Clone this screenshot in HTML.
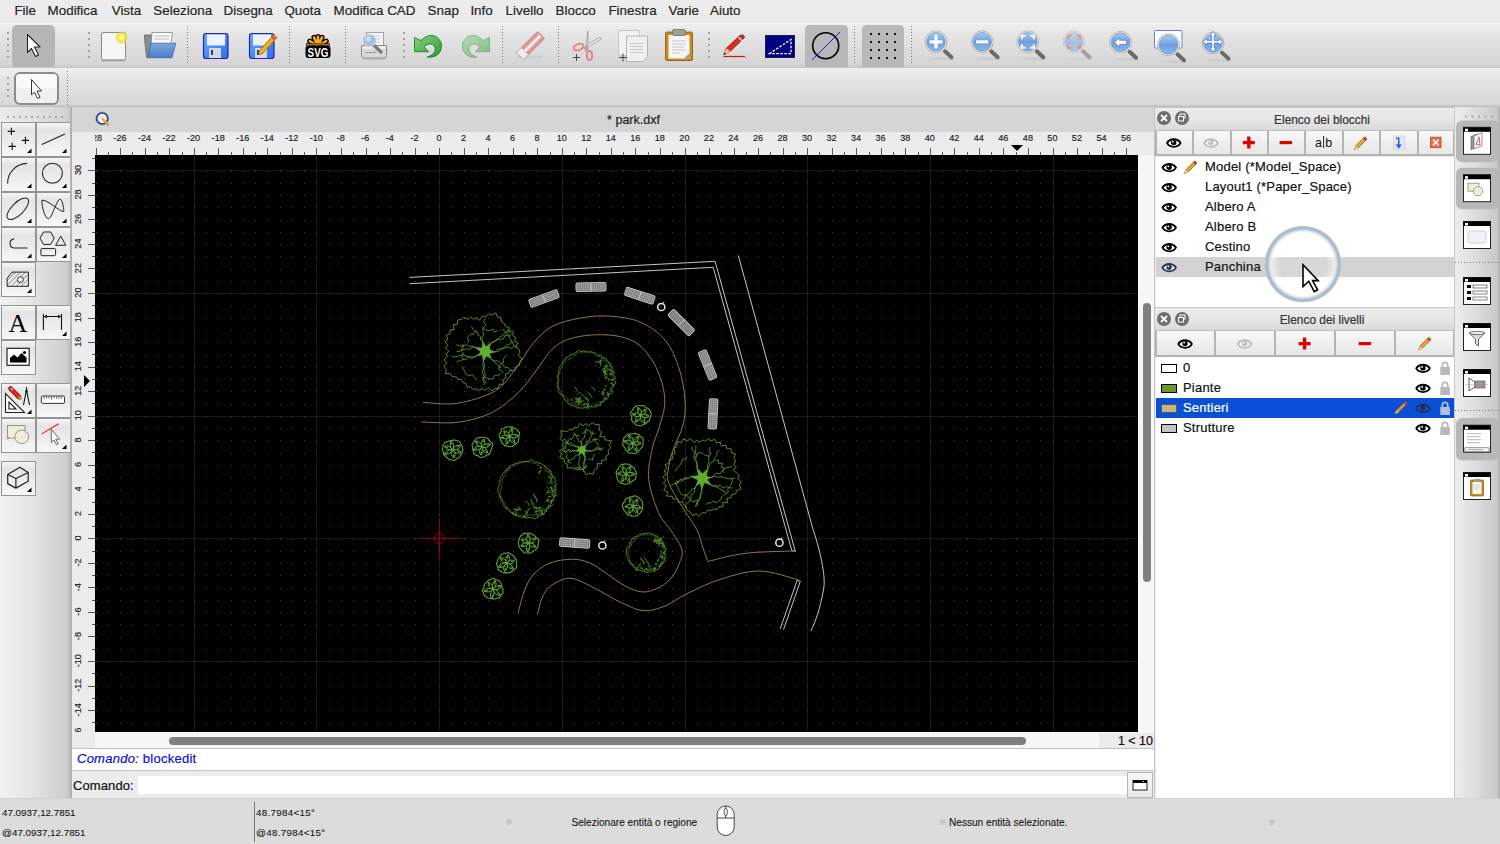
<!DOCTYPE html><html><head><meta charset="utf-8"><style>*{margin:0;padding:0;box-sizing:border-box}
html,body{width:1500px;height:844px;overflow:hidden;background:#ececec;font-family:"Liberation Sans",sans-serif;color:#1e1e1e}
div{-webkit-text-stroke:0.2px currentColor}
.a{position:absolute}
#menubar{left:0;top:0;width:1500px;height:23px;background:#ececec}
.mi{position:absolute;top:4px;font-size:13.4px;color:#262626;white-space:nowrap;line-height:14px}
#tb1{left:0;top:23px;width:1500px;height:45px;background:linear-gradient(#efefef,#e6e6e6 20%,#d6d6d6 90%,#c8c8c8);border-top:1px solid #f6f6f6}
#tb2{left:0;top:68px;width:1500px;height:39px;background:linear-gradient(#f0f0f0,#e4e4e4 30%,#d8d8d8 92%,#c4c4c4)}
#toolbox{left:0;top:107px;width:71px;height:691px;background:linear-gradient(90deg,#f2f2f2,#e6e6e6 40%,#cfcfcf 92%,#bdbdbd)}
#win{left:71px;top:107px;width:1084px;height:691px;background:#ececec;border-left:1px solid #b0b0b0}
#wtitle{left:72px;top:107px;width:1082px;height:25px;background:#d5d5d5}
#rtop{left:72px;top:132px;width:1082px;height:23px;background:#ececec}
#rleft{left:72px;top:155px;width:23px;height:593px;background:#ececec}
#canvas{left:95px;top:155px;width:1043px;height:577px;background:#000}
#vscroll{left:1138px;top:155px;width:16px;height:593px;background:#f7f7f7}
#hscroll{left:95px;top:732px;width:1043px;height:16px;background:#f7f7f7}
#status{left:0;top:798px;width:1500px;height:46px;background:#dcdcdc}
#rpanel{left:1154px;top:107px;width:301px;height:691px;background:#ececec;border-left:1px solid #c8c8c8}
#rtb{left:1455px;top:107px;width:45px;height:691px;background:linear-gradient(90deg,#ededed,#dedede 45%,#c9c9c9 92%,#b8b8b8)}
.btn{position:absolute;border:1px solid #9a9a9a;background:linear-gradient(#fbfbfb,#f0f0f0 50%,#e2e2e2)}
.tri{position:absolute;width:0;height:0;border-left:8px solid transparent;border-bottom:8px solid #000}
</style></head><body><div id="menubar" class="a">
<div class="mi" style="left:14.4px">File</div>
<div class="mi" style="left:47.6px">Modifica</div>
<div class="mi" style="left:111.7px">Vista</div>
<div class="mi" style="left:153.3px">Seleziona</div>
<div class="mi" style="left:223.6px">Disegna</div>
<div class="mi" style="left:284.4px">Quota</div>
<div class="mi" style="left:333.6px">Modifica CAD</div>
<div class="mi" style="left:427.6px">Snap</div>
<div class="mi" style="left:470.4px">Info</div>
<div class="mi" style="left:505.6px">Livello</div>
<div class="mi" style="left:555.6px">Blocco</div>
<div class="mi" style="left:608.4px">Finestra</div>
<div class="mi" style="left:668.6px">Varie</div>
<div class="mi" style="left:710.0px">Aiuto</div>
</div>
<div id="tb1" class="a"></div><div id="tb2" class="a"></div>
<div id="toolbox" class="a"></div>
<div id="win" class="a"></div><div id="wtitle" class="a"></div><div id="rtop" class="a"></div><div id="rleft" class="a"></div>
<div id="canvas" class="a"></div><div id="vscroll" class="a"></div><div id="hscroll" class="a"></div>
<div id="rpanel" class="a"></div><div id="rtb" class="a"></div><div id="status" class="a"></div>
<svg class="a" style="left:0;top:0" width="1500" height="110">
<defs><linearGradient id="gblue" x1="0" y1="0" x2="0" y2="1"><stop offset="0" stop-color="#a9c8f0"/><stop offset="0.5" stop-color="#6d9fe0"/><stop offset="1" stop-color="#8bb6ec"/></linearGradient><radialGradient id="gglow"><stop offset="0" stop-color="#ffffff"/><stop offset="0.35" stop-color="#f4f060"/><stop offset="0.7" stop-color="#e8e020" stop-opacity="0.8"/><stop offset="1" stop-color="#e8e020" stop-opacity="0"/></radialGradient><linearGradient id="gfold" x1="0" y1="0" x2="0" y2="1"><stop offset="0" stop-color="#7aa8e0"/><stop offset="1" stop-color="#4a7cc4"/></linearGradient><linearGradient id="gfl" x1="0" y1="0" x2="1" y2="1"><stop offset="0" stop-color="#6aa8ff"/><stop offset="1" stop-color="#2f6fe8"/></linearGradient><linearGradient id="gundo" x1="0" y1="0" x2="1" y2="1"><stop offset="0" stop-color="#8cd47a"/><stop offset="1" stop-color="#2a9a3a"/></linearGradient></defs>
<rect x="7" y="32" width="2" height="2" fill="#a0a0a0"/><rect x="7" y="38" width="2" height="2" fill="#a0a0a0"/><rect x="7" y="44" width="2" height="2" fill="#a0a0a0"/><rect x="7" y="50" width="2" height="2" fill="#a0a0a0"/><rect x="7" y="56" width="2" height="2" fill="#a0a0a0"/>
<rect x="12" y="25" width="43" height="43" rx="5" fill="#b6b6b6"/>
<path d="M27.5 34.5V52.5L31.5 48.5L35.5 56.5L38.5 55L34.5 47H40Z" fill="#fff" stroke="#222" stroke-width="1.1" stroke-linejoin="round"/>
<rect x="88" y="32" width="2" height="2" fill="#a0a0a0"/><rect x="88" y="38" width="2" height="2" fill="#a0a0a0"/><rect x="88" y="44" width="2" height="2" fill="#a0a0a0"/><rect x="88" y="50" width="2" height="2" fill="#a0a0a0"/><rect x="88" y="56" width="2" height="2" fill="#a0a0a0"/>
<rect x="101.5" y="32.5" width="24" height="27.5" rx="1.5" fill="#f6f6f6" stroke="#8a8a8a" stroke-width="1"/><line x1="102" y1="60.5" x2="125" y2="60.5" stroke="#9a9a9a" stroke-width="1.5"/>
<circle cx="121.6" cy="37.6" r="6.8" fill="url(#gglow)"/>
<path d="M144.5 35H152L151 44L147.5 57.5H146.5L144.5 38Z" fill="#8c8c8c" stroke="#6a6a6a" stroke-width="0.8"/>
<path d="M152 32.5H172.5L170.5 46H151Z" fill="#fafafa" stroke="#8a8a8a" stroke-width="0.8"/><path d="M155 36H169M154.5 39H169" stroke="#b8b8b8" stroke-width="1.2"/>
<path d="M151 43.2H175.8L172 57.7H147.3Z" fill="url(#gfold)" stroke="#3e68a8" stroke-width="0.8"/>
<line x1="187.5" y1="26" x2="187.5" y2="63" stroke="#7a7a7a" stroke-width="1" stroke-dasharray="1 2"/>
<rect x="203.5" y="33.5" width="24.5" height="25" rx="2.5" fill="url(#gfl)" stroke="#2525a8" stroke-width="1.2"/><rect x="207" y="34.5" width="18" height="11" fill="#eef2fb"/><rect x="209" y="48" width="12" height="10" fill="#d4d8e0"/><rect x="211" y="50" width="2" height="5" fill="#1a3ad0"/>
<rect x="249.5" y="33.5" width="24.5" height="25" rx="2.5" fill="url(#gfl)" stroke="#2525a8" stroke-width="1.2"/><rect x="253" y="34.5" width="18" height="11" fill="#eef2fb"/><rect x="255" y="48" width="12" height="10" fill="#d4d8e0"/><rect x="257" y="50" width="2" height="5" fill="#1a3ad0"/>
<path d="M259.5 50.5L274 34.5L277 37.5L262.5 53.5L258.5 54.5Z" fill="#f3b020" stroke="#a85a10" stroke-width="0.9"/><path d="M272 36.5L275 39.5" stroke="#e85030" stroke-width="2.5"/>
<line x1="289.5" y1="26" x2="289.5" y2="63" stroke="#7a7a7a" stroke-width="1" stroke-dasharray="1 2"/>
<path d="M318 46L309.8 41.2M318 46L314.0 37.4M318 46L318.0 36.5M318 46L322.0 37.4M318 46L326.2 41.2" stroke="#000" stroke-width="5.2" stroke-linecap="round"/><path d="M318 46L309.8 41.2M318 46L314.0 37.4M318 46L318.0 36.5M318 46L322.0 37.4M318 46L326.2 41.2" stroke="#f5a623" stroke-width="2.6" stroke-linecap="round"/>
<path d="M306 44.5H330" stroke="#000" stroke-width="2"/><path d="M307 44.8H329" stroke="#f5a623" stroke-width="1"/>
<rect x="305.5" y="45.5" width="25" height="12.5" rx="3" fill="#000"/><text x="318" y="56.6" text-anchor="middle" font-family="Liberation Sans" font-weight="bold" font-size="12" fill="#fff" transform="translate(318 0) scale(0.82 1) translate(-318 0)">SVG</text>
<line x1="345.5" y1="26" x2="345.5" y2="63" stroke="#7a7a7a" stroke-width="1" stroke-dasharray="1 2"/>
<rect x="366.5" y="32.5" width="17" height="15" fill="#f6f6f6" stroke="#9a9a9a" stroke-width="0.9"/><path d="M369 36H381M369 39H381M369 42H380" stroke="#c8c8c8" stroke-width="0.8"/>
<path d="M361.5 45.5H386.5V55.5Q386.5 58 384 58H364Q361.5 58 361.5 55.5Z" fill="#d8d8d8" stroke="#8a8a8a" stroke-width="1"/><path d="M362 46H386V49H362Z" fill="#ececec"/><path d="M365 52.5H376" stroke="#9a9a9a" stroke-width="1"/><ellipse cx="374" cy="59" rx="12" ry="1.3" fill="#b0b0b0" opacity="0.6"/>
<line x1="373" y1="44.5" x2="381" y2="52" stroke="#7a7a7a" stroke-width="3.2" stroke-linecap="round"/><circle cx="369.5" cy="40.5" r="5.8" fill="#9cc0ee" stroke="#c8c8c8" stroke-width="1.6"/><circle cx="368.5" cy="39" r="2.5" fill="#d6e6fa" opacity="0.8"/>
<rect x="403" y="32" width="2" height="2" fill="#a0a0a0"/><rect x="403" y="38" width="2" height="2" fill="#a0a0a0"/><rect x="403" y="44" width="2" height="2" fill="#a0a0a0"/><rect x="403" y="50" width="2" height="2" fill="#a0a0a0"/><rect x="403" y="56" width="2" height="2" fill="#a0a0a0"/>
<path d="M414.5 37.5V51.7H428.5L424 47Q428 42.5 432.5 44.5Q437 47.5 434 53Q431 56 427 57.2Q437 58 440.5 51Q444 42 436 36.5Q428 33 421 40.5Z" fill="url(#gundo)" stroke="#1a8030" stroke-width="0.9"/>
<g opacity="0.5"><path d="M489.5 37.5V51.7H475.5L480 47Q476 42.5 471.5 44.5Q467 47.5 470 53Q473 56 477 57.2Q467 58 463.5 51Q460 42 468 36.5Q476 33 483 40.5Z" fill="url(#gundo)" stroke="#1a8030" stroke-width="0.9"/></g>
<line x1="502.5" y1="26" x2="502.5" y2="63" stroke="#7a7a7a" stroke-width="1" stroke-dasharray="1 2"/>
<g opacity="0.75"><ellipse cx="530" cy="57" rx="13" ry="1.6" fill="#c8c8c8"/><g transform="translate(530.5 45.5) rotate(-45)"><rect x="-15" y="-5" width="30" height="10" rx="1.5" fill="#e08080" stroke="#b06060" stroke-width="0.8"/><rect x="-15" y="-5" width="7" height="10" fill="#f4f4f4" stroke="#a0a0a0" stroke-width="0.8"/><rect x="-8" y="-1.5" width="22" height="3" fill="#f8f0f0"/></g></g>
<line x1="558.5" y1="26" x2="558.5" y2="63" stroke="#7a7a7a" stroke-width="1" stroke-dasharray="1 2"/>
<g opacity="0.85"><path d="M588 31V50L585 52Z" fill="#f0f0f0" stroke="#8a8a8a" stroke-width="0.8"/><path d="M600 37L588 44L586 48L601 39Z" fill="#f0f0f0" stroke="#8a8a8a" stroke-width="0.8"/><ellipse cx="578.5" cy="47" rx="5" ry="3" fill="none" stroke="#e07878" stroke-width="2" transform="rotate(-20 578.5 47)"/><ellipse cx="589.5" cy="55.5" rx="2.6" ry="4.5" fill="none" stroke="#e07878" stroke-width="2"/><path d="M583 47L588 50" stroke="#e07878" stroke-width="2"/></g><path d="M573 57.5H580M576.5 54V61" stroke="#444" stroke-width="1"/>
<rect x="618.5" y="30.5" width="21" height="25" rx="1.5" fill="#f2f2f2" stroke="#c4c4c4" stroke-width="0.9"/><path d="M626 36.5H638M626 41H638" stroke="#d0d0d0"/><path d="M626.5 36H647.5V57L643 61.5H626.5Z" fill="#f0f0f0" stroke="#b0b0b0" stroke-width="0.9"/><path d="M630 43.5H644M630 46.5H643M630 49.5H643M630 52.5H644" stroke="#c4c4c4" stroke-width="0.9"/><path d="M619 57.5H627M623 53.5V61.5" stroke="#444"/>
<rect x="665.5" y="32" width="27" height="28.5" rx="1.5" fill="#c98a1e" stroke="#8e5e10" stroke-width="0.9"/><rect x="668.5" y="35" width="21" height="23.5" fill="#f6f6f6"/><path d="M672 41H686M672 44H686M672 47H684M672 50H686M672 53H680" stroke="#c0c0c0" stroke-width="0.9"/><path d="M684 58.5L689.5 53V58.5Z" fill="#9a9a9a"/><rect x="672.5" y="29.5" width="13" height="6" rx="1.5" fill="#a0a090" stroke="#707060" stroke-width="0.8"/>
<rect x="708" y="32" width="2" height="2" fill="#a0a0a0"/><rect x="708" y="38" width="2" height="2" fill="#a0a0a0"/><rect x="708" y="44" width="2" height="2" fill="#a0a0a0"/><rect x="708" y="50" width="2" height="2" fill="#a0a0a0"/><rect x="708" y="56" width="2" height="2" fill="#a0a0a0"/>
<path d="M723.5 56.5H745" stroke="#e01010" stroke-width="1.2"/><path d="M724 54.5L726 48.5L740 35.5Q742.5 34 744 36L744.5 37.5L730.5 51Z" fill="#e02a1a" stroke="#7a2a10" stroke-width="0.9"/><path d="M724 54.5L726 48.5L730.5 51Z" fill="#f0c890"/><path d="M738.5 37.5L742 40.5" stroke="#e8e8e8" stroke-width="1.6"/><circle cx="724.6" cy="54" r="0.9" fill="#222"/>
<rect x="765.5" y="35.5" width="29" height="22" fill="#000080" stroke="#202040" stroke-width="1"/><path d="M769.5 53.6L791 39.5V53.6Z" fill="none" stroke="#fff" stroke-width="1.3" stroke-dasharray="2.5 1.5"/>
<path d="M805 68V30Q805 25 810 25H843Q848 25 848 30V68Z" fill="#b8b8b8"/>
<circle cx="825.7" cy="45.7" r="13" fill="none" stroke="#000" stroke-width="1.6"/><line x1="812" y1="60" x2="840" y2="32" stroke="#1a1aee" stroke-width="1"/>
<line x1="854.5" y1="26" x2="854.5" y2="63" stroke="#7a7a7a" stroke-width="1" stroke-dasharray="1 2"/>
<path d="M862 68V30Q862 25 867 25H899Q904 25 904 30V68Z" fill="#b8b8b8"/>
<rect x="870" y="33" width="2" height="2" fill="#111"/>
<rect x="870" y="41" width="2" height="2" fill="#111"/>
<rect x="870" y="49" width="2" height="2" fill="#111"/>
<rect x="870" y="57" width="2" height="2" fill="#111"/>
<rect x="878" y="33" width="2" height="2" fill="#111"/>
<rect x="878" y="41" width="2" height="2" fill="#111"/>
<rect x="878" y="49" width="2" height="2" fill="#111"/>
<rect x="878" y="57" width="2" height="2" fill="#111"/>
<rect x="886" y="33" width="2" height="2" fill="#111"/>
<rect x="886" y="41" width="2" height="2" fill="#111"/>
<rect x="886" y="49" width="2" height="2" fill="#111"/>
<rect x="886" y="57" width="2" height="2" fill="#111"/>
<rect x="894" y="33" width="2" height="2" fill="#111"/>
<rect x="894" y="41" width="2" height="2" fill="#111"/>
<rect x="894" y="49" width="2" height="2" fill="#111"/>
<rect x="894" y="57" width="2" height="2" fill="#111"/>
<line x1="911.5" y1="26" x2="911.5" y2="63" stroke="#7a7a7a" stroke-width="1" stroke-dasharray="1 2"/>
<g opacity="1.0"><ellipse cx="942" cy="58.8" rx="12" ry="1.5" fill="#c4c4c4" opacity="0.6"/><line x1="945" y1="51.3" x2="951.5" y2="57.3" stroke="#6a6a6a" stroke-width="4" stroke-linecap="round"/><circle cx="936" cy="41.8" r="11" fill="#e8e8e0" stroke="#b8b8b0" stroke-width="1"/><circle cx="936" cy="41.8" r="9.3" fill="url(#gblue)" stroke="#5a86c8" stroke-width="0.6"/><path d="M929.5 41.8H942.5M936 35.3V48.3" stroke="#fff" stroke-width="3.2"/></g>
<g opacity="1.0"><ellipse cx="988.2" cy="58.8" rx="12" ry="1.5" fill="#c4c4c4" opacity="0.6"/><line x1="991.2" y1="51.3" x2="997.7" y2="57.3" stroke="#6a6a6a" stroke-width="4" stroke-linecap="round"/><circle cx="982.2" cy="41.8" r="11" fill="#e8e8e0" stroke="#b8b8b0" stroke-width="1"/><circle cx="982.2" cy="41.8" r="9.3" fill="url(#gblue)" stroke="#5a86c8" stroke-width="0.6"/><path d="M976.2 41.8H988.2" stroke="#fff" stroke-width="3"/></g>
<g opacity="1.0"><ellipse cx="1033.8" cy="58.8" rx="12" ry="1.5" fill="#c4c4c4" opacity="0.6"/><line x1="1036.8" y1="51.3" x2="1043.3" y2="57.3" stroke="#6a6a6a" stroke-width="4" stroke-linecap="round"/><circle cx="1027.8" cy="41.8" r="11" fill="#e8e8e0" stroke="#b8b8b0" stroke-width="1"/><circle cx="1027.8" cy="41.8" r="9.3" fill="url(#gblue)" stroke="#5a86c8" stroke-width="0.6"/><path d="M1021.8 39.3V35.8H1025.3M1030.3 35.8H1033.8V39.3M1033.8 44.3V47.8H1030.3M1025.3 47.8H1021.8V44.3" stroke="#fff" stroke-width="2" fill="none"/></g>
<g opacity="0.5"><ellipse cx="1080" cy="58.8" rx="12" ry="1.5" fill="#c4c4c4" opacity="0.6"/><line x1="1083" y1="51.3" x2="1089.5" y2="57.3" stroke="#6a6a6a" stroke-width="4" stroke-linecap="round"/><circle cx="1074" cy="41.8" r="11" fill="#e8e8e0" stroke="#b8b8b0" stroke-width="1"/><circle cx="1074" cy="41.8" r="9.3" fill="url(#gblue)" stroke="#5a86c8" stroke-width="0.6"/><path d="M1068 39.3V35.8H1071.5M1076.5 35.8H1080V39.3M1080 44.3V47.8H1076.5M1071.5 47.8H1068V44.3" stroke="#f04040" stroke-width="2" fill="none"/></g>
<g opacity="1.0"><ellipse cx="1126.6" cy="59.3" rx="12" ry="1.5" fill="#c4c4c4" opacity="0.6"/><line x1="1129.6" y1="51.8" x2="1136.1" y2="57.8" stroke="#6a6a6a" stroke-width="4" stroke-linecap="round"/><circle cx="1120.6" cy="42.3" r="11" fill="#e8e8e0" stroke="#b8b8b0" stroke-width="1"/><circle cx="1120.6" cy="42.3" r="9.3" fill="url(#gblue)" stroke="#5a86c8" stroke-width="0.6"/><path d="M1114.6 42.3L1119.6 37.3V40.3H1126.6V44.3H1119.6V47.3Z" fill="#fff" stroke="#3a6ab8" stroke-width="0.6"/></g>
<rect x="1154.5" y="30.5" width="27.5" height="17.5" rx="1" fill="#fff" stroke="#5a86d0" stroke-width="1"/>
<g opacity="1.0"><ellipse cx="1174.5" cy="61.8" rx="12" ry="1.5" fill="#c4c4c4" opacity="0.6"/><line x1="1177.5" y1="54.3" x2="1184.0" y2="60.3" stroke="#6a6a6a" stroke-width="4" stroke-linecap="round"/><circle cx="1168.5" cy="44.8" r="11" fill="#e8e8e0" stroke="#b8b8b0" stroke-width="1"/><circle cx="1168.5" cy="44.8" r="9.3" fill="url(#gblue)" stroke="#5a86c8" stroke-width="0.6"/></g>
<g opacity="1.0"><ellipse cx="1219" cy="60.1" rx="12" ry="1.5" fill="#c4c4c4" opacity="0.6"/><line x1="1222" y1="52.6" x2="1228.5" y2="58.6" stroke="#6a6a6a" stroke-width="4" stroke-linecap="round"/><circle cx="1213" cy="43.1" r="11" fill="#e8e8e0" stroke="#b8b8b0" stroke-width="1"/><circle cx="1213" cy="43.1" r="9.3" fill="url(#gblue)" stroke="#5a86c8" stroke-width="0.6"/><path d="M1213 31.299999999999997L1216 35.8H1214.2V40.599999999999994H1219V38.8L1223.5 41.8L1219 44.8V43.0H1214.2V47.8H1216L1213 52.3L1210 47.8H1211.8V43.0H1207V44.8L1202.5 41.8L1207 38.8V40.599999999999994H1211.8V35.8H1210Z" fill="#fff" stroke="#4a7ac8" stroke-width="0.7"/></g>
<rect x="7" y="77" width="2" height="2" fill="#a0a0a0"/><rect x="7" y="83" width="2" height="2" fill="#a0a0a0"/><rect x="7" y="89" width="2" height="2" fill="#a0a0a0"/><rect x="7" y="95" width="2" height="2" fill="#a0a0a0"/>
<rect x="15" y="73" width="43" height="31" rx="5" fill="#f0f0f0" stroke="#8c8c8c" stroke-width="2"/>
<rect x="16" y="74" width="41" height="14" rx="4" fill="#fafafa"/>
<path d="M31.5 79.5V95L34.5 92L37.5 98.5L40 97.3L37 91H41.5Z" fill="#fff" stroke="#333" stroke-width="1" stroke-linejoin="round"/>
<line x1="67.5" y1="71" x2="67.5" y2="105" stroke="#7a7a7a" stroke-width="1" stroke-dasharray="1 2"/>
</svg>
<div class="a" style="left:0;top:67px;width:1500px;height:1px;background:#c6c6c6"></div>
<div class="a" style="left:0;top:106px;width:1500px;height:1px;background:#bcbcbc"></div>
<svg class="a" style="left:0;top:0" width="72" height="800">
<defs><linearGradient id="bg" x1="0" y1="0" x2="0" y2="1"><stop offset="0" stop-color="#f7f7f7"/><stop offset="0.22" stop-color="#e4e4e4"/><stop offset="0.6" stop-color="#ededed"/><stop offset="1" stop-color="#f7f7f7"/></linearGradient><pattern id="hat" width="3.5" height="3.5" patternUnits="userSpaceOnUse" patternTransform="rotate(45)"><line x1="0" y1="0" x2="0" y2="3.5" stroke="#444" stroke-width="0.9"/></pattern></defs>
<rect x="0" y="107" width="71" height="14" fill="#dcdcdc" opacity="0.35"/>
<rect x="7" y="116" width="2" height="2" fill="#a8a8a8"/>
<rect x="13" y="116" width="2" height="2" fill="#a8a8a8"/>
<rect x="19" y="116" width="2" height="2" fill="#a8a8a8"/>
<rect x="25" y="116" width="2" height="2" fill="#a8a8a8"/>
<rect x="31" y="116" width="2" height="2" fill="#a8a8a8"/>
<rect x="37" y="116" width="2" height="2" fill="#a8a8a8"/>
<rect x="43" y="116" width="2" height="2" fill="#a8a8a8"/>
<rect x="49" y="116" width="2" height="2" fill="#a8a8a8"/>
<rect x="55" y="116" width="2" height="2" fill="#a8a8a8"/>
<rect x="61" y="116" width="2" height="2" fill="#a8a8a8"/>
<rect x="1.5" y="122.5" width="34" height="34" fill="url(#bg)" stroke="#949494" stroke-width="1"/><path d="M27 153H31.5V148.5Z" fill="#000"/>
<rect x="36.5" y="122.5" width="34" height="34" fill="url(#bg)" stroke="#949494" stroke-width="1"/><path d="M62 153H66.5V148.5Z" fill="#000"/>
<rect x="1.5" y="157.5" width="34" height="34" fill="url(#bg)" stroke="#949494" stroke-width="1"/><path d="M27 188H31.5V183.5Z" fill="#000"/>
<rect x="36.5" y="157.5" width="34" height="34" fill="url(#bg)" stroke="#949494" stroke-width="1"/><path d="M62 188H66.5V183.5Z" fill="#000"/>
<rect x="1.5" y="192.5" width="34" height="34" fill="url(#bg)" stroke="#949494" stroke-width="1"/><path d="M27 223H31.5V218.5Z" fill="#000"/>
<rect x="36.5" y="192.5" width="34" height="34" fill="url(#bg)" stroke="#949494" stroke-width="1"/><path d="M62 223H66.5V218.5Z" fill="#000"/>
<rect x="1.5" y="227.5" width="34" height="34" fill="url(#bg)" stroke="#949494" stroke-width="1"/><path d="M27 258H31.5V253.5Z" fill="#000"/>
<rect x="36.5" y="227.5" width="34" height="34" fill="url(#bg)" stroke="#949494" stroke-width="1"/><path d="M62 258H66.5V253.5Z" fill="#000"/>
<rect x="1.5" y="262.5" width="34" height="34" fill="url(#bg)" stroke="#949494" stroke-width="1"/><path d="M27 293H31.5V288.5Z" fill="#000"/>
<rect x="1.5" y="305.5" width="34" height="34" fill="url(#bg)" stroke="#949494" stroke-width="1"/>
<rect x="36.5" y="305.5" width="34" height="34" fill="url(#bg)" stroke="#949494" stroke-width="1"/><path d="M62 336H66.5V331.5Z" fill="#000"/>
<rect x="1.5" y="340.5" width="34" height="34" fill="url(#bg)" stroke="#949494" stroke-width="1"/>
<rect x="1.5" y="383.5" width="34" height="34" fill="url(#bg)" stroke="#949494" stroke-width="1"/><path d="M27 414H31.5V409.5Z" fill="#000"/>
<rect x="36.5" y="383.5" width="34" height="34" fill="url(#bg)" stroke="#949494" stroke-width="1"/>
<rect x="1.5" y="418.5" width="34" height="34" fill="url(#bg)" stroke="#949494" stroke-width="1"/>
<rect x="36.5" y="418.5" width="34" height="34" fill="url(#bg)" stroke="#949494" stroke-width="1"/><path d="M62 449H66.5V444.5Z" fill="#000"/>
<rect x="1.5" y="461.5" width="34" height="34" fill="url(#bg)" stroke="#949494" stroke-width="1"/><path d="M27 492H31.5V487.5Z" fill="#000"/>
<path d="M7.8 131.4H15M11.4 127.8V135M21.8 140.4H29M25.4 136.8V144M8.6 146.4H15.8M12.2 142.8V150" stroke="#111" stroke-width="1.1"/>
<path d="M41.8 144.6L64.9 133.9" stroke="#222" fill="none" stroke-width="1.1"/>
<path d="M7.6 183.4A20 20 0 0 1 27.1 163.4" stroke="#222" fill="none" stroke-width="1.1"/>
<circle cx="52.4" cy="173.2" r="10" stroke="#222" fill="none" stroke-width="1.1"/>
<ellipse cx="17.8" cy="208.8" rx="14" ry="6" transform="rotate(-45 17.8 208.8)" stroke="#222" fill="none" stroke-width="1"/>
<path d="M41.8 200.3C42 208 45 218.6 48.4 218.6C51 218.6 53 211 55.1 207C57 203 59 197.5 60.9 199.5C62.5 201 64.5 211.5 63.6 211.5C60 212 47 199 41.8 200.3Z" stroke="#222" fill="none" stroke-width="1"/>
<path d="M14.2 238.9A4.6 4.6 0 0 0 13.8 248H27.6" stroke="#222" fill="none" stroke-width="1.1"/>
<path d="M43.5 232L50.6 232L54.2 238.2L50.6 244.4L43.5 244.4L40 238.2Z" stroke="#222" fill="none" stroke-width="1"/>
<path d="M55.6 245.3H65.8L60.7 236.1Z" stroke="#222" fill="none" stroke-width="1"/>
<rect x="40.9" y="248.6" width="14.7" height="7.1" rx="1" stroke="#222" fill="none" stroke-width="1"/>
<path d="M7.1 278.3L12 272.1H28.4V286.3H7.1Z" fill="url(#hat)" stroke="#222" stroke-width="1"/><circle cx="20.4" cy="279.7" r="3" fill="#f0f0f0" stroke="#222" stroke-width="0.9"/>
<text x="18" y="332" text-anchor="middle" font-family="Liberation Serif" font-size="26" fill="#000">A</text>
<path d="M43.4 313.9V330M61.5 313.9V330M44 316.5H61" stroke="#111" stroke-width="1.1"/><path d="M44 316.5L47 314.5V318.5ZM61 316.5L58 314.5V318.5Z" fill="#111"/>
<rect x="7" y="348.3" width="22.2" height="17" fill="#fff" stroke="#222" stroke-width="1.2"/><path d="M10 362.5V358L14 354.5L17.5 357.5L21.5 353L26.5 357.5V362.5Z" fill="#000"/><circle cx="24.5" cy="352.5" r="1.6" fill="#000"/>
<path d="M5.5 393.5V412.5H24.5Z" fill="#fff" stroke="#222" stroke-width="1.1"/><path d="M9 402V409H16Z" fill="#fff" stroke="#111" stroke-width="1.1"/>
<path d="M10.5 388.5L19 397" stroke="#7a2010" stroke-width="4.6" stroke-linecap="round"/><path d="M10.5 388.5L19 397" stroke="#e82a20" stroke-width="3" stroke-linecap="round"/><path d="M11 388L13 390" stroke="#f8c0c0" stroke-width="1.2"/><path d="M18.5 396.5L21.5 399.5" stroke="#c89050" stroke-width="2"/>
<path d="M26.5 387V390M26.5 390L23.5 405M26.5 390L29.5 405" stroke="#111" stroke-width="1.1" fill="none"/><circle cx="26.5" cy="391" r="1.2" fill="#111"/>
<rect x="41.3" y="396" width="23.2" height="7.4" rx="1.2" fill="#fff" stroke="#333" stroke-width="1"/><path d="M44 396.5V399M46.5 396.5V398.5M49 396.5V398.5M51.5 396.5V399.5M54 396.5V398.5M56.5 396.5V398.5M59 396.5V399M61.5 396.5V398.5" stroke="#333" stroke-width="0.8"/>
<rect x="7.5" y="425.6" width="17.5" height="12.4" fill="#f2eedc" stroke="#8a8a7a" stroke-width="0.9"/><circle cx="21.7" cy="436.8" r="6.8" fill="#f2eedc" fill-opacity="0.85" stroke="#8a8a7a" stroke-width="0.9"/><circle cx="7.9" cy="438" r="1.3" fill="#f07070"/>
<path d="M41.6 433.9L58.7 423.7" stroke="#f01818" stroke-width="1.1"/><path d="M51.3 429.3V442.5L54 440L56.5 444.8L58.3 443.8L55.8 439.2H59.5Z" fill="#fff" stroke="#555" stroke-width="0.9" stroke-linejoin="round"/>
<path d="M19.9 467.2L28.2 472.5V481.3L15.9 488.1L7.7 483.6V474.5ZM7.7 474.5L15.9 478.5L28.2 472.5M15.9 478.5V488.1" stroke="#222" stroke-width="1.2" fill="none" stroke-linejoin="round"/>
</svg>
<div class="a" style="left:70px;top:107px;width:1px;height:691px;background:#b4b4b4"></div>
<svg class="a" style="left:0;top:0" width="1500" height="844">
<defs><clipPath id="rl"><rect x="72" y="155" width="23" height="577"/></clipPath><clipPath id="rt"><rect x="95" y="132" width="1043" height="23"/></clipPath></defs>
<g clip-path="url(#rt)"><path d="M96.5 148V155M108.5 152V155M120.5 148V155M132.5 152V155M145.5 148V155M157.5 152V155M169.5 148V155M182.5 152V155M194.5 148V155M206.5 152V155M218.5 148V155M231.5 152V155M243.5 148V155M255.5 152V155M267.5 148V155M280.5 152V155M292.5 148V155M304.5 152V155M316.5 148V155M329.5 152V155M341.5 148V155M353.5 152V155M366.5 148V155M378.5 152V155M390.5 148V155M402.5 152V155M415.5 148V155M427.5 152V155M439.5 148V155M451.5 152V155M464.5 148V155M476.5 152V155M488.5 148V155M500.5 152V155M513.5 148V155M525.5 152V155M537.5 148V155M550.5 152V155M562.5 148V155M574.5 152V155M586.5 148V155M599.5 152V155M611.5 148V155M623.5 152V155M635.5 148V155M648.5 152V155M660.5 148V155M672.5 152V155M685.5 148V155M697.5 152V155M709.5 148V155M721.5 152V155M734.5 148V155M746.5 152V155M758.5 148V155M770.5 152V155M783.5 148V155M795.5 152V155M807.5 148V155M819.5 152V155M832.5 148V155M844.5 152V155M856.5 148V155M869.5 152V155M881.5 148V155M893.5 152V155M905.5 148V155M918.5 152V155M930.5 148V155M942.5 152V155M954.5 148V155M967.5 152V155M979.5 148V155M991.5 152V155M1003.5 148V155M1016.5 152V155M1028.5 148V155M1040.5 152V155M1053.5 148V155M1065.5 152V155M1077.5 148V155M1089.5 152V155M1102.5 148V155M1114.5 152V155M1126.5 148V155" stroke="#5a5a5a" stroke-width="1" fill="none"/></g>
<g clip-path="url(#rl)"><path d="M88 735.5H95M92 722.5H95M88 710.5H95M92 698.5H95M88 686.5H95M92 673.5H95M88 661.5H95M92 649.5H95M88 636.5H95M92 624.5H95M88 612.5H95M92 600.5H95M88 587.5H95M92 575.5H95M88 563.5H95M92 551.5H95M88 538.5H95M92 526.5H95M88 514.5H95M92 502.5H95M88 489.5H95M92 477.5H95M88 465.5H95M92 452.5H95M88 440.5H95M92 428.5H95M88 416.5H95M92 403.5H95M88 391.5H95M92 379.5H95M88 367.5H95M92 354.5H95M88 342.5H95M92 330.5H95M88 318.5H95M92 305.5H95M88 293.5H95M92 281.5H95M88 268.5H95M92 256.5H95M88 244.5H95M92 232.5H95M88 219.5H95M92 207.5H95M88 195.5H95M92 183.5H95M88 170.5H95M92 158.5H95" stroke="#5a5a5a" stroke-width="1" fill="none"/></g>
<g clip-path="url(#rt)" font-family="Liberation Sans" font-size="9.1" fill="#1a1a1a" stroke="#1a1a1a" stroke-width="0.15"><text x="95.5" y="141" text-anchor="middle">-28</text><text x="120.0" y="141" text-anchor="middle">-26</text><text x="144.6" y="141" text-anchor="middle">-24</text><text x="169.1" y="141" text-anchor="middle">-22</text><text x="193.6" y="141" text-anchor="middle">-20</text><text x="218.2" y="141" text-anchor="middle">-18</text><text x="242.7" y="141" text-anchor="middle">-16</text><text x="267.2" y="141" text-anchor="middle">-14</text><text x="291.8" y="141" text-anchor="middle">-12</text><text x="316.3" y="141" text-anchor="middle">-10</text><text x="340.9" y="141" text-anchor="middle">-8</text><text x="365.4" y="141" text-anchor="middle">-6</text><text x="389.9" y="141" text-anchor="middle">-4</text><text x="414.5" y="141" text-anchor="middle">-2</text><text x="439.0" y="141" text-anchor="middle">0</text><text x="463.5" y="141" text-anchor="middle">2</text><text x="488.1" y="141" text-anchor="middle">4</text><text x="512.6" y="141" text-anchor="middle">6</text><text x="537.1" y="141" text-anchor="middle">8</text><text x="561.7" y="141" text-anchor="middle">10</text><text x="586.2" y="141" text-anchor="middle">12</text><text x="610.8" y="141" text-anchor="middle">14</text><text x="635.3" y="141" text-anchor="middle">16</text><text x="659.8" y="141" text-anchor="middle">18</text><text x="684.4" y="141" text-anchor="middle">20</text><text x="708.9" y="141" text-anchor="middle">22</text><text x="733.4" y="141" text-anchor="middle">24</text><text x="758.0" y="141" text-anchor="middle">26</text><text x="782.5" y="141" text-anchor="middle">28</text><text x="807.0" y="141" text-anchor="middle">30</text><text x="831.6" y="141" text-anchor="middle">32</text><text x="856.1" y="141" text-anchor="middle">34</text><text x="880.6" y="141" text-anchor="middle">36</text><text x="905.2" y="141" text-anchor="middle">38</text><text x="929.7" y="141" text-anchor="middle">40</text><text x="954.3" y="141" text-anchor="middle">42</text><text x="978.8" y="141" text-anchor="middle">44</text><text x="1003.3" y="141" text-anchor="middle">46</text><text x="1027.9" y="141" text-anchor="middle">48</text><text x="1052.4" y="141" text-anchor="middle">50</text><text x="1076.9" y="141" text-anchor="middle">52</text><text x="1101.5" y="141" text-anchor="middle">54</text><text x="1126.0" y="141" text-anchor="middle">56</text></g>
<g clip-path="url(#rl)" font-family="Liberation Sans" font-size="9.1" fill="#1a1a1a" stroke="#1a1a1a" stroke-width="0.15"><text transform="translate(81 734.3) rotate(-90)" text-anchor="middle">-16</text><text transform="translate(81 709.8) rotate(-90)" text-anchor="middle">-14</text><text transform="translate(81 685.2) rotate(-90)" text-anchor="middle">-12</text><text transform="translate(81 660.7) rotate(-90)" text-anchor="middle">-10</text><text transform="translate(81 636.1) rotate(-90)" text-anchor="middle">-8</text><text transform="translate(81 611.6) rotate(-90)" text-anchor="middle">-6</text><text transform="translate(81 587.1) rotate(-90)" text-anchor="middle">-4</text><text transform="translate(81 562.5) rotate(-90)" text-anchor="middle">-2</text><text transform="translate(81 538.0) rotate(-90)" text-anchor="middle">0</text><text transform="translate(81 513.5) rotate(-90)" text-anchor="middle">2</text><text transform="translate(81 488.9) rotate(-90)" text-anchor="middle">4</text><text transform="translate(81 464.4) rotate(-90)" text-anchor="middle">6</text><text transform="translate(81 439.9) rotate(-90)" text-anchor="middle">8</text><text transform="translate(81 415.3) rotate(-90)" text-anchor="middle">10</text><text transform="translate(81 390.8) rotate(-90)" text-anchor="middle">12</text><text transform="translate(81 366.2) rotate(-90)" text-anchor="middle">14</text><text transform="translate(81 341.7) rotate(-90)" text-anchor="middle">16</text><text transform="translate(81 317.2) rotate(-90)" text-anchor="middle">18</text><text transform="translate(81 292.6) rotate(-90)" text-anchor="middle">20</text><text transform="translate(81 268.1) rotate(-90)" text-anchor="middle">22</text><text transform="translate(81 243.6) rotate(-90)" text-anchor="middle">24</text><text transform="translate(81 219.0) rotate(-90)" text-anchor="middle">26</text><text transform="translate(81 194.5) rotate(-90)" text-anchor="middle">28</text><text transform="translate(81 170.0) rotate(-90)" text-anchor="middle">30</text></g>
<path d="M1011 145H1023L1017 151Z" fill="#000"/>
<path d="M84 375V387L90 381Z" fill="#000"/>
</svg>
<div class="a" style="left:72px;top:132px;width:23px;height:23px;background:#ececec"></div>
<div class="a" style="left:1138px;top:132px;width:16px;height:23px;background:#ececec"></div>
<div class="a" style="left:563.5px;top:113px;width:140px;text-align:center;font-size:12.5px;color:#222">* park.dxf</div>
<div class="a" style="left:169px;top:737px;width:857px;height:8px;border-radius:4px;background:#808080"></div>
<div class="a" style="left:1143px;top:303px;width:8px;height:279px;border-radius:4px;background:#808080"></div>
<div class="a" style="left:1099px;top:733px;width:55px;height:15px;background:#ebebeb"></div>
<div class="a" style="left:1099px;top:734px;width:54px;text-align:right;font-size:12.5px;color:#111;line-height:14px">1 &lt; 10</div>
<div class="a" style="left:72px;top:748px;width:1082px;height:1px;background:#c2c2c2"></div>
<div class="a" style="left:72px;top:749px;width:1082px;height:21px;background:#fff"></div>
<div class="a" style="left:77px;top:751px;font-size:13px;letter-spacing:0.25px;color:#1010d0;white-space:nowrap"><i>Comando:</i> blockedit</div>
<div class="a" style="left:72px;top:770px;width:1082px;height:1px;background:#c6c6c6"></div>
<div class="a" style="left:72px;top:771px;width:1082px;height:27px;background:#ececec"></div>
<div class="a" style="left:73px;top:778px;font-size:13px;letter-spacing:0.1px;color:#111">Comando:</div>
<div class="a" style="left:138px;top:776px;width:989px;height:18px;background:#fff"></div>
<div class="a" style="left:1127px;top:772px;width:26px;height:26px;border:1px solid #b4b4b4;background:linear-gradient(#f8f8f8,#e8e8e8)"></div>
<svg class="a" style="left:1132px;top:779px" width="16" height="12"><rect x="1" y="1.5" width="14" height="9.5" fill="#fff" stroke="#222" stroke-width="1"/><rect x="1" y="1" width="14" height="3" fill="#000"/><rect x="11" y="2" width="1" height="1" fill="#fff"/></svg>
<svg class="a" style="left:94px;top:111px" width="16" height="16" viewBox="0 0 16 16"><circle cx="8.2" cy="7.5" r="5.6" fill="#f4f4f6" stroke="#2c3f8c" stroke-width="1.8"/><circle cx="8.2" cy="7.5" r="6.6" fill="none" stroke="#8a9ac8" stroke-width="0.6"/><path d="M5 5.5L7 7M9 4.5L9.5 6.5M11 7.5L10 8" stroke="#e0a0a0" stroke-width="0.6"/><path d="M7.8 7.2L13.2 12.8" stroke="#f0b020" stroke-width="2.2"/><path d="M13 12.5L14.6 14.2" stroke="#e06060" stroke-width="1.6"/></svg>
<div class="a" style="left:1154px;top:107px;width:1px;height:691px;background:#c4c4c4"></div>
<div class="a" style="left:1155px;top:107px;width:300px;height:24px;background:linear-gradient(#ececec,#e4e4e4 60%,#dadada);border-top:1px solid #c8c8c8;border-bottom:1px solid #c0c0c0"></div><div class="a" style="left:1155px;top:112.5px;width:334px;text-align:center;font-size:11.9px;color:#333;white-space:nowrap">Elenco dei blocchi</div>
<div class="a" style="left:1155px;top:307px;width:300px;height:24px;background:linear-gradient(#ececec,#e4e4e4 60%,#dadada);border-top:1px solid #c8c8c8;border-bottom:1px solid #c0c0c0"></div><div class="a" style="left:1155px;top:312.5px;width:334px;text-align:center;font-size:11.9px;color:#333;white-space:nowrap">Elenco dei livelli</div>
<div class="a" style="left:1155px;top:131px;width:300px;height:25px;background:linear-gradient(#f9f9f9,#eeeeee 55%,#e6e6e6);border-bottom:2px solid #b4b4b4"></div><div class="a" style="left:1155px;top:131px;width:2px;height:25px;background:#b4b4b4"></div><div class="a" style="left:1192px;top:131px;width:2px;height:25px;background:#b4b4b4"></div><div class="a" style="left:1230px;top:131px;width:2px;height:25px;background:#b4b4b4"></div><div class="a" style="left:1267px;top:131px;width:2px;height:25px;background:#b4b4b4"></div><div class="a" style="left:1304px;top:131px;width:2px;height:25px;background:#b4b4b4"></div><div class="a" style="left:1342px;top:131px;width:2px;height:25px;background:#b4b4b4"></div><div class="a" style="left:1379px;top:131px;width:2px;height:25px;background:#b4b4b4"></div><div class="a" style="left:1417px;top:131px;width:2px;height:25px;background:#b4b4b4"></div><div class="a" style="left:1453px;top:131px;width:2px;height:25px;background:#b4b4b4"></div>
<div class="a" style="left:1155px;top:331px;width:300px;height:26px;background:linear-gradient(#f9f9f9,#eeeeee 55%,#e6e6e6);border-bottom:2px solid #b4b4b4"></div><div class="a" style="left:1155px;top:331px;width:2px;height:26px;background:#b4b4b4"></div><div class="a" style="left:1214px;top:331px;width:2px;height:26px;background:#b4b4b4"></div><div class="a" style="left:1274px;top:331px;width:2px;height:26px;background:#b4b4b4"></div><div class="a" style="left:1334px;top:331px;width:2px;height:26px;background:#b4b4b4"></div><div class="a" style="left:1394px;top:331px;width:2px;height:26px;background:#b4b4b4"></div><div class="a" style="left:1453px;top:331px;width:2px;height:26px;background:#b4b4b4"></div>
<div class="a" style="left:1156px;top:157px;width:298px;height:150px;background:#fff"></div>
<div class="a" style="left:1156px;top:357px;width:298px;height:441px;background:#fff"></div>
<div class="a" style="left:1156px;top:257px;width:298px;height:20px;background:#d2d2d2"></div>
<div class="a" style="left:1156px;top:398px;width:298px;height:20px;background:#0a4fd6"></div>
<div class="a" style="left:1454px;top:107px;width:1px;height:691px;background:#c8c8c8"></div>
<div class="a" style="left:1205px;top:159px;font-size:13px;letter-spacing:0.2px;color:#111;white-space:nowrap;line-height:16px">Model (*Model_Space)</div>
<div class="a" style="left:1205px;top:179px;font-size:13px;letter-spacing:0.2px;color:#111;white-space:nowrap;line-height:16px">Layout1 (*Paper_Space)</div>
<div class="a" style="left:1205px;top:199px;font-size:13px;letter-spacing:0.2px;color:#111;white-space:nowrap;line-height:16px">Albero A</div>
<div class="a" style="left:1205px;top:219px;font-size:13px;letter-spacing:0.2px;color:#111;white-space:nowrap;line-height:16px">Albero B</div>
<div class="a" style="left:1205px;top:239px;font-size:13px;letter-spacing:0.2px;color:#111;white-space:nowrap;line-height:16px">Cestino</div>
<div class="a" style="left:1205px;top:259px;font-size:13px;letter-spacing:0.2px;color:#111;white-space:nowrap;line-height:16px">Panchina</div>
<div class="a" style="left:1183px;top:360px;font-size:13px;letter-spacing:0.2px;color:#111;white-space:nowrap;line-height:16px">0</div>
<div class="a" style="left:1161px;top:364px;width:16px;height:9px;background:#fff;border:1px solid #000"></div>
<div class="a" style="left:1183px;top:380px;font-size:13px;letter-spacing:0.2px;color:#111;white-space:nowrap;line-height:16px">Piante</div>
<div class="a" style="left:1161px;top:384px;width:16px;height:9px;background:#6a9a2a;border:1px solid #000"></div>
<div class="a" style="left:1183px;top:400px;font-size:13px;letter-spacing:0.2px;color:#fff;white-space:nowrap;line-height:16px">Sentieri</div>
<div class="a" style="left:1161px;top:404px;width:16px;height:9px;background:#c8b488;border:1px solid #5a5a5a"></div>
<div class="a" style="left:1183px;top:420px;font-size:13px;letter-spacing:0.2px;color:#111;white-space:nowrap;line-height:16px">Strutture</div>
<div class="a" style="left:1161px;top:424px;width:16px;height:9px;background:#c4c4c4;border:1px solid #000"></div>
<svg class="a" style="left:0;top:0" width="1500" height="844">
<defs><g id="eye"><path d="M-0.3 5.8C2.2 -0.4 12.8 -0.4 15.3 5.8C12.8 12 2.2 12 -0.3 5.8Z" fill="currentColor"/><path d="M1.9 6C4.5 2.2 10.5 2.2 13.1 6C10.5 9.6 4.5 9.6 1.9 6Z" fill="#fff"/><circle cx="7.4" cy="5.4" r="2.7" fill="currentColor"/><circle cx="6.6" cy="4.5" r="0.9" fill="#fff"/></g><g id="eyeh"><path d="M-0.3 5.8C2.2 -0.4 12.8 -0.4 15.3 5.8C12.8 12 2.2 12 -0.3 5.8Z" fill="#1e2c6a"/><path d="M1.9 6C4.5 2.2 10.5 2.2 13.1 6C10.5 9.6 4.5 9.6 1.9 6Z" fill="#2f55c8"/><circle cx="7.4" cy="5.4" r="2.7" fill="#1e2c6a"/></g><g id="pen"><path d="M0.5 13.5L1.8 9.8L10.8 0.8L13 3L4 12Z" fill="#e8a830" stroke="#8a5a18" stroke-width="0.8"/><path d="M9.8 1.8L12 4" stroke="#e03030" stroke-width="2.2"/><path d="M0.5 13.5L1.8 9.8L4 12Z" fill="#f0d8a8"/></g><g id="lock"><path d="M2.3 6.5V4A2.7 2.7 0 0 1 7.7 4V6.5" fill="none" stroke="currentColor" stroke-width="1.7"/><rect x="0.3" y="6" width="9.6" height="8" fill="currentColor"/></g></defs>
<use href="#eye" x="1161.7" y="161.8" style="color:#000"/>
<use href="#eye" x="1161.7" y="181.8" style="color:#000"/>
<use href="#eye" x="1161.7" y="201.8" style="color:#000"/>
<use href="#eye" x="1161.7" y="221.8" style="color:#000"/>
<use href="#eye" x="1161.7" y="241.8" style="color:#000"/>
<use href="#eye" x="1161.7" y="261.8" style="color:#2a3a55"/>
<use href="#pen" x="1184" y="160"/>
<use href="#eye" x="1166.3" y="137.2" style="color:#000"/>
<use href="#eye" x="1203.5" y="137.2" style="color:#a8a8a8" opacity="0.7"/>
<path d="M1242.8 142.6H1254.8M1248.8 136.6V148.6" stroke="#e00000" stroke-width="3.4"/>
<path d="M1279.6 142.6H1292" stroke="#e00000" stroke-width="3.2"/>
<text x="1323.6" y="147" text-anchor="middle" font-family="Liberation Sans" font-size="12.5" fill="#111">a b</text><path d="M1323.6 136V148" stroke="#111" stroke-width="0.9"/>
<use href="#pen" x="1354" y="136"/>
<rect x="1393.5" y="136" width="11" height="13" fill="#e4e8f4" stroke="#c0c8dc" stroke-width="0.6"/><path d="M1396 137.5H1399.5V144.5H1402L1398.8 148.5L1395.5 144.5H1398V139H1396Z" fill="#2858f0"/>
<rect x="1430.5" y="137.2" width="10.5" height="10.5" fill="#e87050" stroke="#c04020" stroke-width="0.8"/><path d="M1433 139.7L1438.5 145.2M1438.5 139.7L1433 145.2" stroke="#fff" stroke-width="1.6"/>
<use href="#eye" x="1177.6" y="338.2" style="color:#000"/>
<use href="#eye" x="1237.1" y="338.2" style="color:#a8a8a8" opacity="0.7"/>
<path d="M1298.6 343.6H1310.6M1304.6 337.6V349.6" stroke="#e00000" stroke-width="3.4"/>
<path d="M1358.7 343.6H1371.1" stroke="#e00000" stroke-width="3.2"/>
<use href="#pen" x="1418" y="336.5"/>
<use href="#eye" x="1415.5" y="362.5" style="color:#000"/>
<use href="#lock" x="1440" y="361" style="color:#b8b8b8"/>
<use href="#eye" x="1415.5" y="382.5" style="color:#000"/>
<use href="#lock" x="1440" y="381" style="color:#b8b8b8"/>
<use href="#eyeh" x="1415.5" y="402.5"/>
<use href="#lock" x="1440" y="401" style="color:#b4c0d4"/>
<use href="#eye" x="1415.5" y="422.5" style="color:#000"/>
<use href="#lock" x="1440" y="421" style="color:#b8b8b8"/>
<use href="#pen" x="1394.5" y="400.5" opacity="0.85"/>
<circle cx="1164" cy="118" r="7" fill="#6e6e6e"/><path d="M1161 115L1167 121M1167 115L1161 121" stroke="#fff" stroke-width="1.8"/>
<circle cx="1182" cy="118" r="7" fill="#6e6e6e"/><rect x="1180" y="114" width="5" height="4" fill="none" stroke="#fff" stroke-width="1"/><rect x="1178.5" y="116.5" width="5" height="4.5" fill="#6e6e6e" stroke="#fff" stroke-width="1"/>
<circle cx="1164" cy="319" r="7" fill="#6e6e6e"/><path d="M1161 316L1167 322M1167 316L1161 322" stroke="#fff" stroke-width="1.8"/>
<circle cx="1182" cy="319" r="7" fill="#6e6e6e"/><rect x="1180" y="315" width="5" height="4" fill="none" stroke="#fff" stroke-width="1"/><rect x="1178.5" y="317.5" width="5" height="4.5" fill="#6e6e6e" stroke="#fff" stroke-width="1"/>
<defs><radialGradient id="ring" cx="0.5" cy="0.5" r="0.5"><stop offset="0.6" stop-color="#ffffff" stop-opacity="0.12"/><stop offset="0.8" stop-color="#ffffff" stop-opacity="0.55"/><stop offset="0.86" stop-color="#dfe7ee" stop-opacity="0.85"/><stop offset="0.9" stop-color="#b6c7d6" stop-opacity="1"/><stop offset="0.95" stop-color="#a3b7c9" stop-opacity="1"/><stop offset="0.985" stop-color="#b6c6d4" stop-opacity="0.8"/><stop offset="1" stop-color="#c0ccd8" stop-opacity="0.2"/></radialGradient></defs>
<circle cx="1303" cy="264.2" r="38.6" fill="url(#ring)"/>
<path d="M1303 264.8V286.6L1308.8 281.2L1314.2 291.6L1317.6 289.8L1312.6 280.6H1318.2Z" fill="#fff" stroke="#000" stroke-width="1.6" stroke-linejoin="miter"/>
</svg>
<svg class="a" style="left:1455px;top:107px" width="45" height="691">
<rect x="43" y="0" width="2" height="691" fill="#b0b0b0" opacity="0.6"/>
<rect x="10.0" y="8.5" width="2" height="2" fill="#a8a8a8"/>
<rect x="16.5" y="8.5" width="2" height="2" fill="#a8a8a8"/>
<rect x="23.0" y="8.5" width="2" height="2" fill="#a8a8a8"/>
<rect x="29.5" y="8.5" width="2" height="2" fill="#a8a8a8"/>
<rect x="36.0" y="8.5" width="2" height="2" fill="#a8a8a8"/>
<rect x="1" y="13.4" width="43" height="41.9" rx="6" fill="#b8b8b8"/>
<rect x="1" y="60.8" width="43" height="41.5" rx="6" fill="#b8b8b8"/>
<rect x="1" y="311" width="43" height="42.19999999999999" rx="6" fill="#b8b8b8"/>
<g transform="translate(8 19.8)"><rect x="0.5" y="0.5" width="27" height="27" fill="#fff" stroke="#222" stroke-width="1"/><rect x="0.5" y="0.5" width="27" height="4.5" fill="#000"/><rect x="2" y="2" width="3" height="2.5" fill="#fff"/><path d="M8 10L14 7V20L8 23Z" fill="#999" stroke="#555" stroke-width="0.6"/><path d="M11 9L19 6V19L11 22Z" fill="#fff" stroke="#666" stroke-width="0.7"/><path d="M13 18L16 10L17 18Z" fill="none" stroke="#e03030" stroke-width="0.8"/></g>
<g transform="translate(8 67.2)"><rect x="0.5" y="0.5" width="27" height="27" fill="#fff" stroke="#222" stroke-width="1"/><rect x="0.5" y="0.5" width="27" height="4.5" fill="#000"/><rect x="2" y="2" width="3" height="2.5" fill="#fff"/><rect x="5" y="9" width="11" height="8" fill="#f2eedc" stroke="#8a8a7a" stroke-width="0.8"/><circle cx="15" cy="17" r="4.6" fill="#f2eedc" fill-opacity="0.85" stroke="#8a8a7a" stroke-width="0.8"/></g>
<g transform="translate(8 114)"><rect x="0.5" y="0.5" width="27" height="27" fill="#fff" stroke="#222" stroke-width="1"/><rect x="0.5" y="0.5" width="27" height="4.5" fill="#000"/><rect x="2" y="2" width="3" height="2.5" fill="#fff"/><rect x="5" y="10" width="18" height="12" rx="2.5" fill="#f0f2f8" stroke="#bcc8e0" stroke-width="0.8"/></g>
<line x1="0" y1="155.5" x2="45" y2="155.5" stroke="#7a7a7a" stroke-dasharray="1 2"/>
<g transform="translate(8 170)"><rect x="0.5" y="0.5" width="27" height="27" fill="#fff" stroke="#222" stroke-width="1"/><rect x="0.5" y="0.5" width="27" height="4.5" fill="#000"/><rect x="2" y="2" width="3" height="2.5" fill="#fff"/><rect x="4" y="8" width="4" height="3" fill="#000"/><rect x="4" y="14" width="4" height="3" fill="#000"/><rect x="4" y="20" width="4" height="3" fill="#000"/><rect x="10" y="8" width="14" height="3" fill="#fff" stroke="#333" stroke-width="0.6"/><rect x="10" y="14" width="14" height="3" fill="#fff" stroke="#333" stroke-width="0.6"/><rect x="10" y="20" width="14" height="3" fill="#fff" stroke="#333" stroke-width="0.6"/></g>
<g transform="translate(8 216)"><rect x="0.5" y="0.5" width="27" height="27" fill="#fff" stroke="#222" stroke-width="1"/><rect x="0.5" y="0.5" width="27" height="4.5" fill="#000"/><rect x="2" y="2" width="3" height="2.5" fill="#fff"/><path d="M6 10H22L15.5 16V23L12.5 21V16Z" fill="#ddd" stroke="#444" stroke-width="0.8"/><ellipse cx="14" cy="10" rx="8" ry="1.6" fill="#eee" stroke="#444" stroke-width="0.7"/></g>
<g transform="translate(8 262)"><rect x="0.5" y="0.5" width="27" height="27" fill="#fff" stroke="#222" stroke-width="1"/><rect x="0.5" y="0.5" width="27" height="4.5" fill="#000"/><rect x="2" y="2" width="3" height="2.5" fill="#fff"/><path d="M6 9V22L12 18V13Z" fill="#fff" stroke="#333" stroke-width="0.8"/><rect x="12" y="12" width="10" height="7" fill="#999" stroke="#555" stroke-width="0.6"/><path d="M3 15.5H25" stroke="#e06060" stroke-width="0.6" stroke-dasharray="1.5 1"/></g>
<line x1="0" y1="303.5" x2="45" y2="303.5" stroke="#7a7a7a" stroke-dasharray="1 2"/>
<g transform="translate(8 317.7)"><rect x="0.5" y="0.5" width="27" height="27" fill="#fff" stroke="#222" stroke-width="1"/><rect x="0.5" y="0.5" width="27" height="4.5" fill="#000"/><rect x="2" y="2" width="3" height="2.5" fill="#fff"/><path d="M4 9H18M4 12H17M4 15H18M4 18H17" stroke="#999" stroke-width="0.7"/><path d="M2 23H26V27H2Z" fill="#fff" stroke="#444" stroke-width="0.6"/><path d="M5 25H20" stroke="#777" stroke-width="0.7"/></g>
<g transform="translate(8 365)"><rect x="0.5" y="0.5" width="27" height="27" fill="#fff" stroke="#222" stroke-width="1"/><rect x="0.5" y="0.5" width="27" height="4.5" fill="#000"/><rect x="2" y="2" width="3" height="2.5" fill="#fff"/><rect x="7.5" y="8" width="13" height="16" rx="1" fill="#c98a1e" stroke="#8e5e10" stroke-width="0.7"/><rect x="9.5" y="10" width="9" height="12" fill="#f6f6f6"/><rect x="11" y="6.8" width="6" height="3" fill="#a0a090"/><path d="M11 13H17M11 15H17M11 17H16" stroke="#bbb" stroke-width="0.6"/></g>
</svg>
<div class="a" style="left:0;top:798px;width:1500px;height:1px;background:#cfcfcf"></div>
<div class="a" style="left:2px;top:807px;font-size:9.8px;color:#111;white-space:nowrap;line-height:12px;-webkit-text-stroke:0.08px #111">47.0937,12.7851</div>
<div class="a" style="left:2px;top:827px;font-size:9.8px;color:#111;white-space:nowrap;line-height:12px;-webkit-text-stroke:0.08px #111">@47.0937,12.7851</div>
<div class="a" style="left:253.5px;top:802px;width:1px;height:40px;background:#777"></div>
<div class="a" style="left:256px;top:807px;font-size:9.8px;letter-spacing:0.3px;color:#111;white-space:nowrap;line-height:12px;-webkit-text-stroke:0.08px #111">48.7984&lt;15°</div>
<div class="a" style="left:256px;top:827px;font-size:9.8px;letter-spacing:0.3px;color:#111;white-space:nowrap;line-height:12px;-webkit-text-stroke:0.08px #111">@48.7984&lt;15°</div>
<div class="a" style="left:506px;top:819px;width:6px;height:6px;border-radius:3px;background:#c8c8c8"></div>
<div class="a" style="left:571.5px;top:816.5px;font-size:10.1px;color:#111;white-space:nowrap;line-height:12px;-webkit-text-stroke:0.08px #111">Selezionare entità o regione</div>
<svg class="a" style="left:716px;top:805px" width="20" height="32"><rect x="1.2" y="1" width="17" height="29.5" rx="8.5" fill="#fff" stroke="#333" stroke-width="0.9"/><path d="M1.2 13H18.2M9.7 1V13" stroke="#333" stroke-width="0.9"/><rect x="8.2" y="3.5" width="3" height="7" rx="1.5" fill="#fff" stroke="#333" stroke-width="0.8"/></svg>
<div class="a" style="left:940px;top:818.5px;width:6px;height:6px;border-radius:3px;background:#c8c8c8"></div>
<div class="a" style="left:949px;top:817px;font-size:10.1px;color:#111;white-space:nowrap;line-height:12px;-webkit-text-stroke:0.08px #111">Nessun entità selezionate.</div>
<div class="a" style="left:1269px;top:818.5px;width:6px;height:6px;border-radius:3px;background:#c8c8c8"></div>
<svg class="a" style="left:0;top:0" width="1500" height="844" viewBox="0 0 1500 844">
<defs><clipPath id="cc"><rect x="95" y="155" width="1043" height="577"/></clipPath></defs>
<g clip-path="url(#cc)">
<path d="M194.5 155V732M316.5 155V732M439.5 155V732M562.5 155V732M685.5 155V732M807.5 155V732M930.5 155V732M1053.5 155V732M95 661.5H1138M95 538.5H1138M95 416.5H1138M95 293.5H1138M95 170.5H1138" stroke="#181818" stroke-width="1" fill="none"/>
<path d="M96 723h1v1h-1zM96 710h1v1h-1zM96 698h1v1h-1zM96 686h1v1h-1zM96 674h1v1h-1zM96 661h1v1h-1zM96 649h1v1h-1zM96 637h1v1h-1zM96 624h1v1h-1zM96 612h1v1h-1zM96 600h1v1h-1zM96 588h1v1h-1zM96 575h1v1h-1zM96 563h1v1h-1zM96 551h1v1h-1zM96 539h1v1h-1zM96 526h1v1h-1zM96 514h1v1h-1zM96 502h1v1h-1zM96 490h1v1h-1zM96 477h1v1h-1zM96 465h1v1h-1zM96 453h1v1h-1zM96 440h1v1h-1zM96 428h1v1h-1zM96 416h1v1h-1zM96 404h1v1h-1zM96 391h1v1h-1zM96 379h1v1h-1zM96 367h1v1h-1zM96 355h1v1h-1zM96 342h1v1h-1zM96 330h1v1h-1zM96 318h1v1h-1zM96 306h1v1h-1zM96 293h1v1h-1zM96 281h1v1h-1zM96 269h1v1h-1zM96 256h1v1h-1zM96 244h1v1h-1zM96 232h1v1h-1zM96 220h1v1h-1zM96 207h1v1h-1zM96 195h1v1h-1zM96 183h1v1h-1zM96 171h1v1h-1zM96 158h1v1h-1zM108 723h1v1h-1zM108 710h1v1h-1zM108 698h1v1h-1zM108 686h1v1h-1zM108 674h1v1h-1zM108 661h1v1h-1zM108 649h1v1h-1zM108 637h1v1h-1zM108 624h1v1h-1zM108 612h1v1h-1zM108 600h1v1h-1zM108 588h1v1h-1zM108 575h1v1h-1zM108 563h1v1h-1zM108 551h1v1h-1zM108 539h1v1h-1zM108 526h1v1h-1zM108 514h1v1h-1zM108 502h1v1h-1zM108 490h1v1h-1zM108 477h1v1h-1zM108 465h1v1h-1zM108 453h1v1h-1zM108 440h1v1h-1zM108 428h1v1h-1zM108 416h1v1h-1zM108 404h1v1h-1zM108 391h1v1h-1zM108 379h1v1h-1zM108 367h1v1h-1zM108 355h1v1h-1zM108 342h1v1h-1zM108 330h1v1h-1zM108 318h1v1h-1zM108 306h1v1h-1zM108 293h1v1h-1zM108 281h1v1h-1zM108 269h1v1h-1zM108 256h1v1h-1zM108 244h1v1h-1zM108 232h1v1h-1zM108 220h1v1h-1zM108 207h1v1h-1zM108 195h1v1h-1zM108 183h1v1h-1zM108 171h1v1h-1zM108 158h1v1h-1zM120 723h1v1h-1zM120 710h1v1h-1zM120 698h1v1h-1zM120 686h1v1h-1zM120 674h1v1h-1zM120 661h1v1h-1zM120 649h1v1h-1zM120 637h1v1h-1zM120 624h1v1h-1zM120 612h1v1h-1zM120 600h1v1h-1zM120 588h1v1h-1zM120 575h1v1h-1zM120 563h1v1h-1zM120 551h1v1h-1zM120 539h1v1h-1zM120 526h1v1h-1zM120 514h1v1h-1zM120 502h1v1h-1zM120 490h1v1h-1zM120 477h1v1h-1zM120 465h1v1h-1zM120 453h1v1h-1zM120 440h1v1h-1zM120 428h1v1h-1zM120 416h1v1h-1zM120 404h1v1h-1zM120 391h1v1h-1zM120 379h1v1h-1zM120 367h1v1h-1zM120 355h1v1h-1zM120 342h1v1h-1zM120 330h1v1h-1zM120 318h1v1h-1zM120 306h1v1h-1zM120 293h1v1h-1zM120 281h1v1h-1zM120 269h1v1h-1zM120 256h1v1h-1zM120 244h1v1h-1zM120 232h1v1h-1zM120 220h1v1h-1zM120 207h1v1h-1zM120 195h1v1h-1zM120 183h1v1h-1zM120 171h1v1h-1zM120 158h1v1h-1zM132 723h1v1h-1zM132 710h1v1h-1zM132 698h1v1h-1zM132 686h1v1h-1zM132 674h1v1h-1zM132 661h1v1h-1zM132 649h1v1h-1zM132 637h1v1h-1zM132 624h1v1h-1zM132 612h1v1h-1zM132 600h1v1h-1zM132 588h1v1h-1zM132 575h1v1h-1zM132 563h1v1h-1zM132 551h1v1h-1zM132 539h1v1h-1zM132 526h1v1h-1zM132 514h1v1h-1zM132 502h1v1h-1zM132 490h1v1h-1zM132 477h1v1h-1zM132 465h1v1h-1zM132 453h1v1h-1zM132 440h1v1h-1zM132 428h1v1h-1zM132 416h1v1h-1zM132 404h1v1h-1zM132 391h1v1h-1zM132 379h1v1h-1zM132 367h1v1h-1zM132 355h1v1h-1zM132 342h1v1h-1zM132 330h1v1h-1zM132 318h1v1h-1zM132 306h1v1h-1zM132 293h1v1h-1zM132 281h1v1h-1zM132 269h1v1h-1zM132 256h1v1h-1zM132 244h1v1h-1zM132 232h1v1h-1zM132 220h1v1h-1zM132 207h1v1h-1zM132 195h1v1h-1zM132 183h1v1h-1zM132 171h1v1h-1zM132 158h1v1h-1zM145 723h1v1h-1zM145 710h1v1h-1zM145 698h1v1h-1zM145 686h1v1h-1zM145 674h1v1h-1zM145 661h1v1h-1zM145 649h1v1h-1zM145 637h1v1h-1zM145 624h1v1h-1zM145 612h1v1h-1zM145 600h1v1h-1zM145 588h1v1h-1zM145 575h1v1h-1zM145 563h1v1h-1zM145 551h1v1h-1zM145 539h1v1h-1zM145 526h1v1h-1zM145 514h1v1h-1zM145 502h1v1h-1zM145 490h1v1h-1zM145 477h1v1h-1zM145 465h1v1h-1zM145 453h1v1h-1zM145 440h1v1h-1zM145 428h1v1h-1zM145 416h1v1h-1zM145 404h1v1h-1zM145 391h1v1h-1zM145 379h1v1h-1zM145 367h1v1h-1zM145 355h1v1h-1zM145 342h1v1h-1zM145 330h1v1h-1zM145 318h1v1h-1zM145 306h1v1h-1zM145 293h1v1h-1zM145 281h1v1h-1zM145 269h1v1h-1zM145 256h1v1h-1zM145 244h1v1h-1zM145 232h1v1h-1zM145 220h1v1h-1zM145 207h1v1h-1zM145 195h1v1h-1zM145 183h1v1h-1zM145 171h1v1h-1zM145 158h1v1h-1zM157 723h1v1h-1zM157 710h1v1h-1zM157 698h1v1h-1zM157 686h1v1h-1zM157 674h1v1h-1zM157 661h1v1h-1zM157 649h1v1h-1zM157 637h1v1h-1zM157 624h1v1h-1zM157 612h1v1h-1zM157 600h1v1h-1zM157 588h1v1h-1zM157 575h1v1h-1zM157 563h1v1h-1zM157 551h1v1h-1zM157 539h1v1h-1zM157 526h1v1h-1zM157 514h1v1h-1zM157 502h1v1h-1zM157 490h1v1h-1zM157 477h1v1h-1zM157 465h1v1h-1zM157 453h1v1h-1zM157 440h1v1h-1zM157 428h1v1h-1zM157 416h1v1h-1zM157 404h1v1h-1zM157 391h1v1h-1zM157 379h1v1h-1zM157 367h1v1h-1zM157 355h1v1h-1zM157 342h1v1h-1zM157 330h1v1h-1zM157 318h1v1h-1zM157 306h1v1h-1zM157 293h1v1h-1zM157 281h1v1h-1zM157 269h1v1h-1zM157 256h1v1h-1zM157 244h1v1h-1zM157 232h1v1h-1zM157 220h1v1h-1zM157 207h1v1h-1zM157 195h1v1h-1zM157 183h1v1h-1zM157 171h1v1h-1zM157 158h1v1h-1zM169 723h1v1h-1zM169 710h1v1h-1zM169 698h1v1h-1zM169 686h1v1h-1zM169 674h1v1h-1zM169 661h1v1h-1zM169 649h1v1h-1zM169 637h1v1h-1zM169 624h1v1h-1zM169 612h1v1h-1zM169 600h1v1h-1zM169 588h1v1h-1zM169 575h1v1h-1zM169 563h1v1h-1zM169 551h1v1h-1zM169 539h1v1h-1zM169 526h1v1h-1zM169 514h1v1h-1zM169 502h1v1h-1zM169 490h1v1h-1zM169 477h1v1h-1zM169 465h1v1h-1zM169 453h1v1h-1zM169 440h1v1h-1zM169 428h1v1h-1zM169 416h1v1h-1zM169 404h1v1h-1zM169 391h1v1h-1zM169 379h1v1h-1zM169 367h1v1h-1zM169 355h1v1h-1zM169 342h1v1h-1zM169 330h1v1h-1zM169 318h1v1h-1zM169 306h1v1h-1zM169 293h1v1h-1zM169 281h1v1h-1zM169 269h1v1h-1zM169 256h1v1h-1zM169 244h1v1h-1zM169 232h1v1h-1zM169 220h1v1h-1zM169 207h1v1h-1zM169 195h1v1h-1zM169 183h1v1h-1zM169 171h1v1h-1zM169 158h1v1h-1zM182 723h1v1h-1zM182 710h1v1h-1zM182 698h1v1h-1zM182 686h1v1h-1zM182 674h1v1h-1zM182 661h1v1h-1zM182 649h1v1h-1zM182 637h1v1h-1zM182 624h1v1h-1zM182 612h1v1h-1zM182 600h1v1h-1zM182 588h1v1h-1zM182 575h1v1h-1zM182 563h1v1h-1zM182 551h1v1h-1zM182 539h1v1h-1zM182 526h1v1h-1zM182 514h1v1h-1zM182 502h1v1h-1zM182 490h1v1h-1zM182 477h1v1h-1zM182 465h1v1h-1zM182 453h1v1h-1zM182 440h1v1h-1zM182 428h1v1h-1zM182 416h1v1h-1zM182 404h1v1h-1zM182 391h1v1h-1zM182 379h1v1h-1zM182 367h1v1h-1zM182 355h1v1h-1zM182 342h1v1h-1zM182 330h1v1h-1zM182 318h1v1h-1zM182 306h1v1h-1zM182 293h1v1h-1zM182 281h1v1h-1zM182 269h1v1h-1zM182 256h1v1h-1zM182 244h1v1h-1zM182 232h1v1h-1zM182 220h1v1h-1zM182 207h1v1h-1zM182 195h1v1h-1zM182 183h1v1h-1zM182 171h1v1h-1zM182 158h1v1h-1zM194 723h1v1h-1zM194 710h1v1h-1zM194 698h1v1h-1zM194 686h1v1h-1zM194 674h1v1h-1zM194 661h1v1h-1zM194 649h1v1h-1zM194 637h1v1h-1zM194 624h1v1h-1zM194 612h1v1h-1zM194 600h1v1h-1zM194 588h1v1h-1zM194 575h1v1h-1zM194 563h1v1h-1zM194 551h1v1h-1zM194 539h1v1h-1zM194 526h1v1h-1zM194 514h1v1h-1zM194 502h1v1h-1zM194 490h1v1h-1zM194 477h1v1h-1zM194 465h1v1h-1zM194 453h1v1h-1zM194 440h1v1h-1zM194 428h1v1h-1zM194 416h1v1h-1zM194 404h1v1h-1zM194 391h1v1h-1zM194 379h1v1h-1zM194 367h1v1h-1zM194 355h1v1h-1zM194 342h1v1h-1zM194 330h1v1h-1zM194 318h1v1h-1zM194 306h1v1h-1zM194 293h1v1h-1zM194 281h1v1h-1zM194 269h1v1h-1zM194 256h1v1h-1zM194 244h1v1h-1zM194 232h1v1h-1zM194 220h1v1h-1zM194 207h1v1h-1zM194 195h1v1h-1zM194 183h1v1h-1zM194 171h1v1h-1zM194 158h1v1h-1zM206 723h1v1h-1zM206 710h1v1h-1zM206 698h1v1h-1zM206 686h1v1h-1zM206 674h1v1h-1zM206 661h1v1h-1zM206 649h1v1h-1zM206 637h1v1h-1zM206 624h1v1h-1zM206 612h1v1h-1zM206 600h1v1h-1zM206 588h1v1h-1zM206 575h1v1h-1zM206 563h1v1h-1zM206 551h1v1h-1zM206 539h1v1h-1zM206 526h1v1h-1zM206 514h1v1h-1zM206 502h1v1h-1zM206 490h1v1h-1zM206 477h1v1h-1zM206 465h1v1h-1zM206 453h1v1h-1zM206 440h1v1h-1zM206 428h1v1h-1zM206 416h1v1h-1zM206 404h1v1h-1zM206 391h1v1h-1zM206 379h1v1h-1zM206 367h1v1h-1zM206 355h1v1h-1zM206 342h1v1h-1zM206 330h1v1h-1zM206 318h1v1h-1zM206 306h1v1h-1zM206 293h1v1h-1zM206 281h1v1h-1zM206 269h1v1h-1zM206 256h1v1h-1zM206 244h1v1h-1zM206 232h1v1h-1zM206 220h1v1h-1zM206 207h1v1h-1zM206 195h1v1h-1zM206 183h1v1h-1zM206 171h1v1h-1zM206 158h1v1h-1zM218 723h1v1h-1zM218 710h1v1h-1zM218 698h1v1h-1zM218 686h1v1h-1zM218 674h1v1h-1zM218 661h1v1h-1zM218 649h1v1h-1zM218 637h1v1h-1zM218 624h1v1h-1zM218 612h1v1h-1zM218 600h1v1h-1zM218 588h1v1h-1zM218 575h1v1h-1zM218 563h1v1h-1zM218 551h1v1h-1zM218 539h1v1h-1zM218 526h1v1h-1zM218 514h1v1h-1zM218 502h1v1h-1zM218 490h1v1h-1zM218 477h1v1h-1zM218 465h1v1h-1zM218 453h1v1h-1zM218 440h1v1h-1zM218 428h1v1h-1zM218 416h1v1h-1zM218 404h1v1h-1zM218 391h1v1h-1zM218 379h1v1h-1zM218 367h1v1h-1zM218 355h1v1h-1zM218 342h1v1h-1zM218 330h1v1h-1zM218 318h1v1h-1zM218 306h1v1h-1zM218 293h1v1h-1zM218 281h1v1h-1zM218 269h1v1h-1zM218 256h1v1h-1zM218 244h1v1h-1zM218 232h1v1h-1zM218 220h1v1h-1zM218 207h1v1h-1zM218 195h1v1h-1zM218 183h1v1h-1zM218 171h1v1h-1zM218 158h1v1h-1zM231 723h1v1h-1zM231 710h1v1h-1zM231 698h1v1h-1zM231 686h1v1h-1zM231 674h1v1h-1zM231 661h1v1h-1zM231 649h1v1h-1zM231 637h1v1h-1zM231 624h1v1h-1zM231 612h1v1h-1zM231 600h1v1h-1zM231 588h1v1h-1zM231 575h1v1h-1zM231 563h1v1h-1zM231 551h1v1h-1zM231 539h1v1h-1zM231 526h1v1h-1zM231 514h1v1h-1zM231 502h1v1h-1zM231 490h1v1h-1zM231 477h1v1h-1zM231 465h1v1h-1zM231 453h1v1h-1zM231 440h1v1h-1zM231 428h1v1h-1zM231 416h1v1h-1zM231 404h1v1h-1zM231 391h1v1h-1zM231 379h1v1h-1zM231 367h1v1h-1zM231 355h1v1h-1zM231 342h1v1h-1zM231 330h1v1h-1zM231 318h1v1h-1zM231 306h1v1h-1zM231 293h1v1h-1zM231 281h1v1h-1zM231 269h1v1h-1zM231 256h1v1h-1zM231 244h1v1h-1zM231 232h1v1h-1zM231 220h1v1h-1zM231 207h1v1h-1zM231 195h1v1h-1zM231 183h1v1h-1zM231 171h1v1h-1zM231 158h1v1h-1zM243 723h1v1h-1zM243 710h1v1h-1zM243 698h1v1h-1zM243 686h1v1h-1zM243 674h1v1h-1zM243 661h1v1h-1zM243 649h1v1h-1zM243 637h1v1h-1zM243 624h1v1h-1zM243 612h1v1h-1zM243 600h1v1h-1zM243 588h1v1h-1zM243 575h1v1h-1zM243 563h1v1h-1zM243 551h1v1h-1zM243 539h1v1h-1zM243 526h1v1h-1zM243 514h1v1h-1zM243 502h1v1h-1zM243 490h1v1h-1zM243 477h1v1h-1zM243 465h1v1h-1zM243 453h1v1h-1zM243 440h1v1h-1zM243 428h1v1h-1zM243 416h1v1h-1zM243 404h1v1h-1zM243 391h1v1h-1zM243 379h1v1h-1zM243 367h1v1h-1zM243 355h1v1h-1zM243 342h1v1h-1zM243 330h1v1h-1zM243 318h1v1h-1zM243 306h1v1h-1zM243 293h1v1h-1zM243 281h1v1h-1zM243 269h1v1h-1zM243 256h1v1h-1zM243 244h1v1h-1zM243 232h1v1h-1zM243 220h1v1h-1zM243 207h1v1h-1zM243 195h1v1h-1zM243 183h1v1h-1zM243 171h1v1h-1zM243 158h1v1h-1zM255 723h1v1h-1zM255 710h1v1h-1zM255 698h1v1h-1zM255 686h1v1h-1zM255 674h1v1h-1zM255 661h1v1h-1zM255 649h1v1h-1zM255 637h1v1h-1zM255 624h1v1h-1zM255 612h1v1h-1zM255 600h1v1h-1zM255 588h1v1h-1zM255 575h1v1h-1zM255 563h1v1h-1zM255 551h1v1h-1zM255 539h1v1h-1zM255 526h1v1h-1zM255 514h1v1h-1zM255 502h1v1h-1zM255 490h1v1h-1zM255 477h1v1h-1zM255 465h1v1h-1zM255 453h1v1h-1zM255 440h1v1h-1zM255 428h1v1h-1zM255 416h1v1h-1zM255 404h1v1h-1zM255 391h1v1h-1zM255 379h1v1h-1zM255 367h1v1h-1zM255 355h1v1h-1zM255 342h1v1h-1zM255 330h1v1h-1zM255 318h1v1h-1zM255 306h1v1h-1zM255 293h1v1h-1zM255 281h1v1h-1zM255 269h1v1h-1zM255 256h1v1h-1zM255 244h1v1h-1zM255 232h1v1h-1zM255 220h1v1h-1zM255 207h1v1h-1zM255 195h1v1h-1zM255 183h1v1h-1zM255 171h1v1h-1zM255 158h1v1h-1zM267 723h1v1h-1zM267 710h1v1h-1zM267 698h1v1h-1zM267 686h1v1h-1zM267 674h1v1h-1zM267 661h1v1h-1zM267 649h1v1h-1zM267 637h1v1h-1zM267 624h1v1h-1zM267 612h1v1h-1zM267 600h1v1h-1zM267 588h1v1h-1zM267 575h1v1h-1zM267 563h1v1h-1zM267 551h1v1h-1zM267 539h1v1h-1zM267 526h1v1h-1zM267 514h1v1h-1zM267 502h1v1h-1zM267 490h1v1h-1zM267 477h1v1h-1zM267 465h1v1h-1zM267 453h1v1h-1zM267 440h1v1h-1zM267 428h1v1h-1zM267 416h1v1h-1zM267 404h1v1h-1zM267 391h1v1h-1zM267 379h1v1h-1zM267 367h1v1h-1zM267 355h1v1h-1zM267 342h1v1h-1zM267 330h1v1h-1zM267 318h1v1h-1zM267 306h1v1h-1zM267 293h1v1h-1zM267 281h1v1h-1zM267 269h1v1h-1zM267 256h1v1h-1zM267 244h1v1h-1zM267 232h1v1h-1zM267 220h1v1h-1zM267 207h1v1h-1zM267 195h1v1h-1zM267 183h1v1h-1zM267 171h1v1h-1zM267 158h1v1h-1zM280 723h1v1h-1zM280 710h1v1h-1zM280 698h1v1h-1zM280 686h1v1h-1zM280 674h1v1h-1zM280 661h1v1h-1zM280 649h1v1h-1zM280 637h1v1h-1zM280 624h1v1h-1zM280 612h1v1h-1zM280 600h1v1h-1zM280 588h1v1h-1zM280 575h1v1h-1zM280 563h1v1h-1zM280 551h1v1h-1zM280 539h1v1h-1zM280 526h1v1h-1zM280 514h1v1h-1zM280 502h1v1h-1zM280 490h1v1h-1zM280 477h1v1h-1zM280 465h1v1h-1zM280 453h1v1h-1zM280 440h1v1h-1zM280 428h1v1h-1zM280 416h1v1h-1zM280 404h1v1h-1zM280 391h1v1h-1zM280 379h1v1h-1zM280 367h1v1h-1zM280 355h1v1h-1zM280 342h1v1h-1zM280 330h1v1h-1zM280 318h1v1h-1zM280 306h1v1h-1zM280 293h1v1h-1zM280 281h1v1h-1zM280 269h1v1h-1zM280 256h1v1h-1zM280 244h1v1h-1zM280 232h1v1h-1zM280 220h1v1h-1zM280 207h1v1h-1zM280 195h1v1h-1zM280 183h1v1h-1zM280 171h1v1h-1zM280 158h1v1h-1zM292 723h1v1h-1zM292 710h1v1h-1zM292 698h1v1h-1zM292 686h1v1h-1zM292 674h1v1h-1zM292 661h1v1h-1zM292 649h1v1h-1zM292 637h1v1h-1zM292 624h1v1h-1zM292 612h1v1h-1zM292 600h1v1h-1zM292 588h1v1h-1zM292 575h1v1h-1zM292 563h1v1h-1zM292 551h1v1h-1zM292 539h1v1h-1zM292 526h1v1h-1zM292 514h1v1h-1zM292 502h1v1h-1zM292 490h1v1h-1zM292 477h1v1h-1zM292 465h1v1h-1zM292 453h1v1h-1zM292 440h1v1h-1zM292 428h1v1h-1zM292 416h1v1h-1zM292 404h1v1h-1zM292 391h1v1h-1zM292 379h1v1h-1zM292 367h1v1h-1zM292 355h1v1h-1zM292 342h1v1h-1zM292 330h1v1h-1zM292 318h1v1h-1zM292 306h1v1h-1zM292 293h1v1h-1zM292 281h1v1h-1zM292 269h1v1h-1zM292 256h1v1h-1zM292 244h1v1h-1zM292 232h1v1h-1zM292 220h1v1h-1zM292 207h1v1h-1zM292 195h1v1h-1zM292 183h1v1h-1zM292 171h1v1h-1zM292 158h1v1h-1zM304 723h1v1h-1zM304 710h1v1h-1zM304 698h1v1h-1zM304 686h1v1h-1zM304 674h1v1h-1zM304 661h1v1h-1zM304 649h1v1h-1zM304 637h1v1h-1zM304 624h1v1h-1zM304 612h1v1h-1zM304 600h1v1h-1zM304 588h1v1h-1zM304 575h1v1h-1zM304 563h1v1h-1zM304 551h1v1h-1zM304 539h1v1h-1zM304 526h1v1h-1zM304 514h1v1h-1zM304 502h1v1h-1zM304 490h1v1h-1zM304 477h1v1h-1zM304 465h1v1h-1zM304 453h1v1h-1zM304 440h1v1h-1zM304 428h1v1h-1zM304 416h1v1h-1zM304 404h1v1h-1zM304 391h1v1h-1zM304 379h1v1h-1zM304 367h1v1h-1zM304 355h1v1h-1zM304 342h1v1h-1zM304 330h1v1h-1zM304 318h1v1h-1zM304 306h1v1h-1zM304 293h1v1h-1zM304 281h1v1h-1zM304 269h1v1h-1zM304 256h1v1h-1zM304 244h1v1h-1zM304 232h1v1h-1zM304 220h1v1h-1zM304 207h1v1h-1zM304 195h1v1h-1zM304 183h1v1h-1zM304 171h1v1h-1zM304 158h1v1h-1zM316 723h1v1h-1zM316 710h1v1h-1zM316 698h1v1h-1zM316 686h1v1h-1zM316 674h1v1h-1zM316 661h1v1h-1zM316 649h1v1h-1zM316 637h1v1h-1zM316 624h1v1h-1zM316 612h1v1h-1zM316 600h1v1h-1zM316 588h1v1h-1zM316 575h1v1h-1zM316 563h1v1h-1zM316 551h1v1h-1zM316 539h1v1h-1zM316 526h1v1h-1zM316 514h1v1h-1zM316 502h1v1h-1zM316 490h1v1h-1zM316 477h1v1h-1zM316 465h1v1h-1zM316 453h1v1h-1zM316 440h1v1h-1zM316 428h1v1h-1zM316 416h1v1h-1zM316 404h1v1h-1zM316 391h1v1h-1zM316 379h1v1h-1zM316 367h1v1h-1zM316 355h1v1h-1zM316 342h1v1h-1zM316 330h1v1h-1zM316 318h1v1h-1zM316 306h1v1h-1zM316 293h1v1h-1zM316 281h1v1h-1zM316 269h1v1h-1zM316 256h1v1h-1zM316 244h1v1h-1zM316 232h1v1h-1zM316 220h1v1h-1zM316 207h1v1h-1zM316 195h1v1h-1zM316 183h1v1h-1zM316 171h1v1h-1zM316 158h1v1h-1zM329 723h1v1h-1zM329 710h1v1h-1zM329 698h1v1h-1zM329 686h1v1h-1zM329 674h1v1h-1zM329 661h1v1h-1zM329 649h1v1h-1zM329 637h1v1h-1zM329 624h1v1h-1zM329 612h1v1h-1zM329 600h1v1h-1zM329 588h1v1h-1zM329 575h1v1h-1zM329 563h1v1h-1zM329 551h1v1h-1zM329 539h1v1h-1zM329 526h1v1h-1zM329 514h1v1h-1zM329 502h1v1h-1zM329 490h1v1h-1zM329 477h1v1h-1zM329 465h1v1h-1zM329 453h1v1h-1zM329 440h1v1h-1zM329 428h1v1h-1zM329 416h1v1h-1zM329 404h1v1h-1zM329 391h1v1h-1zM329 379h1v1h-1zM329 367h1v1h-1zM329 355h1v1h-1zM329 342h1v1h-1zM329 330h1v1h-1zM329 318h1v1h-1zM329 306h1v1h-1zM329 293h1v1h-1zM329 281h1v1h-1zM329 269h1v1h-1zM329 256h1v1h-1zM329 244h1v1h-1zM329 232h1v1h-1zM329 220h1v1h-1zM329 207h1v1h-1zM329 195h1v1h-1zM329 183h1v1h-1zM329 171h1v1h-1zM329 158h1v1h-1zM341 723h1v1h-1zM341 710h1v1h-1zM341 698h1v1h-1zM341 686h1v1h-1zM341 674h1v1h-1zM341 661h1v1h-1zM341 649h1v1h-1zM341 637h1v1h-1zM341 624h1v1h-1zM341 612h1v1h-1zM341 600h1v1h-1zM341 588h1v1h-1zM341 575h1v1h-1zM341 563h1v1h-1zM341 551h1v1h-1zM341 539h1v1h-1zM341 526h1v1h-1zM341 514h1v1h-1zM341 502h1v1h-1zM341 490h1v1h-1zM341 477h1v1h-1zM341 465h1v1h-1zM341 453h1v1h-1zM341 440h1v1h-1zM341 428h1v1h-1zM341 416h1v1h-1zM341 404h1v1h-1zM341 391h1v1h-1zM341 379h1v1h-1zM341 367h1v1h-1zM341 355h1v1h-1zM341 342h1v1h-1zM341 330h1v1h-1zM341 318h1v1h-1zM341 306h1v1h-1zM341 293h1v1h-1zM341 281h1v1h-1zM341 269h1v1h-1zM341 256h1v1h-1zM341 244h1v1h-1zM341 232h1v1h-1zM341 220h1v1h-1zM341 207h1v1h-1zM341 195h1v1h-1zM341 183h1v1h-1zM341 171h1v1h-1zM341 158h1v1h-1zM353 723h1v1h-1zM353 710h1v1h-1zM353 698h1v1h-1zM353 686h1v1h-1zM353 674h1v1h-1zM353 661h1v1h-1zM353 649h1v1h-1zM353 637h1v1h-1zM353 624h1v1h-1zM353 612h1v1h-1zM353 600h1v1h-1zM353 588h1v1h-1zM353 575h1v1h-1zM353 563h1v1h-1zM353 551h1v1h-1zM353 539h1v1h-1zM353 526h1v1h-1zM353 514h1v1h-1zM353 502h1v1h-1zM353 490h1v1h-1zM353 477h1v1h-1zM353 465h1v1h-1zM353 453h1v1h-1zM353 440h1v1h-1zM353 428h1v1h-1zM353 416h1v1h-1zM353 404h1v1h-1zM353 391h1v1h-1zM353 379h1v1h-1zM353 367h1v1h-1zM353 355h1v1h-1zM353 342h1v1h-1zM353 330h1v1h-1zM353 318h1v1h-1zM353 306h1v1h-1zM353 293h1v1h-1zM353 281h1v1h-1zM353 269h1v1h-1zM353 256h1v1h-1zM353 244h1v1h-1zM353 232h1v1h-1zM353 220h1v1h-1zM353 207h1v1h-1zM353 195h1v1h-1zM353 183h1v1h-1zM353 171h1v1h-1zM353 158h1v1h-1zM366 723h1v1h-1zM366 710h1v1h-1zM366 698h1v1h-1zM366 686h1v1h-1zM366 674h1v1h-1zM366 661h1v1h-1zM366 649h1v1h-1zM366 637h1v1h-1zM366 624h1v1h-1zM366 612h1v1h-1zM366 600h1v1h-1zM366 588h1v1h-1zM366 575h1v1h-1zM366 563h1v1h-1zM366 551h1v1h-1zM366 539h1v1h-1zM366 526h1v1h-1zM366 514h1v1h-1zM366 502h1v1h-1zM366 490h1v1h-1zM366 477h1v1h-1zM366 465h1v1h-1zM366 453h1v1h-1zM366 440h1v1h-1zM366 428h1v1h-1zM366 416h1v1h-1zM366 404h1v1h-1zM366 391h1v1h-1zM366 379h1v1h-1zM366 367h1v1h-1zM366 355h1v1h-1zM366 342h1v1h-1zM366 330h1v1h-1zM366 318h1v1h-1zM366 306h1v1h-1zM366 293h1v1h-1zM366 281h1v1h-1zM366 269h1v1h-1zM366 256h1v1h-1zM366 244h1v1h-1zM366 232h1v1h-1zM366 220h1v1h-1zM366 207h1v1h-1zM366 195h1v1h-1zM366 183h1v1h-1zM366 171h1v1h-1zM366 158h1v1h-1zM378 723h1v1h-1zM378 710h1v1h-1zM378 698h1v1h-1zM378 686h1v1h-1zM378 674h1v1h-1zM378 661h1v1h-1zM378 649h1v1h-1zM378 637h1v1h-1zM378 624h1v1h-1zM378 612h1v1h-1zM378 600h1v1h-1zM378 588h1v1h-1zM378 575h1v1h-1zM378 563h1v1h-1zM378 551h1v1h-1zM378 539h1v1h-1zM378 526h1v1h-1zM378 514h1v1h-1zM378 502h1v1h-1zM378 490h1v1h-1zM378 477h1v1h-1zM378 465h1v1h-1zM378 453h1v1h-1zM378 440h1v1h-1zM378 428h1v1h-1zM378 416h1v1h-1zM378 404h1v1h-1zM378 391h1v1h-1zM378 379h1v1h-1zM378 367h1v1h-1zM378 355h1v1h-1zM378 342h1v1h-1zM378 330h1v1h-1zM378 318h1v1h-1zM378 306h1v1h-1zM378 293h1v1h-1zM378 281h1v1h-1zM378 269h1v1h-1zM378 256h1v1h-1zM378 244h1v1h-1zM378 232h1v1h-1zM378 220h1v1h-1zM378 207h1v1h-1zM378 195h1v1h-1zM378 183h1v1h-1zM378 171h1v1h-1zM378 158h1v1h-1zM390 723h1v1h-1zM390 710h1v1h-1zM390 698h1v1h-1zM390 686h1v1h-1zM390 674h1v1h-1zM390 661h1v1h-1zM390 649h1v1h-1zM390 637h1v1h-1zM390 624h1v1h-1zM390 612h1v1h-1zM390 600h1v1h-1zM390 588h1v1h-1zM390 575h1v1h-1zM390 563h1v1h-1zM390 551h1v1h-1zM390 539h1v1h-1zM390 526h1v1h-1zM390 514h1v1h-1zM390 502h1v1h-1zM390 490h1v1h-1zM390 477h1v1h-1zM390 465h1v1h-1zM390 453h1v1h-1zM390 440h1v1h-1zM390 428h1v1h-1zM390 416h1v1h-1zM390 404h1v1h-1zM390 391h1v1h-1zM390 379h1v1h-1zM390 367h1v1h-1zM390 355h1v1h-1zM390 342h1v1h-1zM390 330h1v1h-1zM390 318h1v1h-1zM390 306h1v1h-1zM390 293h1v1h-1zM390 281h1v1h-1zM390 269h1v1h-1zM390 256h1v1h-1zM390 244h1v1h-1zM390 232h1v1h-1zM390 220h1v1h-1zM390 207h1v1h-1zM390 195h1v1h-1zM390 183h1v1h-1zM390 171h1v1h-1zM390 158h1v1h-1zM402 723h1v1h-1zM402 710h1v1h-1zM402 698h1v1h-1zM402 686h1v1h-1zM402 674h1v1h-1zM402 661h1v1h-1zM402 649h1v1h-1zM402 637h1v1h-1zM402 624h1v1h-1zM402 612h1v1h-1zM402 600h1v1h-1zM402 588h1v1h-1zM402 575h1v1h-1zM402 563h1v1h-1zM402 551h1v1h-1zM402 539h1v1h-1zM402 526h1v1h-1zM402 514h1v1h-1zM402 502h1v1h-1zM402 490h1v1h-1zM402 477h1v1h-1zM402 465h1v1h-1zM402 453h1v1h-1zM402 440h1v1h-1zM402 428h1v1h-1zM402 416h1v1h-1zM402 404h1v1h-1zM402 391h1v1h-1zM402 379h1v1h-1zM402 367h1v1h-1zM402 355h1v1h-1zM402 342h1v1h-1zM402 330h1v1h-1zM402 318h1v1h-1zM402 306h1v1h-1zM402 293h1v1h-1zM402 281h1v1h-1zM402 269h1v1h-1zM402 256h1v1h-1zM402 244h1v1h-1zM402 232h1v1h-1zM402 220h1v1h-1zM402 207h1v1h-1zM402 195h1v1h-1zM402 183h1v1h-1zM402 171h1v1h-1zM402 158h1v1h-1zM415 723h1v1h-1zM415 710h1v1h-1zM415 698h1v1h-1zM415 686h1v1h-1zM415 674h1v1h-1zM415 661h1v1h-1zM415 649h1v1h-1zM415 637h1v1h-1zM415 624h1v1h-1zM415 612h1v1h-1zM415 600h1v1h-1zM415 588h1v1h-1zM415 575h1v1h-1zM415 563h1v1h-1zM415 551h1v1h-1zM415 539h1v1h-1zM415 526h1v1h-1zM415 514h1v1h-1zM415 502h1v1h-1zM415 490h1v1h-1zM415 477h1v1h-1zM415 465h1v1h-1zM415 453h1v1h-1zM415 440h1v1h-1zM415 428h1v1h-1zM415 416h1v1h-1zM415 404h1v1h-1zM415 391h1v1h-1zM415 379h1v1h-1zM415 367h1v1h-1zM415 355h1v1h-1zM415 342h1v1h-1zM415 330h1v1h-1zM415 318h1v1h-1zM415 306h1v1h-1zM415 293h1v1h-1zM415 281h1v1h-1zM415 269h1v1h-1zM415 256h1v1h-1zM415 244h1v1h-1zM415 232h1v1h-1zM415 220h1v1h-1zM415 207h1v1h-1zM415 195h1v1h-1zM415 183h1v1h-1zM415 171h1v1h-1zM415 158h1v1h-1zM427 723h1v1h-1zM427 710h1v1h-1zM427 698h1v1h-1zM427 686h1v1h-1zM427 674h1v1h-1zM427 661h1v1h-1zM427 649h1v1h-1zM427 637h1v1h-1zM427 624h1v1h-1zM427 612h1v1h-1zM427 600h1v1h-1zM427 588h1v1h-1zM427 575h1v1h-1zM427 563h1v1h-1zM427 551h1v1h-1zM427 539h1v1h-1zM427 526h1v1h-1zM427 514h1v1h-1zM427 502h1v1h-1zM427 490h1v1h-1zM427 477h1v1h-1zM427 465h1v1h-1zM427 453h1v1h-1zM427 440h1v1h-1zM427 428h1v1h-1zM427 416h1v1h-1zM427 404h1v1h-1zM427 391h1v1h-1zM427 379h1v1h-1zM427 367h1v1h-1zM427 355h1v1h-1zM427 342h1v1h-1zM427 330h1v1h-1zM427 318h1v1h-1zM427 306h1v1h-1zM427 293h1v1h-1zM427 281h1v1h-1zM427 269h1v1h-1zM427 256h1v1h-1zM427 244h1v1h-1zM427 232h1v1h-1zM427 220h1v1h-1zM427 207h1v1h-1zM427 195h1v1h-1zM427 183h1v1h-1zM427 171h1v1h-1zM427 158h1v1h-1zM439 723h1v1h-1zM439 710h1v1h-1zM439 698h1v1h-1zM439 686h1v1h-1zM439 674h1v1h-1zM439 661h1v1h-1zM439 649h1v1h-1zM439 637h1v1h-1zM439 624h1v1h-1zM439 612h1v1h-1zM439 600h1v1h-1zM439 588h1v1h-1zM439 575h1v1h-1zM439 563h1v1h-1zM439 551h1v1h-1zM439 539h1v1h-1zM439 526h1v1h-1zM439 514h1v1h-1zM439 502h1v1h-1zM439 490h1v1h-1zM439 477h1v1h-1zM439 465h1v1h-1zM439 453h1v1h-1zM439 440h1v1h-1zM439 428h1v1h-1zM439 416h1v1h-1zM439 404h1v1h-1zM439 391h1v1h-1zM439 379h1v1h-1zM439 367h1v1h-1zM439 355h1v1h-1zM439 342h1v1h-1zM439 330h1v1h-1zM439 318h1v1h-1zM439 306h1v1h-1zM439 293h1v1h-1zM439 281h1v1h-1zM439 269h1v1h-1zM439 256h1v1h-1zM439 244h1v1h-1zM439 232h1v1h-1zM439 220h1v1h-1zM439 207h1v1h-1zM439 195h1v1h-1zM439 183h1v1h-1zM439 171h1v1h-1zM439 158h1v1h-1zM451 723h1v1h-1zM451 710h1v1h-1zM451 698h1v1h-1zM451 686h1v1h-1zM451 674h1v1h-1zM451 661h1v1h-1zM451 649h1v1h-1zM451 637h1v1h-1zM451 624h1v1h-1zM451 612h1v1h-1zM451 600h1v1h-1zM451 588h1v1h-1zM451 575h1v1h-1zM451 563h1v1h-1zM451 551h1v1h-1zM451 539h1v1h-1zM451 526h1v1h-1zM451 514h1v1h-1zM451 502h1v1h-1zM451 490h1v1h-1zM451 477h1v1h-1zM451 465h1v1h-1zM451 453h1v1h-1zM451 440h1v1h-1zM451 428h1v1h-1zM451 416h1v1h-1zM451 404h1v1h-1zM451 391h1v1h-1zM451 379h1v1h-1zM451 367h1v1h-1zM451 355h1v1h-1zM451 342h1v1h-1zM451 330h1v1h-1zM451 318h1v1h-1zM451 306h1v1h-1zM451 293h1v1h-1zM451 281h1v1h-1zM451 269h1v1h-1zM451 256h1v1h-1zM451 244h1v1h-1zM451 232h1v1h-1zM451 220h1v1h-1zM451 207h1v1h-1zM451 195h1v1h-1zM451 183h1v1h-1zM451 171h1v1h-1zM451 158h1v1h-1zM464 723h1v1h-1zM464 710h1v1h-1zM464 698h1v1h-1zM464 686h1v1h-1zM464 674h1v1h-1zM464 661h1v1h-1zM464 649h1v1h-1zM464 637h1v1h-1zM464 624h1v1h-1zM464 612h1v1h-1zM464 600h1v1h-1zM464 588h1v1h-1zM464 575h1v1h-1zM464 563h1v1h-1zM464 551h1v1h-1zM464 539h1v1h-1zM464 526h1v1h-1zM464 514h1v1h-1zM464 502h1v1h-1zM464 490h1v1h-1zM464 477h1v1h-1zM464 465h1v1h-1zM464 453h1v1h-1zM464 440h1v1h-1zM464 428h1v1h-1zM464 416h1v1h-1zM464 404h1v1h-1zM464 391h1v1h-1zM464 379h1v1h-1zM464 367h1v1h-1zM464 355h1v1h-1zM464 342h1v1h-1zM464 330h1v1h-1zM464 318h1v1h-1zM464 306h1v1h-1zM464 293h1v1h-1zM464 281h1v1h-1zM464 269h1v1h-1zM464 256h1v1h-1zM464 244h1v1h-1zM464 232h1v1h-1zM464 220h1v1h-1zM464 207h1v1h-1zM464 195h1v1h-1zM464 183h1v1h-1zM464 171h1v1h-1zM464 158h1v1h-1zM476 723h1v1h-1zM476 710h1v1h-1zM476 698h1v1h-1zM476 686h1v1h-1zM476 674h1v1h-1zM476 661h1v1h-1zM476 649h1v1h-1zM476 637h1v1h-1zM476 624h1v1h-1zM476 612h1v1h-1zM476 600h1v1h-1zM476 588h1v1h-1zM476 575h1v1h-1zM476 563h1v1h-1zM476 551h1v1h-1zM476 539h1v1h-1zM476 526h1v1h-1zM476 514h1v1h-1zM476 502h1v1h-1zM476 490h1v1h-1zM476 477h1v1h-1zM476 465h1v1h-1zM476 453h1v1h-1zM476 440h1v1h-1zM476 428h1v1h-1zM476 416h1v1h-1zM476 404h1v1h-1zM476 391h1v1h-1zM476 379h1v1h-1zM476 367h1v1h-1zM476 355h1v1h-1zM476 342h1v1h-1zM476 330h1v1h-1zM476 318h1v1h-1zM476 306h1v1h-1zM476 293h1v1h-1zM476 281h1v1h-1zM476 269h1v1h-1zM476 256h1v1h-1zM476 244h1v1h-1zM476 232h1v1h-1zM476 220h1v1h-1zM476 207h1v1h-1zM476 195h1v1h-1zM476 183h1v1h-1zM476 171h1v1h-1zM476 158h1v1h-1zM488 723h1v1h-1zM488 710h1v1h-1zM488 698h1v1h-1zM488 686h1v1h-1zM488 674h1v1h-1zM488 661h1v1h-1zM488 649h1v1h-1zM488 637h1v1h-1zM488 624h1v1h-1zM488 612h1v1h-1zM488 600h1v1h-1zM488 588h1v1h-1zM488 575h1v1h-1zM488 563h1v1h-1zM488 551h1v1h-1zM488 539h1v1h-1zM488 526h1v1h-1zM488 514h1v1h-1zM488 502h1v1h-1zM488 490h1v1h-1zM488 477h1v1h-1zM488 465h1v1h-1zM488 453h1v1h-1zM488 440h1v1h-1zM488 428h1v1h-1zM488 416h1v1h-1zM488 404h1v1h-1zM488 391h1v1h-1zM488 379h1v1h-1zM488 367h1v1h-1zM488 355h1v1h-1zM488 342h1v1h-1zM488 330h1v1h-1zM488 318h1v1h-1zM488 306h1v1h-1zM488 293h1v1h-1zM488 281h1v1h-1zM488 269h1v1h-1zM488 256h1v1h-1zM488 244h1v1h-1zM488 232h1v1h-1zM488 220h1v1h-1zM488 207h1v1h-1zM488 195h1v1h-1zM488 183h1v1h-1zM488 171h1v1h-1zM488 158h1v1h-1zM500 723h1v1h-1zM500 710h1v1h-1zM500 698h1v1h-1zM500 686h1v1h-1zM500 674h1v1h-1zM500 661h1v1h-1zM500 649h1v1h-1zM500 637h1v1h-1zM500 624h1v1h-1zM500 612h1v1h-1zM500 600h1v1h-1zM500 588h1v1h-1zM500 575h1v1h-1zM500 563h1v1h-1zM500 551h1v1h-1zM500 539h1v1h-1zM500 526h1v1h-1zM500 514h1v1h-1zM500 502h1v1h-1zM500 490h1v1h-1zM500 477h1v1h-1zM500 465h1v1h-1zM500 453h1v1h-1zM500 440h1v1h-1zM500 428h1v1h-1zM500 416h1v1h-1zM500 404h1v1h-1zM500 391h1v1h-1zM500 379h1v1h-1zM500 367h1v1h-1zM500 355h1v1h-1zM500 342h1v1h-1zM500 330h1v1h-1zM500 318h1v1h-1zM500 306h1v1h-1zM500 293h1v1h-1zM500 281h1v1h-1zM500 269h1v1h-1zM500 256h1v1h-1zM500 244h1v1h-1zM500 232h1v1h-1zM500 220h1v1h-1zM500 207h1v1h-1zM500 195h1v1h-1zM500 183h1v1h-1zM500 171h1v1h-1zM500 158h1v1h-1zM513 723h1v1h-1zM513 710h1v1h-1zM513 698h1v1h-1zM513 686h1v1h-1zM513 674h1v1h-1zM513 661h1v1h-1zM513 649h1v1h-1zM513 637h1v1h-1zM513 624h1v1h-1zM513 612h1v1h-1zM513 600h1v1h-1zM513 588h1v1h-1zM513 575h1v1h-1zM513 563h1v1h-1zM513 551h1v1h-1zM513 539h1v1h-1zM513 526h1v1h-1zM513 514h1v1h-1zM513 502h1v1h-1zM513 490h1v1h-1zM513 477h1v1h-1zM513 465h1v1h-1zM513 453h1v1h-1zM513 440h1v1h-1zM513 428h1v1h-1zM513 416h1v1h-1zM513 404h1v1h-1zM513 391h1v1h-1zM513 379h1v1h-1zM513 367h1v1h-1zM513 355h1v1h-1zM513 342h1v1h-1zM513 330h1v1h-1zM513 318h1v1h-1zM513 306h1v1h-1zM513 293h1v1h-1zM513 281h1v1h-1zM513 269h1v1h-1zM513 256h1v1h-1zM513 244h1v1h-1zM513 232h1v1h-1zM513 220h1v1h-1zM513 207h1v1h-1zM513 195h1v1h-1zM513 183h1v1h-1zM513 171h1v1h-1zM513 158h1v1h-1zM525 723h1v1h-1zM525 710h1v1h-1zM525 698h1v1h-1zM525 686h1v1h-1zM525 674h1v1h-1zM525 661h1v1h-1zM525 649h1v1h-1zM525 637h1v1h-1zM525 624h1v1h-1zM525 612h1v1h-1zM525 600h1v1h-1zM525 588h1v1h-1zM525 575h1v1h-1zM525 563h1v1h-1zM525 551h1v1h-1zM525 539h1v1h-1zM525 526h1v1h-1zM525 514h1v1h-1zM525 502h1v1h-1zM525 490h1v1h-1zM525 477h1v1h-1zM525 465h1v1h-1zM525 453h1v1h-1zM525 440h1v1h-1zM525 428h1v1h-1zM525 416h1v1h-1zM525 404h1v1h-1zM525 391h1v1h-1zM525 379h1v1h-1zM525 367h1v1h-1zM525 355h1v1h-1zM525 342h1v1h-1zM525 330h1v1h-1zM525 318h1v1h-1zM525 306h1v1h-1zM525 293h1v1h-1zM525 281h1v1h-1zM525 269h1v1h-1zM525 256h1v1h-1zM525 244h1v1h-1zM525 232h1v1h-1zM525 220h1v1h-1zM525 207h1v1h-1zM525 195h1v1h-1zM525 183h1v1h-1zM525 171h1v1h-1zM525 158h1v1h-1zM537 723h1v1h-1zM537 710h1v1h-1zM537 698h1v1h-1zM537 686h1v1h-1zM537 674h1v1h-1zM537 661h1v1h-1zM537 649h1v1h-1zM537 637h1v1h-1zM537 624h1v1h-1zM537 612h1v1h-1zM537 600h1v1h-1zM537 588h1v1h-1zM537 575h1v1h-1zM537 563h1v1h-1zM537 551h1v1h-1zM537 539h1v1h-1zM537 526h1v1h-1zM537 514h1v1h-1zM537 502h1v1h-1zM537 490h1v1h-1zM537 477h1v1h-1zM537 465h1v1h-1zM537 453h1v1h-1zM537 440h1v1h-1zM537 428h1v1h-1zM537 416h1v1h-1zM537 404h1v1h-1zM537 391h1v1h-1zM537 379h1v1h-1zM537 367h1v1h-1zM537 355h1v1h-1zM537 342h1v1h-1zM537 330h1v1h-1zM537 318h1v1h-1zM537 306h1v1h-1zM537 293h1v1h-1zM537 281h1v1h-1zM537 269h1v1h-1zM537 256h1v1h-1zM537 244h1v1h-1zM537 232h1v1h-1zM537 220h1v1h-1zM537 207h1v1h-1zM537 195h1v1h-1zM537 183h1v1h-1zM537 171h1v1h-1zM537 158h1v1h-1zM550 723h1v1h-1zM550 710h1v1h-1zM550 698h1v1h-1zM550 686h1v1h-1zM550 674h1v1h-1zM550 661h1v1h-1zM550 649h1v1h-1zM550 637h1v1h-1zM550 624h1v1h-1zM550 612h1v1h-1zM550 600h1v1h-1zM550 588h1v1h-1zM550 575h1v1h-1zM550 563h1v1h-1zM550 551h1v1h-1zM550 539h1v1h-1zM550 526h1v1h-1zM550 514h1v1h-1zM550 502h1v1h-1zM550 490h1v1h-1zM550 477h1v1h-1zM550 465h1v1h-1zM550 453h1v1h-1zM550 440h1v1h-1zM550 428h1v1h-1zM550 416h1v1h-1zM550 404h1v1h-1zM550 391h1v1h-1zM550 379h1v1h-1zM550 367h1v1h-1zM550 355h1v1h-1zM550 342h1v1h-1zM550 330h1v1h-1zM550 318h1v1h-1zM550 306h1v1h-1zM550 293h1v1h-1zM550 281h1v1h-1zM550 269h1v1h-1zM550 256h1v1h-1zM550 244h1v1h-1zM550 232h1v1h-1zM550 220h1v1h-1zM550 207h1v1h-1zM550 195h1v1h-1zM550 183h1v1h-1zM550 171h1v1h-1zM550 158h1v1h-1zM562 723h1v1h-1zM562 710h1v1h-1zM562 698h1v1h-1zM562 686h1v1h-1zM562 674h1v1h-1zM562 661h1v1h-1zM562 649h1v1h-1zM562 637h1v1h-1zM562 624h1v1h-1zM562 612h1v1h-1zM562 600h1v1h-1zM562 588h1v1h-1zM562 575h1v1h-1zM562 563h1v1h-1zM562 551h1v1h-1zM562 539h1v1h-1zM562 526h1v1h-1zM562 514h1v1h-1zM562 502h1v1h-1zM562 490h1v1h-1zM562 477h1v1h-1zM562 465h1v1h-1zM562 453h1v1h-1zM562 440h1v1h-1zM562 428h1v1h-1zM562 416h1v1h-1zM562 404h1v1h-1zM562 391h1v1h-1zM562 379h1v1h-1zM562 367h1v1h-1zM562 355h1v1h-1zM562 342h1v1h-1zM562 330h1v1h-1zM562 318h1v1h-1zM562 306h1v1h-1zM562 293h1v1h-1zM562 281h1v1h-1zM562 269h1v1h-1zM562 256h1v1h-1zM562 244h1v1h-1zM562 232h1v1h-1zM562 220h1v1h-1zM562 207h1v1h-1zM562 195h1v1h-1zM562 183h1v1h-1zM562 171h1v1h-1zM562 158h1v1h-1zM574 723h1v1h-1zM574 710h1v1h-1zM574 698h1v1h-1zM574 686h1v1h-1zM574 674h1v1h-1zM574 661h1v1h-1zM574 649h1v1h-1zM574 637h1v1h-1zM574 624h1v1h-1zM574 612h1v1h-1zM574 600h1v1h-1zM574 588h1v1h-1zM574 575h1v1h-1zM574 563h1v1h-1zM574 551h1v1h-1zM574 539h1v1h-1zM574 526h1v1h-1zM574 514h1v1h-1zM574 502h1v1h-1zM574 490h1v1h-1zM574 477h1v1h-1zM574 465h1v1h-1zM574 453h1v1h-1zM574 440h1v1h-1zM574 428h1v1h-1zM574 416h1v1h-1zM574 404h1v1h-1zM574 391h1v1h-1zM574 379h1v1h-1zM574 367h1v1h-1zM574 355h1v1h-1zM574 342h1v1h-1zM574 330h1v1h-1zM574 318h1v1h-1zM574 306h1v1h-1zM574 293h1v1h-1zM574 281h1v1h-1zM574 269h1v1h-1zM574 256h1v1h-1zM574 244h1v1h-1zM574 232h1v1h-1zM574 220h1v1h-1zM574 207h1v1h-1zM574 195h1v1h-1zM574 183h1v1h-1zM574 171h1v1h-1zM574 158h1v1h-1zM586 723h1v1h-1zM586 710h1v1h-1zM586 698h1v1h-1zM586 686h1v1h-1zM586 674h1v1h-1zM586 661h1v1h-1zM586 649h1v1h-1zM586 637h1v1h-1zM586 624h1v1h-1zM586 612h1v1h-1zM586 600h1v1h-1zM586 588h1v1h-1zM586 575h1v1h-1zM586 563h1v1h-1zM586 551h1v1h-1zM586 539h1v1h-1zM586 526h1v1h-1zM586 514h1v1h-1zM586 502h1v1h-1zM586 490h1v1h-1zM586 477h1v1h-1zM586 465h1v1h-1zM586 453h1v1h-1zM586 440h1v1h-1zM586 428h1v1h-1zM586 416h1v1h-1zM586 404h1v1h-1zM586 391h1v1h-1zM586 379h1v1h-1zM586 367h1v1h-1zM586 355h1v1h-1zM586 342h1v1h-1zM586 330h1v1h-1zM586 318h1v1h-1zM586 306h1v1h-1zM586 293h1v1h-1zM586 281h1v1h-1zM586 269h1v1h-1zM586 256h1v1h-1zM586 244h1v1h-1zM586 232h1v1h-1zM586 220h1v1h-1zM586 207h1v1h-1zM586 195h1v1h-1zM586 183h1v1h-1zM586 171h1v1h-1zM586 158h1v1h-1zM599 723h1v1h-1zM599 710h1v1h-1zM599 698h1v1h-1zM599 686h1v1h-1zM599 674h1v1h-1zM599 661h1v1h-1zM599 649h1v1h-1zM599 637h1v1h-1zM599 624h1v1h-1zM599 612h1v1h-1zM599 600h1v1h-1zM599 588h1v1h-1zM599 575h1v1h-1zM599 563h1v1h-1zM599 551h1v1h-1zM599 539h1v1h-1zM599 526h1v1h-1zM599 514h1v1h-1zM599 502h1v1h-1zM599 490h1v1h-1zM599 477h1v1h-1zM599 465h1v1h-1zM599 453h1v1h-1zM599 440h1v1h-1zM599 428h1v1h-1zM599 416h1v1h-1zM599 404h1v1h-1zM599 391h1v1h-1zM599 379h1v1h-1zM599 367h1v1h-1zM599 355h1v1h-1zM599 342h1v1h-1zM599 330h1v1h-1zM599 318h1v1h-1zM599 306h1v1h-1zM599 293h1v1h-1zM599 281h1v1h-1zM599 269h1v1h-1zM599 256h1v1h-1zM599 244h1v1h-1zM599 232h1v1h-1zM599 220h1v1h-1zM599 207h1v1h-1zM599 195h1v1h-1zM599 183h1v1h-1zM599 171h1v1h-1zM599 158h1v1h-1zM611 723h1v1h-1zM611 710h1v1h-1zM611 698h1v1h-1zM611 686h1v1h-1zM611 674h1v1h-1zM611 661h1v1h-1zM611 649h1v1h-1zM611 637h1v1h-1zM611 624h1v1h-1zM611 612h1v1h-1zM611 600h1v1h-1zM611 588h1v1h-1zM611 575h1v1h-1zM611 563h1v1h-1zM611 551h1v1h-1zM611 539h1v1h-1zM611 526h1v1h-1zM611 514h1v1h-1zM611 502h1v1h-1zM611 490h1v1h-1zM611 477h1v1h-1zM611 465h1v1h-1zM611 453h1v1h-1zM611 440h1v1h-1zM611 428h1v1h-1zM611 416h1v1h-1zM611 404h1v1h-1zM611 391h1v1h-1zM611 379h1v1h-1zM611 367h1v1h-1zM611 355h1v1h-1zM611 342h1v1h-1zM611 330h1v1h-1zM611 318h1v1h-1zM611 306h1v1h-1zM611 293h1v1h-1zM611 281h1v1h-1zM611 269h1v1h-1zM611 256h1v1h-1zM611 244h1v1h-1zM611 232h1v1h-1zM611 220h1v1h-1zM611 207h1v1h-1zM611 195h1v1h-1zM611 183h1v1h-1zM611 171h1v1h-1zM611 158h1v1h-1zM623 723h1v1h-1zM623 710h1v1h-1zM623 698h1v1h-1zM623 686h1v1h-1zM623 674h1v1h-1zM623 661h1v1h-1zM623 649h1v1h-1zM623 637h1v1h-1zM623 624h1v1h-1zM623 612h1v1h-1zM623 600h1v1h-1zM623 588h1v1h-1zM623 575h1v1h-1zM623 563h1v1h-1zM623 551h1v1h-1zM623 539h1v1h-1zM623 526h1v1h-1zM623 514h1v1h-1zM623 502h1v1h-1zM623 490h1v1h-1zM623 477h1v1h-1zM623 465h1v1h-1zM623 453h1v1h-1zM623 440h1v1h-1zM623 428h1v1h-1zM623 416h1v1h-1zM623 404h1v1h-1zM623 391h1v1h-1zM623 379h1v1h-1zM623 367h1v1h-1zM623 355h1v1h-1zM623 342h1v1h-1zM623 330h1v1h-1zM623 318h1v1h-1zM623 306h1v1h-1zM623 293h1v1h-1zM623 281h1v1h-1zM623 269h1v1h-1zM623 256h1v1h-1zM623 244h1v1h-1zM623 232h1v1h-1zM623 220h1v1h-1zM623 207h1v1h-1zM623 195h1v1h-1zM623 183h1v1h-1zM623 171h1v1h-1zM623 158h1v1h-1zM635 723h1v1h-1zM635 710h1v1h-1zM635 698h1v1h-1zM635 686h1v1h-1zM635 674h1v1h-1zM635 661h1v1h-1zM635 649h1v1h-1zM635 637h1v1h-1zM635 624h1v1h-1zM635 612h1v1h-1zM635 600h1v1h-1zM635 588h1v1h-1zM635 575h1v1h-1zM635 563h1v1h-1zM635 551h1v1h-1zM635 539h1v1h-1zM635 526h1v1h-1zM635 514h1v1h-1zM635 502h1v1h-1zM635 490h1v1h-1zM635 477h1v1h-1zM635 465h1v1h-1zM635 453h1v1h-1zM635 440h1v1h-1zM635 428h1v1h-1zM635 416h1v1h-1zM635 404h1v1h-1zM635 391h1v1h-1zM635 379h1v1h-1zM635 367h1v1h-1zM635 355h1v1h-1zM635 342h1v1h-1zM635 330h1v1h-1zM635 318h1v1h-1zM635 306h1v1h-1zM635 293h1v1h-1zM635 281h1v1h-1zM635 269h1v1h-1zM635 256h1v1h-1zM635 244h1v1h-1zM635 232h1v1h-1zM635 220h1v1h-1zM635 207h1v1h-1zM635 195h1v1h-1zM635 183h1v1h-1zM635 171h1v1h-1zM635 158h1v1h-1zM648 723h1v1h-1zM648 710h1v1h-1zM648 698h1v1h-1zM648 686h1v1h-1zM648 674h1v1h-1zM648 661h1v1h-1zM648 649h1v1h-1zM648 637h1v1h-1zM648 624h1v1h-1zM648 612h1v1h-1zM648 600h1v1h-1zM648 588h1v1h-1zM648 575h1v1h-1zM648 563h1v1h-1zM648 551h1v1h-1zM648 539h1v1h-1zM648 526h1v1h-1zM648 514h1v1h-1zM648 502h1v1h-1zM648 490h1v1h-1zM648 477h1v1h-1zM648 465h1v1h-1zM648 453h1v1h-1zM648 440h1v1h-1zM648 428h1v1h-1zM648 416h1v1h-1zM648 404h1v1h-1zM648 391h1v1h-1zM648 379h1v1h-1zM648 367h1v1h-1zM648 355h1v1h-1zM648 342h1v1h-1zM648 330h1v1h-1zM648 318h1v1h-1zM648 306h1v1h-1zM648 293h1v1h-1zM648 281h1v1h-1zM648 269h1v1h-1zM648 256h1v1h-1zM648 244h1v1h-1zM648 232h1v1h-1zM648 220h1v1h-1zM648 207h1v1h-1zM648 195h1v1h-1zM648 183h1v1h-1zM648 171h1v1h-1zM648 158h1v1h-1zM660 723h1v1h-1zM660 710h1v1h-1zM660 698h1v1h-1zM660 686h1v1h-1zM660 674h1v1h-1zM660 661h1v1h-1zM660 649h1v1h-1zM660 637h1v1h-1zM660 624h1v1h-1zM660 612h1v1h-1zM660 600h1v1h-1zM660 588h1v1h-1zM660 575h1v1h-1zM660 563h1v1h-1zM660 551h1v1h-1zM660 539h1v1h-1zM660 526h1v1h-1zM660 514h1v1h-1zM660 502h1v1h-1zM660 490h1v1h-1zM660 477h1v1h-1zM660 465h1v1h-1zM660 453h1v1h-1zM660 440h1v1h-1zM660 428h1v1h-1zM660 416h1v1h-1zM660 404h1v1h-1zM660 391h1v1h-1zM660 379h1v1h-1zM660 367h1v1h-1zM660 355h1v1h-1zM660 342h1v1h-1zM660 330h1v1h-1zM660 318h1v1h-1zM660 306h1v1h-1zM660 293h1v1h-1zM660 281h1v1h-1zM660 269h1v1h-1zM660 256h1v1h-1zM660 244h1v1h-1zM660 232h1v1h-1zM660 220h1v1h-1zM660 207h1v1h-1zM660 195h1v1h-1zM660 183h1v1h-1zM660 171h1v1h-1zM660 158h1v1h-1zM672 723h1v1h-1zM672 710h1v1h-1zM672 698h1v1h-1zM672 686h1v1h-1zM672 674h1v1h-1zM672 661h1v1h-1zM672 649h1v1h-1zM672 637h1v1h-1zM672 624h1v1h-1zM672 612h1v1h-1zM672 600h1v1h-1zM672 588h1v1h-1zM672 575h1v1h-1zM672 563h1v1h-1zM672 551h1v1h-1zM672 539h1v1h-1zM672 526h1v1h-1zM672 514h1v1h-1zM672 502h1v1h-1zM672 490h1v1h-1zM672 477h1v1h-1zM672 465h1v1h-1zM672 453h1v1h-1zM672 440h1v1h-1zM672 428h1v1h-1zM672 416h1v1h-1zM672 404h1v1h-1zM672 391h1v1h-1zM672 379h1v1h-1zM672 367h1v1h-1zM672 355h1v1h-1zM672 342h1v1h-1zM672 330h1v1h-1zM672 318h1v1h-1zM672 306h1v1h-1zM672 293h1v1h-1zM672 281h1v1h-1zM672 269h1v1h-1zM672 256h1v1h-1zM672 244h1v1h-1zM672 232h1v1h-1zM672 220h1v1h-1zM672 207h1v1h-1zM672 195h1v1h-1zM672 183h1v1h-1zM672 171h1v1h-1zM672 158h1v1h-1zM685 723h1v1h-1zM685 710h1v1h-1zM685 698h1v1h-1zM685 686h1v1h-1zM685 674h1v1h-1zM685 661h1v1h-1zM685 649h1v1h-1zM685 637h1v1h-1zM685 624h1v1h-1zM685 612h1v1h-1zM685 600h1v1h-1zM685 588h1v1h-1zM685 575h1v1h-1zM685 563h1v1h-1zM685 551h1v1h-1zM685 539h1v1h-1zM685 526h1v1h-1zM685 514h1v1h-1zM685 502h1v1h-1zM685 490h1v1h-1zM685 477h1v1h-1zM685 465h1v1h-1zM685 453h1v1h-1zM685 440h1v1h-1zM685 428h1v1h-1zM685 416h1v1h-1zM685 404h1v1h-1zM685 391h1v1h-1zM685 379h1v1h-1zM685 367h1v1h-1zM685 355h1v1h-1zM685 342h1v1h-1zM685 330h1v1h-1zM685 318h1v1h-1zM685 306h1v1h-1zM685 293h1v1h-1zM685 281h1v1h-1zM685 269h1v1h-1zM685 256h1v1h-1zM685 244h1v1h-1zM685 232h1v1h-1zM685 220h1v1h-1zM685 207h1v1h-1zM685 195h1v1h-1zM685 183h1v1h-1zM685 171h1v1h-1zM685 158h1v1h-1zM697 723h1v1h-1zM697 710h1v1h-1zM697 698h1v1h-1zM697 686h1v1h-1zM697 674h1v1h-1zM697 661h1v1h-1zM697 649h1v1h-1zM697 637h1v1h-1zM697 624h1v1h-1zM697 612h1v1h-1zM697 600h1v1h-1zM697 588h1v1h-1zM697 575h1v1h-1zM697 563h1v1h-1zM697 551h1v1h-1zM697 539h1v1h-1zM697 526h1v1h-1zM697 514h1v1h-1zM697 502h1v1h-1zM697 490h1v1h-1zM697 477h1v1h-1zM697 465h1v1h-1zM697 453h1v1h-1zM697 440h1v1h-1zM697 428h1v1h-1zM697 416h1v1h-1zM697 404h1v1h-1zM697 391h1v1h-1zM697 379h1v1h-1zM697 367h1v1h-1zM697 355h1v1h-1zM697 342h1v1h-1zM697 330h1v1h-1zM697 318h1v1h-1zM697 306h1v1h-1zM697 293h1v1h-1zM697 281h1v1h-1zM697 269h1v1h-1zM697 256h1v1h-1zM697 244h1v1h-1zM697 232h1v1h-1zM697 220h1v1h-1zM697 207h1v1h-1zM697 195h1v1h-1zM697 183h1v1h-1zM697 171h1v1h-1zM697 158h1v1h-1zM709 723h1v1h-1zM709 710h1v1h-1zM709 698h1v1h-1zM709 686h1v1h-1zM709 674h1v1h-1zM709 661h1v1h-1zM709 649h1v1h-1zM709 637h1v1h-1zM709 624h1v1h-1zM709 612h1v1h-1zM709 600h1v1h-1zM709 588h1v1h-1zM709 575h1v1h-1zM709 563h1v1h-1zM709 551h1v1h-1zM709 539h1v1h-1zM709 526h1v1h-1zM709 514h1v1h-1zM709 502h1v1h-1zM709 490h1v1h-1zM709 477h1v1h-1zM709 465h1v1h-1zM709 453h1v1h-1zM709 440h1v1h-1zM709 428h1v1h-1zM709 416h1v1h-1zM709 404h1v1h-1zM709 391h1v1h-1zM709 379h1v1h-1zM709 367h1v1h-1zM709 355h1v1h-1zM709 342h1v1h-1zM709 330h1v1h-1zM709 318h1v1h-1zM709 306h1v1h-1zM709 293h1v1h-1zM709 281h1v1h-1zM709 269h1v1h-1zM709 256h1v1h-1zM709 244h1v1h-1zM709 232h1v1h-1zM709 220h1v1h-1zM709 207h1v1h-1zM709 195h1v1h-1zM709 183h1v1h-1zM709 171h1v1h-1zM709 158h1v1h-1zM721 723h1v1h-1zM721 710h1v1h-1zM721 698h1v1h-1zM721 686h1v1h-1zM721 674h1v1h-1zM721 661h1v1h-1zM721 649h1v1h-1zM721 637h1v1h-1zM721 624h1v1h-1zM721 612h1v1h-1zM721 600h1v1h-1zM721 588h1v1h-1zM721 575h1v1h-1zM721 563h1v1h-1zM721 551h1v1h-1zM721 539h1v1h-1zM721 526h1v1h-1zM721 514h1v1h-1zM721 502h1v1h-1zM721 490h1v1h-1zM721 477h1v1h-1zM721 465h1v1h-1zM721 453h1v1h-1zM721 440h1v1h-1zM721 428h1v1h-1zM721 416h1v1h-1zM721 404h1v1h-1zM721 391h1v1h-1zM721 379h1v1h-1zM721 367h1v1h-1zM721 355h1v1h-1zM721 342h1v1h-1zM721 330h1v1h-1zM721 318h1v1h-1zM721 306h1v1h-1zM721 293h1v1h-1zM721 281h1v1h-1zM721 269h1v1h-1zM721 256h1v1h-1zM721 244h1v1h-1zM721 232h1v1h-1zM721 220h1v1h-1zM721 207h1v1h-1zM721 195h1v1h-1zM721 183h1v1h-1zM721 171h1v1h-1zM721 158h1v1h-1zM734 723h1v1h-1zM734 710h1v1h-1zM734 698h1v1h-1zM734 686h1v1h-1zM734 674h1v1h-1zM734 661h1v1h-1zM734 649h1v1h-1zM734 637h1v1h-1zM734 624h1v1h-1zM734 612h1v1h-1zM734 600h1v1h-1zM734 588h1v1h-1zM734 575h1v1h-1zM734 563h1v1h-1zM734 551h1v1h-1zM734 539h1v1h-1zM734 526h1v1h-1zM734 514h1v1h-1zM734 502h1v1h-1zM734 490h1v1h-1zM734 477h1v1h-1zM734 465h1v1h-1zM734 453h1v1h-1zM734 440h1v1h-1zM734 428h1v1h-1zM734 416h1v1h-1zM734 404h1v1h-1zM734 391h1v1h-1zM734 379h1v1h-1zM734 367h1v1h-1zM734 355h1v1h-1zM734 342h1v1h-1zM734 330h1v1h-1zM734 318h1v1h-1zM734 306h1v1h-1zM734 293h1v1h-1zM734 281h1v1h-1zM734 269h1v1h-1zM734 256h1v1h-1zM734 244h1v1h-1zM734 232h1v1h-1zM734 220h1v1h-1zM734 207h1v1h-1zM734 195h1v1h-1zM734 183h1v1h-1zM734 171h1v1h-1zM734 158h1v1h-1zM746 723h1v1h-1zM746 710h1v1h-1zM746 698h1v1h-1zM746 686h1v1h-1zM746 674h1v1h-1zM746 661h1v1h-1zM746 649h1v1h-1zM746 637h1v1h-1zM746 624h1v1h-1zM746 612h1v1h-1zM746 600h1v1h-1zM746 588h1v1h-1zM746 575h1v1h-1zM746 563h1v1h-1zM746 551h1v1h-1zM746 539h1v1h-1zM746 526h1v1h-1zM746 514h1v1h-1zM746 502h1v1h-1zM746 490h1v1h-1zM746 477h1v1h-1zM746 465h1v1h-1zM746 453h1v1h-1zM746 440h1v1h-1zM746 428h1v1h-1zM746 416h1v1h-1zM746 404h1v1h-1zM746 391h1v1h-1zM746 379h1v1h-1zM746 367h1v1h-1zM746 355h1v1h-1zM746 342h1v1h-1zM746 330h1v1h-1zM746 318h1v1h-1zM746 306h1v1h-1zM746 293h1v1h-1zM746 281h1v1h-1zM746 269h1v1h-1zM746 256h1v1h-1zM746 244h1v1h-1zM746 232h1v1h-1zM746 220h1v1h-1zM746 207h1v1h-1zM746 195h1v1h-1zM746 183h1v1h-1zM746 171h1v1h-1zM746 158h1v1h-1zM758 723h1v1h-1zM758 710h1v1h-1zM758 698h1v1h-1zM758 686h1v1h-1zM758 674h1v1h-1zM758 661h1v1h-1zM758 649h1v1h-1zM758 637h1v1h-1zM758 624h1v1h-1zM758 612h1v1h-1zM758 600h1v1h-1zM758 588h1v1h-1zM758 575h1v1h-1zM758 563h1v1h-1zM758 551h1v1h-1zM758 539h1v1h-1zM758 526h1v1h-1zM758 514h1v1h-1zM758 502h1v1h-1zM758 490h1v1h-1zM758 477h1v1h-1zM758 465h1v1h-1zM758 453h1v1h-1zM758 440h1v1h-1zM758 428h1v1h-1zM758 416h1v1h-1zM758 404h1v1h-1zM758 391h1v1h-1zM758 379h1v1h-1zM758 367h1v1h-1zM758 355h1v1h-1zM758 342h1v1h-1zM758 330h1v1h-1zM758 318h1v1h-1zM758 306h1v1h-1zM758 293h1v1h-1zM758 281h1v1h-1zM758 269h1v1h-1zM758 256h1v1h-1zM758 244h1v1h-1zM758 232h1v1h-1zM758 220h1v1h-1zM758 207h1v1h-1zM758 195h1v1h-1zM758 183h1v1h-1zM758 171h1v1h-1zM758 158h1v1h-1zM770 723h1v1h-1zM770 710h1v1h-1zM770 698h1v1h-1zM770 686h1v1h-1zM770 674h1v1h-1zM770 661h1v1h-1zM770 649h1v1h-1zM770 637h1v1h-1zM770 624h1v1h-1zM770 612h1v1h-1zM770 600h1v1h-1zM770 588h1v1h-1zM770 575h1v1h-1zM770 563h1v1h-1zM770 551h1v1h-1zM770 539h1v1h-1zM770 526h1v1h-1zM770 514h1v1h-1zM770 502h1v1h-1zM770 490h1v1h-1zM770 477h1v1h-1zM770 465h1v1h-1zM770 453h1v1h-1zM770 440h1v1h-1zM770 428h1v1h-1zM770 416h1v1h-1zM770 404h1v1h-1zM770 391h1v1h-1zM770 379h1v1h-1zM770 367h1v1h-1zM770 355h1v1h-1zM770 342h1v1h-1zM770 330h1v1h-1zM770 318h1v1h-1zM770 306h1v1h-1zM770 293h1v1h-1zM770 281h1v1h-1zM770 269h1v1h-1zM770 256h1v1h-1zM770 244h1v1h-1zM770 232h1v1h-1zM770 220h1v1h-1zM770 207h1v1h-1zM770 195h1v1h-1zM770 183h1v1h-1zM770 171h1v1h-1zM770 158h1v1h-1zM783 723h1v1h-1zM783 710h1v1h-1zM783 698h1v1h-1zM783 686h1v1h-1zM783 674h1v1h-1zM783 661h1v1h-1zM783 649h1v1h-1zM783 637h1v1h-1zM783 624h1v1h-1zM783 612h1v1h-1zM783 600h1v1h-1zM783 588h1v1h-1zM783 575h1v1h-1zM783 563h1v1h-1zM783 551h1v1h-1zM783 539h1v1h-1zM783 526h1v1h-1zM783 514h1v1h-1zM783 502h1v1h-1zM783 490h1v1h-1zM783 477h1v1h-1zM783 465h1v1h-1zM783 453h1v1h-1zM783 440h1v1h-1zM783 428h1v1h-1zM783 416h1v1h-1zM783 404h1v1h-1zM783 391h1v1h-1zM783 379h1v1h-1zM783 367h1v1h-1zM783 355h1v1h-1zM783 342h1v1h-1zM783 330h1v1h-1zM783 318h1v1h-1zM783 306h1v1h-1zM783 293h1v1h-1zM783 281h1v1h-1zM783 269h1v1h-1zM783 256h1v1h-1zM783 244h1v1h-1zM783 232h1v1h-1zM783 220h1v1h-1zM783 207h1v1h-1zM783 195h1v1h-1zM783 183h1v1h-1zM783 171h1v1h-1zM783 158h1v1h-1zM795 723h1v1h-1zM795 710h1v1h-1zM795 698h1v1h-1zM795 686h1v1h-1zM795 674h1v1h-1zM795 661h1v1h-1zM795 649h1v1h-1zM795 637h1v1h-1zM795 624h1v1h-1zM795 612h1v1h-1zM795 600h1v1h-1zM795 588h1v1h-1zM795 575h1v1h-1zM795 563h1v1h-1zM795 551h1v1h-1zM795 539h1v1h-1zM795 526h1v1h-1zM795 514h1v1h-1zM795 502h1v1h-1zM795 490h1v1h-1zM795 477h1v1h-1zM795 465h1v1h-1zM795 453h1v1h-1zM795 440h1v1h-1zM795 428h1v1h-1zM795 416h1v1h-1zM795 404h1v1h-1zM795 391h1v1h-1zM795 379h1v1h-1zM795 367h1v1h-1zM795 355h1v1h-1zM795 342h1v1h-1zM795 330h1v1h-1zM795 318h1v1h-1zM795 306h1v1h-1zM795 293h1v1h-1zM795 281h1v1h-1zM795 269h1v1h-1zM795 256h1v1h-1zM795 244h1v1h-1zM795 232h1v1h-1zM795 220h1v1h-1zM795 207h1v1h-1zM795 195h1v1h-1zM795 183h1v1h-1zM795 171h1v1h-1zM795 158h1v1h-1zM807 723h1v1h-1zM807 710h1v1h-1zM807 698h1v1h-1zM807 686h1v1h-1zM807 674h1v1h-1zM807 661h1v1h-1zM807 649h1v1h-1zM807 637h1v1h-1zM807 624h1v1h-1zM807 612h1v1h-1zM807 600h1v1h-1zM807 588h1v1h-1zM807 575h1v1h-1zM807 563h1v1h-1zM807 551h1v1h-1zM807 539h1v1h-1zM807 526h1v1h-1zM807 514h1v1h-1zM807 502h1v1h-1zM807 490h1v1h-1zM807 477h1v1h-1zM807 465h1v1h-1zM807 453h1v1h-1zM807 440h1v1h-1zM807 428h1v1h-1zM807 416h1v1h-1zM807 404h1v1h-1zM807 391h1v1h-1zM807 379h1v1h-1zM807 367h1v1h-1zM807 355h1v1h-1zM807 342h1v1h-1zM807 330h1v1h-1zM807 318h1v1h-1zM807 306h1v1h-1zM807 293h1v1h-1zM807 281h1v1h-1zM807 269h1v1h-1zM807 256h1v1h-1zM807 244h1v1h-1zM807 232h1v1h-1zM807 220h1v1h-1zM807 207h1v1h-1zM807 195h1v1h-1zM807 183h1v1h-1zM807 171h1v1h-1zM807 158h1v1h-1zM819 723h1v1h-1zM819 710h1v1h-1zM819 698h1v1h-1zM819 686h1v1h-1zM819 674h1v1h-1zM819 661h1v1h-1zM819 649h1v1h-1zM819 637h1v1h-1zM819 624h1v1h-1zM819 612h1v1h-1zM819 600h1v1h-1zM819 588h1v1h-1zM819 575h1v1h-1zM819 563h1v1h-1zM819 551h1v1h-1zM819 539h1v1h-1zM819 526h1v1h-1zM819 514h1v1h-1zM819 502h1v1h-1zM819 490h1v1h-1zM819 477h1v1h-1zM819 465h1v1h-1zM819 453h1v1h-1zM819 440h1v1h-1zM819 428h1v1h-1zM819 416h1v1h-1zM819 404h1v1h-1zM819 391h1v1h-1zM819 379h1v1h-1zM819 367h1v1h-1zM819 355h1v1h-1zM819 342h1v1h-1zM819 330h1v1h-1zM819 318h1v1h-1zM819 306h1v1h-1zM819 293h1v1h-1zM819 281h1v1h-1zM819 269h1v1h-1zM819 256h1v1h-1zM819 244h1v1h-1zM819 232h1v1h-1zM819 220h1v1h-1zM819 207h1v1h-1zM819 195h1v1h-1zM819 183h1v1h-1zM819 171h1v1h-1zM819 158h1v1h-1zM832 723h1v1h-1zM832 710h1v1h-1zM832 698h1v1h-1zM832 686h1v1h-1zM832 674h1v1h-1zM832 661h1v1h-1zM832 649h1v1h-1zM832 637h1v1h-1zM832 624h1v1h-1zM832 612h1v1h-1zM832 600h1v1h-1zM832 588h1v1h-1zM832 575h1v1h-1zM832 563h1v1h-1zM832 551h1v1h-1zM832 539h1v1h-1zM832 526h1v1h-1zM832 514h1v1h-1zM832 502h1v1h-1zM832 490h1v1h-1zM832 477h1v1h-1zM832 465h1v1h-1zM832 453h1v1h-1zM832 440h1v1h-1zM832 428h1v1h-1zM832 416h1v1h-1zM832 404h1v1h-1zM832 391h1v1h-1zM832 379h1v1h-1zM832 367h1v1h-1zM832 355h1v1h-1zM832 342h1v1h-1zM832 330h1v1h-1zM832 318h1v1h-1zM832 306h1v1h-1zM832 293h1v1h-1zM832 281h1v1h-1zM832 269h1v1h-1zM832 256h1v1h-1zM832 244h1v1h-1zM832 232h1v1h-1zM832 220h1v1h-1zM832 207h1v1h-1zM832 195h1v1h-1zM832 183h1v1h-1zM832 171h1v1h-1zM832 158h1v1h-1zM844 723h1v1h-1zM844 710h1v1h-1zM844 698h1v1h-1zM844 686h1v1h-1zM844 674h1v1h-1zM844 661h1v1h-1zM844 649h1v1h-1zM844 637h1v1h-1zM844 624h1v1h-1zM844 612h1v1h-1zM844 600h1v1h-1zM844 588h1v1h-1zM844 575h1v1h-1zM844 563h1v1h-1zM844 551h1v1h-1zM844 539h1v1h-1zM844 526h1v1h-1zM844 514h1v1h-1zM844 502h1v1h-1zM844 490h1v1h-1zM844 477h1v1h-1zM844 465h1v1h-1zM844 453h1v1h-1zM844 440h1v1h-1zM844 428h1v1h-1zM844 416h1v1h-1zM844 404h1v1h-1zM844 391h1v1h-1zM844 379h1v1h-1zM844 367h1v1h-1zM844 355h1v1h-1zM844 342h1v1h-1zM844 330h1v1h-1zM844 318h1v1h-1zM844 306h1v1h-1zM844 293h1v1h-1zM844 281h1v1h-1zM844 269h1v1h-1zM844 256h1v1h-1zM844 244h1v1h-1zM844 232h1v1h-1zM844 220h1v1h-1zM844 207h1v1h-1zM844 195h1v1h-1zM844 183h1v1h-1zM844 171h1v1h-1zM844 158h1v1h-1zM856 723h1v1h-1zM856 710h1v1h-1zM856 698h1v1h-1zM856 686h1v1h-1zM856 674h1v1h-1zM856 661h1v1h-1zM856 649h1v1h-1zM856 637h1v1h-1zM856 624h1v1h-1zM856 612h1v1h-1zM856 600h1v1h-1zM856 588h1v1h-1zM856 575h1v1h-1zM856 563h1v1h-1zM856 551h1v1h-1zM856 539h1v1h-1zM856 526h1v1h-1zM856 514h1v1h-1zM856 502h1v1h-1zM856 490h1v1h-1zM856 477h1v1h-1zM856 465h1v1h-1zM856 453h1v1h-1zM856 440h1v1h-1zM856 428h1v1h-1zM856 416h1v1h-1zM856 404h1v1h-1zM856 391h1v1h-1zM856 379h1v1h-1zM856 367h1v1h-1zM856 355h1v1h-1zM856 342h1v1h-1zM856 330h1v1h-1zM856 318h1v1h-1zM856 306h1v1h-1zM856 293h1v1h-1zM856 281h1v1h-1zM856 269h1v1h-1zM856 256h1v1h-1zM856 244h1v1h-1zM856 232h1v1h-1zM856 220h1v1h-1zM856 207h1v1h-1zM856 195h1v1h-1zM856 183h1v1h-1zM856 171h1v1h-1zM856 158h1v1h-1zM869 723h1v1h-1zM869 710h1v1h-1zM869 698h1v1h-1zM869 686h1v1h-1zM869 674h1v1h-1zM869 661h1v1h-1zM869 649h1v1h-1zM869 637h1v1h-1zM869 624h1v1h-1zM869 612h1v1h-1zM869 600h1v1h-1zM869 588h1v1h-1zM869 575h1v1h-1zM869 563h1v1h-1zM869 551h1v1h-1zM869 539h1v1h-1zM869 526h1v1h-1zM869 514h1v1h-1zM869 502h1v1h-1zM869 490h1v1h-1zM869 477h1v1h-1zM869 465h1v1h-1zM869 453h1v1h-1zM869 440h1v1h-1zM869 428h1v1h-1zM869 416h1v1h-1zM869 404h1v1h-1zM869 391h1v1h-1zM869 379h1v1h-1zM869 367h1v1h-1zM869 355h1v1h-1zM869 342h1v1h-1zM869 330h1v1h-1zM869 318h1v1h-1zM869 306h1v1h-1zM869 293h1v1h-1zM869 281h1v1h-1zM869 269h1v1h-1zM869 256h1v1h-1zM869 244h1v1h-1zM869 232h1v1h-1zM869 220h1v1h-1zM869 207h1v1h-1zM869 195h1v1h-1zM869 183h1v1h-1zM869 171h1v1h-1zM869 158h1v1h-1zM881 723h1v1h-1zM881 710h1v1h-1zM881 698h1v1h-1zM881 686h1v1h-1zM881 674h1v1h-1zM881 661h1v1h-1zM881 649h1v1h-1zM881 637h1v1h-1zM881 624h1v1h-1zM881 612h1v1h-1zM881 600h1v1h-1zM881 588h1v1h-1zM881 575h1v1h-1zM881 563h1v1h-1zM881 551h1v1h-1zM881 539h1v1h-1zM881 526h1v1h-1zM881 514h1v1h-1zM881 502h1v1h-1zM881 490h1v1h-1zM881 477h1v1h-1zM881 465h1v1h-1zM881 453h1v1h-1zM881 440h1v1h-1zM881 428h1v1h-1zM881 416h1v1h-1zM881 404h1v1h-1zM881 391h1v1h-1zM881 379h1v1h-1zM881 367h1v1h-1zM881 355h1v1h-1zM881 342h1v1h-1zM881 330h1v1h-1zM881 318h1v1h-1zM881 306h1v1h-1zM881 293h1v1h-1zM881 281h1v1h-1zM881 269h1v1h-1zM881 256h1v1h-1zM881 244h1v1h-1zM881 232h1v1h-1zM881 220h1v1h-1zM881 207h1v1h-1zM881 195h1v1h-1zM881 183h1v1h-1zM881 171h1v1h-1zM881 158h1v1h-1zM893 723h1v1h-1zM893 710h1v1h-1zM893 698h1v1h-1zM893 686h1v1h-1zM893 674h1v1h-1zM893 661h1v1h-1zM893 649h1v1h-1zM893 637h1v1h-1zM893 624h1v1h-1zM893 612h1v1h-1zM893 600h1v1h-1zM893 588h1v1h-1zM893 575h1v1h-1zM893 563h1v1h-1zM893 551h1v1h-1zM893 539h1v1h-1zM893 526h1v1h-1zM893 514h1v1h-1zM893 502h1v1h-1zM893 490h1v1h-1zM893 477h1v1h-1zM893 465h1v1h-1zM893 453h1v1h-1zM893 440h1v1h-1zM893 428h1v1h-1zM893 416h1v1h-1zM893 404h1v1h-1zM893 391h1v1h-1zM893 379h1v1h-1zM893 367h1v1h-1zM893 355h1v1h-1zM893 342h1v1h-1zM893 330h1v1h-1zM893 318h1v1h-1zM893 306h1v1h-1zM893 293h1v1h-1zM893 281h1v1h-1zM893 269h1v1h-1zM893 256h1v1h-1zM893 244h1v1h-1zM893 232h1v1h-1zM893 220h1v1h-1zM893 207h1v1h-1zM893 195h1v1h-1zM893 183h1v1h-1zM893 171h1v1h-1zM893 158h1v1h-1zM905 723h1v1h-1zM905 710h1v1h-1zM905 698h1v1h-1zM905 686h1v1h-1zM905 674h1v1h-1zM905 661h1v1h-1zM905 649h1v1h-1zM905 637h1v1h-1zM905 624h1v1h-1zM905 612h1v1h-1zM905 600h1v1h-1zM905 588h1v1h-1zM905 575h1v1h-1zM905 563h1v1h-1zM905 551h1v1h-1zM905 539h1v1h-1zM905 526h1v1h-1zM905 514h1v1h-1zM905 502h1v1h-1zM905 490h1v1h-1zM905 477h1v1h-1zM905 465h1v1h-1zM905 453h1v1h-1zM905 440h1v1h-1zM905 428h1v1h-1zM905 416h1v1h-1zM905 404h1v1h-1zM905 391h1v1h-1zM905 379h1v1h-1zM905 367h1v1h-1zM905 355h1v1h-1zM905 342h1v1h-1zM905 330h1v1h-1zM905 318h1v1h-1zM905 306h1v1h-1zM905 293h1v1h-1zM905 281h1v1h-1zM905 269h1v1h-1zM905 256h1v1h-1zM905 244h1v1h-1zM905 232h1v1h-1zM905 220h1v1h-1zM905 207h1v1h-1zM905 195h1v1h-1zM905 183h1v1h-1zM905 171h1v1h-1zM905 158h1v1h-1zM918 723h1v1h-1zM918 710h1v1h-1zM918 698h1v1h-1zM918 686h1v1h-1zM918 674h1v1h-1zM918 661h1v1h-1zM918 649h1v1h-1zM918 637h1v1h-1zM918 624h1v1h-1zM918 612h1v1h-1zM918 600h1v1h-1zM918 588h1v1h-1zM918 575h1v1h-1zM918 563h1v1h-1zM918 551h1v1h-1zM918 539h1v1h-1zM918 526h1v1h-1zM918 514h1v1h-1zM918 502h1v1h-1zM918 490h1v1h-1zM918 477h1v1h-1zM918 465h1v1h-1zM918 453h1v1h-1zM918 440h1v1h-1zM918 428h1v1h-1zM918 416h1v1h-1zM918 404h1v1h-1zM918 391h1v1h-1zM918 379h1v1h-1zM918 367h1v1h-1zM918 355h1v1h-1zM918 342h1v1h-1zM918 330h1v1h-1zM918 318h1v1h-1zM918 306h1v1h-1zM918 293h1v1h-1zM918 281h1v1h-1zM918 269h1v1h-1zM918 256h1v1h-1zM918 244h1v1h-1zM918 232h1v1h-1zM918 220h1v1h-1zM918 207h1v1h-1zM918 195h1v1h-1zM918 183h1v1h-1zM918 171h1v1h-1zM918 158h1v1h-1zM930 723h1v1h-1zM930 710h1v1h-1zM930 698h1v1h-1zM930 686h1v1h-1zM930 674h1v1h-1zM930 661h1v1h-1zM930 649h1v1h-1zM930 637h1v1h-1zM930 624h1v1h-1zM930 612h1v1h-1zM930 600h1v1h-1zM930 588h1v1h-1zM930 575h1v1h-1zM930 563h1v1h-1zM930 551h1v1h-1zM930 539h1v1h-1zM930 526h1v1h-1zM930 514h1v1h-1zM930 502h1v1h-1zM930 490h1v1h-1zM930 477h1v1h-1zM930 465h1v1h-1zM930 453h1v1h-1zM930 440h1v1h-1zM930 428h1v1h-1zM930 416h1v1h-1zM930 404h1v1h-1zM930 391h1v1h-1zM930 379h1v1h-1zM930 367h1v1h-1zM930 355h1v1h-1zM930 342h1v1h-1zM930 330h1v1h-1zM930 318h1v1h-1zM930 306h1v1h-1zM930 293h1v1h-1zM930 281h1v1h-1zM930 269h1v1h-1zM930 256h1v1h-1zM930 244h1v1h-1zM930 232h1v1h-1zM930 220h1v1h-1zM930 207h1v1h-1zM930 195h1v1h-1zM930 183h1v1h-1zM930 171h1v1h-1zM930 158h1v1h-1zM942 723h1v1h-1zM942 710h1v1h-1zM942 698h1v1h-1zM942 686h1v1h-1zM942 674h1v1h-1zM942 661h1v1h-1zM942 649h1v1h-1zM942 637h1v1h-1zM942 624h1v1h-1zM942 612h1v1h-1zM942 600h1v1h-1zM942 588h1v1h-1zM942 575h1v1h-1zM942 563h1v1h-1zM942 551h1v1h-1zM942 539h1v1h-1zM942 526h1v1h-1zM942 514h1v1h-1zM942 502h1v1h-1zM942 490h1v1h-1zM942 477h1v1h-1zM942 465h1v1h-1zM942 453h1v1h-1zM942 440h1v1h-1zM942 428h1v1h-1zM942 416h1v1h-1zM942 404h1v1h-1zM942 391h1v1h-1zM942 379h1v1h-1zM942 367h1v1h-1zM942 355h1v1h-1zM942 342h1v1h-1zM942 330h1v1h-1zM942 318h1v1h-1zM942 306h1v1h-1zM942 293h1v1h-1zM942 281h1v1h-1zM942 269h1v1h-1zM942 256h1v1h-1zM942 244h1v1h-1zM942 232h1v1h-1zM942 220h1v1h-1zM942 207h1v1h-1zM942 195h1v1h-1zM942 183h1v1h-1zM942 171h1v1h-1zM942 158h1v1h-1zM954 723h1v1h-1zM954 710h1v1h-1zM954 698h1v1h-1zM954 686h1v1h-1zM954 674h1v1h-1zM954 661h1v1h-1zM954 649h1v1h-1zM954 637h1v1h-1zM954 624h1v1h-1zM954 612h1v1h-1zM954 600h1v1h-1zM954 588h1v1h-1zM954 575h1v1h-1zM954 563h1v1h-1zM954 551h1v1h-1zM954 539h1v1h-1zM954 526h1v1h-1zM954 514h1v1h-1zM954 502h1v1h-1zM954 490h1v1h-1zM954 477h1v1h-1zM954 465h1v1h-1zM954 453h1v1h-1zM954 440h1v1h-1zM954 428h1v1h-1zM954 416h1v1h-1zM954 404h1v1h-1zM954 391h1v1h-1zM954 379h1v1h-1zM954 367h1v1h-1zM954 355h1v1h-1zM954 342h1v1h-1zM954 330h1v1h-1zM954 318h1v1h-1zM954 306h1v1h-1zM954 293h1v1h-1zM954 281h1v1h-1zM954 269h1v1h-1zM954 256h1v1h-1zM954 244h1v1h-1zM954 232h1v1h-1zM954 220h1v1h-1zM954 207h1v1h-1zM954 195h1v1h-1zM954 183h1v1h-1zM954 171h1v1h-1zM954 158h1v1h-1zM967 723h1v1h-1zM967 710h1v1h-1zM967 698h1v1h-1zM967 686h1v1h-1zM967 674h1v1h-1zM967 661h1v1h-1zM967 649h1v1h-1zM967 637h1v1h-1zM967 624h1v1h-1zM967 612h1v1h-1zM967 600h1v1h-1zM967 588h1v1h-1zM967 575h1v1h-1zM967 563h1v1h-1zM967 551h1v1h-1zM967 539h1v1h-1zM967 526h1v1h-1zM967 514h1v1h-1zM967 502h1v1h-1zM967 490h1v1h-1zM967 477h1v1h-1zM967 465h1v1h-1zM967 453h1v1h-1zM967 440h1v1h-1zM967 428h1v1h-1zM967 416h1v1h-1zM967 404h1v1h-1zM967 391h1v1h-1zM967 379h1v1h-1zM967 367h1v1h-1zM967 355h1v1h-1zM967 342h1v1h-1zM967 330h1v1h-1zM967 318h1v1h-1zM967 306h1v1h-1zM967 293h1v1h-1zM967 281h1v1h-1zM967 269h1v1h-1zM967 256h1v1h-1zM967 244h1v1h-1zM967 232h1v1h-1zM967 220h1v1h-1zM967 207h1v1h-1zM967 195h1v1h-1zM967 183h1v1h-1zM967 171h1v1h-1zM967 158h1v1h-1zM979 723h1v1h-1zM979 710h1v1h-1zM979 698h1v1h-1zM979 686h1v1h-1zM979 674h1v1h-1zM979 661h1v1h-1zM979 649h1v1h-1zM979 637h1v1h-1zM979 624h1v1h-1zM979 612h1v1h-1zM979 600h1v1h-1zM979 588h1v1h-1zM979 575h1v1h-1zM979 563h1v1h-1zM979 551h1v1h-1zM979 539h1v1h-1zM979 526h1v1h-1zM979 514h1v1h-1zM979 502h1v1h-1zM979 490h1v1h-1zM979 477h1v1h-1zM979 465h1v1h-1zM979 453h1v1h-1zM979 440h1v1h-1zM979 428h1v1h-1zM979 416h1v1h-1zM979 404h1v1h-1zM979 391h1v1h-1zM979 379h1v1h-1zM979 367h1v1h-1zM979 355h1v1h-1zM979 342h1v1h-1zM979 330h1v1h-1zM979 318h1v1h-1zM979 306h1v1h-1zM979 293h1v1h-1zM979 281h1v1h-1zM979 269h1v1h-1zM979 256h1v1h-1zM979 244h1v1h-1zM979 232h1v1h-1zM979 220h1v1h-1zM979 207h1v1h-1zM979 195h1v1h-1zM979 183h1v1h-1zM979 171h1v1h-1zM979 158h1v1h-1zM991 723h1v1h-1zM991 710h1v1h-1zM991 698h1v1h-1zM991 686h1v1h-1zM991 674h1v1h-1zM991 661h1v1h-1zM991 649h1v1h-1zM991 637h1v1h-1zM991 624h1v1h-1zM991 612h1v1h-1zM991 600h1v1h-1zM991 588h1v1h-1zM991 575h1v1h-1zM991 563h1v1h-1zM991 551h1v1h-1zM991 539h1v1h-1zM991 526h1v1h-1zM991 514h1v1h-1zM991 502h1v1h-1zM991 490h1v1h-1zM991 477h1v1h-1zM991 465h1v1h-1zM991 453h1v1h-1zM991 440h1v1h-1zM991 428h1v1h-1zM991 416h1v1h-1zM991 404h1v1h-1zM991 391h1v1h-1zM991 379h1v1h-1zM991 367h1v1h-1zM991 355h1v1h-1zM991 342h1v1h-1zM991 330h1v1h-1zM991 318h1v1h-1zM991 306h1v1h-1zM991 293h1v1h-1zM991 281h1v1h-1zM991 269h1v1h-1zM991 256h1v1h-1zM991 244h1v1h-1zM991 232h1v1h-1zM991 220h1v1h-1zM991 207h1v1h-1zM991 195h1v1h-1zM991 183h1v1h-1zM991 171h1v1h-1zM991 158h1v1h-1zM1003 723h1v1h-1zM1003 710h1v1h-1zM1003 698h1v1h-1zM1003 686h1v1h-1zM1003 674h1v1h-1zM1003 661h1v1h-1zM1003 649h1v1h-1zM1003 637h1v1h-1zM1003 624h1v1h-1zM1003 612h1v1h-1zM1003 600h1v1h-1zM1003 588h1v1h-1zM1003 575h1v1h-1zM1003 563h1v1h-1zM1003 551h1v1h-1zM1003 539h1v1h-1zM1003 526h1v1h-1zM1003 514h1v1h-1zM1003 502h1v1h-1zM1003 490h1v1h-1zM1003 477h1v1h-1zM1003 465h1v1h-1zM1003 453h1v1h-1zM1003 440h1v1h-1zM1003 428h1v1h-1zM1003 416h1v1h-1zM1003 404h1v1h-1zM1003 391h1v1h-1zM1003 379h1v1h-1zM1003 367h1v1h-1zM1003 355h1v1h-1zM1003 342h1v1h-1zM1003 330h1v1h-1zM1003 318h1v1h-1zM1003 306h1v1h-1zM1003 293h1v1h-1zM1003 281h1v1h-1zM1003 269h1v1h-1zM1003 256h1v1h-1zM1003 244h1v1h-1zM1003 232h1v1h-1zM1003 220h1v1h-1zM1003 207h1v1h-1zM1003 195h1v1h-1zM1003 183h1v1h-1zM1003 171h1v1h-1zM1003 158h1v1h-1zM1016 723h1v1h-1zM1016 710h1v1h-1zM1016 698h1v1h-1zM1016 686h1v1h-1zM1016 674h1v1h-1zM1016 661h1v1h-1zM1016 649h1v1h-1zM1016 637h1v1h-1zM1016 624h1v1h-1zM1016 612h1v1h-1zM1016 600h1v1h-1zM1016 588h1v1h-1zM1016 575h1v1h-1zM1016 563h1v1h-1zM1016 551h1v1h-1zM1016 539h1v1h-1zM1016 526h1v1h-1zM1016 514h1v1h-1zM1016 502h1v1h-1zM1016 490h1v1h-1zM1016 477h1v1h-1zM1016 465h1v1h-1zM1016 453h1v1h-1zM1016 440h1v1h-1zM1016 428h1v1h-1zM1016 416h1v1h-1zM1016 404h1v1h-1zM1016 391h1v1h-1zM1016 379h1v1h-1zM1016 367h1v1h-1zM1016 355h1v1h-1zM1016 342h1v1h-1zM1016 330h1v1h-1zM1016 318h1v1h-1zM1016 306h1v1h-1zM1016 293h1v1h-1zM1016 281h1v1h-1zM1016 269h1v1h-1zM1016 256h1v1h-1zM1016 244h1v1h-1zM1016 232h1v1h-1zM1016 220h1v1h-1zM1016 207h1v1h-1zM1016 195h1v1h-1zM1016 183h1v1h-1zM1016 171h1v1h-1zM1016 158h1v1h-1zM1028 723h1v1h-1zM1028 710h1v1h-1zM1028 698h1v1h-1zM1028 686h1v1h-1zM1028 674h1v1h-1zM1028 661h1v1h-1zM1028 649h1v1h-1zM1028 637h1v1h-1zM1028 624h1v1h-1zM1028 612h1v1h-1zM1028 600h1v1h-1zM1028 588h1v1h-1zM1028 575h1v1h-1zM1028 563h1v1h-1zM1028 551h1v1h-1zM1028 539h1v1h-1zM1028 526h1v1h-1zM1028 514h1v1h-1zM1028 502h1v1h-1zM1028 490h1v1h-1zM1028 477h1v1h-1zM1028 465h1v1h-1zM1028 453h1v1h-1zM1028 440h1v1h-1zM1028 428h1v1h-1zM1028 416h1v1h-1zM1028 404h1v1h-1zM1028 391h1v1h-1zM1028 379h1v1h-1zM1028 367h1v1h-1zM1028 355h1v1h-1zM1028 342h1v1h-1zM1028 330h1v1h-1zM1028 318h1v1h-1zM1028 306h1v1h-1zM1028 293h1v1h-1zM1028 281h1v1h-1zM1028 269h1v1h-1zM1028 256h1v1h-1zM1028 244h1v1h-1zM1028 232h1v1h-1zM1028 220h1v1h-1zM1028 207h1v1h-1zM1028 195h1v1h-1zM1028 183h1v1h-1zM1028 171h1v1h-1zM1028 158h1v1h-1zM1040 723h1v1h-1zM1040 710h1v1h-1zM1040 698h1v1h-1zM1040 686h1v1h-1zM1040 674h1v1h-1zM1040 661h1v1h-1zM1040 649h1v1h-1zM1040 637h1v1h-1zM1040 624h1v1h-1zM1040 612h1v1h-1zM1040 600h1v1h-1zM1040 588h1v1h-1zM1040 575h1v1h-1zM1040 563h1v1h-1zM1040 551h1v1h-1zM1040 539h1v1h-1zM1040 526h1v1h-1zM1040 514h1v1h-1zM1040 502h1v1h-1zM1040 490h1v1h-1zM1040 477h1v1h-1zM1040 465h1v1h-1zM1040 453h1v1h-1zM1040 440h1v1h-1zM1040 428h1v1h-1zM1040 416h1v1h-1zM1040 404h1v1h-1zM1040 391h1v1h-1zM1040 379h1v1h-1zM1040 367h1v1h-1zM1040 355h1v1h-1zM1040 342h1v1h-1zM1040 330h1v1h-1zM1040 318h1v1h-1zM1040 306h1v1h-1zM1040 293h1v1h-1zM1040 281h1v1h-1zM1040 269h1v1h-1zM1040 256h1v1h-1zM1040 244h1v1h-1zM1040 232h1v1h-1zM1040 220h1v1h-1zM1040 207h1v1h-1zM1040 195h1v1h-1zM1040 183h1v1h-1zM1040 171h1v1h-1zM1040 158h1v1h-1zM1053 723h1v1h-1zM1053 710h1v1h-1zM1053 698h1v1h-1zM1053 686h1v1h-1zM1053 674h1v1h-1zM1053 661h1v1h-1zM1053 649h1v1h-1zM1053 637h1v1h-1zM1053 624h1v1h-1zM1053 612h1v1h-1zM1053 600h1v1h-1zM1053 588h1v1h-1zM1053 575h1v1h-1zM1053 563h1v1h-1zM1053 551h1v1h-1zM1053 539h1v1h-1zM1053 526h1v1h-1zM1053 514h1v1h-1zM1053 502h1v1h-1zM1053 490h1v1h-1zM1053 477h1v1h-1zM1053 465h1v1h-1zM1053 453h1v1h-1zM1053 440h1v1h-1zM1053 428h1v1h-1zM1053 416h1v1h-1zM1053 404h1v1h-1zM1053 391h1v1h-1zM1053 379h1v1h-1zM1053 367h1v1h-1zM1053 355h1v1h-1zM1053 342h1v1h-1zM1053 330h1v1h-1zM1053 318h1v1h-1zM1053 306h1v1h-1zM1053 293h1v1h-1zM1053 281h1v1h-1zM1053 269h1v1h-1zM1053 256h1v1h-1zM1053 244h1v1h-1zM1053 232h1v1h-1zM1053 220h1v1h-1zM1053 207h1v1h-1zM1053 195h1v1h-1zM1053 183h1v1h-1zM1053 171h1v1h-1zM1053 158h1v1h-1zM1065 723h1v1h-1zM1065 710h1v1h-1zM1065 698h1v1h-1zM1065 686h1v1h-1zM1065 674h1v1h-1zM1065 661h1v1h-1zM1065 649h1v1h-1zM1065 637h1v1h-1zM1065 624h1v1h-1zM1065 612h1v1h-1zM1065 600h1v1h-1zM1065 588h1v1h-1zM1065 575h1v1h-1zM1065 563h1v1h-1zM1065 551h1v1h-1zM1065 539h1v1h-1zM1065 526h1v1h-1zM1065 514h1v1h-1zM1065 502h1v1h-1zM1065 490h1v1h-1zM1065 477h1v1h-1zM1065 465h1v1h-1zM1065 453h1v1h-1zM1065 440h1v1h-1zM1065 428h1v1h-1zM1065 416h1v1h-1zM1065 404h1v1h-1zM1065 391h1v1h-1zM1065 379h1v1h-1zM1065 367h1v1h-1zM1065 355h1v1h-1zM1065 342h1v1h-1zM1065 330h1v1h-1zM1065 318h1v1h-1zM1065 306h1v1h-1zM1065 293h1v1h-1zM1065 281h1v1h-1zM1065 269h1v1h-1zM1065 256h1v1h-1zM1065 244h1v1h-1zM1065 232h1v1h-1zM1065 220h1v1h-1zM1065 207h1v1h-1zM1065 195h1v1h-1zM1065 183h1v1h-1zM1065 171h1v1h-1zM1065 158h1v1h-1zM1077 723h1v1h-1zM1077 710h1v1h-1zM1077 698h1v1h-1zM1077 686h1v1h-1zM1077 674h1v1h-1zM1077 661h1v1h-1zM1077 649h1v1h-1zM1077 637h1v1h-1zM1077 624h1v1h-1zM1077 612h1v1h-1zM1077 600h1v1h-1zM1077 588h1v1h-1zM1077 575h1v1h-1zM1077 563h1v1h-1zM1077 551h1v1h-1zM1077 539h1v1h-1zM1077 526h1v1h-1zM1077 514h1v1h-1zM1077 502h1v1h-1zM1077 490h1v1h-1zM1077 477h1v1h-1zM1077 465h1v1h-1zM1077 453h1v1h-1zM1077 440h1v1h-1zM1077 428h1v1h-1zM1077 416h1v1h-1zM1077 404h1v1h-1zM1077 391h1v1h-1zM1077 379h1v1h-1zM1077 367h1v1h-1zM1077 355h1v1h-1zM1077 342h1v1h-1zM1077 330h1v1h-1zM1077 318h1v1h-1zM1077 306h1v1h-1zM1077 293h1v1h-1zM1077 281h1v1h-1zM1077 269h1v1h-1zM1077 256h1v1h-1zM1077 244h1v1h-1zM1077 232h1v1h-1zM1077 220h1v1h-1zM1077 207h1v1h-1zM1077 195h1v1h-1zM1077 183h1v1h-1zM1077 171h1v1h-1zM1077 158h1v1h-1zM1089 723h1v1h-1zM1089 710h1v1h-1zM1089 698h1v1h-1zM1089 686h1v1h-1zM1089 674h1v1h-1zM1089 661h1v1h-1zM1089 649h1v1h-1zM1089 637h1v1h-1zM1089 624h1v1h-1zM1089 612h1v1h-1zM1089 600h1v1h-1zM1089 588h1v1h-1zM1089 575h1v1h-1zM1089 563h1v1h-1zM1089 551h1v1h-1zM1089 539h1v1h-1zM1089 526h1v1h-1zM1089 514h1v1h-1zM1089 502h1v1h-1zM1089 490h1v1h-1zM1089 477h1v1h-1zM1089 465h1v1h-1zM1089 453h1v1h-1zM1089 440h1v1h-1zM1089 428h1v1h-1zM1089 416h1v1h-1zM1089 404h1v1h-1zM1089 391h1v1h-1zM1089 379h1v1h-1zM1089 367h1v1h-1zM1089 355h1v1h-1zM1089 342h1v1h-1zM1089 330h1v1h-1zM1089 318h1v1h-1zM1089 306h1v1h-1zM1089 293h1v1h-1zM1089 281h1v1h-1zM1089 269h1v1h-1zM1089 256h1v1h-1zM1089 244h1v1h-1zM1089 232h1v1h-1zM1089 220h1v1h-1zM1089 207h1v1h-1zM1089 195h1v1h-1zM1089 183h1v1h-1zM1089 171h1v1h-1zM1089 158h1v1h-1zM1102 723h1v1h-1zM1102 710h1v1h-1zM1102 698h1v1h-1zM1102 686h1v1h-1zM1102 674h1v1h-1zM1102 661h1v1h-1zM1102 649h1v1h-1zM1102 637h1v1h-1zM1102 624h1v1h-1zM1102 612h1v1h-1zM1102 600h1v1h-1zM1102 588h1v1h-1zM1102 575h1v1h-1zM1102 563h1v1h-1zM1102 551h1v1h-1zM1102 539h1v1h-1zM1102 526h1v1h-1zM1102 514h1v1h-1zM1102 502h1v1h-1zM1102 490h1v1h-1zM1102 477h1v1h-1zM1102 465h1v1h-1zM1102 453h1v1h-1zM1102 440h1v1h-1zM1102 428h1v1h-1zM1102 416h1v1h-1zM1102 404h1v1h-1zM1102 391h1v1h-1zM1102 379h1v1h-1zM1102 367h1v1h-1zM1102 355h1v1h-1zM1102 342h1v1h-1zM1102 330h1v1h-1zM1102 318h1v1h-1zM1102 306h1v1h-1zM1102 293h1v1h-1zM1102 281h1v1h-1zM1102 269h1v1h-1zM1102 256h1v1h-1zM1102 244h1v1h-1zM1102 232h1v1h-1zM1102 220h1v1h-1zM1102 207h1v1h-1zM1102 195h1v1h-1zM1102 183h1v1h-1zM1102 171h1v1h-1zM1102 158h1v1h-1zM1114 723h1v1h-1zM1114 710h1v1h-1zM1114 698h1v1h-1zM1114 686h1v1h-1zM1114 674h1v1h-1zM1114 661h1v1h-1zM1114 649h1v1h-1zM1114 637h1v1h-1zM1114 624h1v1h-1zM1114 612h1v1h-1zM1114 600h1v1h-1zM1114 588h1v1h-1zM1114 575h1v1h-1zM1114 563h1v1h-1zM1114 551h1v1h-1zM1114 539h1v1h-1zM1114 526h1v1h-1zM1114 514h1v1h-1zM1114 502h1v1h-1zM1114 490h1v1h-1zM1114 477h1v1h-1zM1114 465h1v1h-1zM1114 453h1v1h-1zM1114 440h1v1h-1zM1114 428h1v1h-1zM1114 416h1v1h-1zM1114 404h1v1h-1zM1114 391h1v1h-1zM1114 379h1v1h-1zM1114 367h1v1h-1zM1114 355h1v1h-1zM1114 342h1v1h-1zM1114 330h1v1h-1zM1114 318h1v1h-1zM1114 306h1v1h-1zM1114 293h1v1h-1zM1114 281h1v1h-1zM1114 269h1v1h-1zM1114 256h1v1h-1zM1114 244h1v1h-1zM1114 232h1v1h-1zM1114 220h1v1h-1zM1114 207h1v1h-1zM1114 195h1v1h-1zM1114 183h1v1h-1zM1114 171h1v1h-1zM1114 158h1v1h-1zM1126 723h1v1h-1zM1126 710h1v1h-1zM1126 698h1v1h-1zM1126 686h1v1h-1zM1126 674h1v1h-1zM1126 661h1v1h-1zM1126 649h1v1h-1zM1126 637h1v1h-1zM1126 624h1v1h-1zM1126 612h1v1h-1zM1126 600h1v1h-1zM1126 588h1v1h-1zM1126 575h1v1h-1zM1126 563h1v1h-1zM1126 551h1v1h-1zM1126 539h1v1h-1zM1126 526h1v1h-1zM1126 514h1v1h-1zM1126 502h1v1h-1zM1126 490h1v1h-1zM1126 477h1v1h-1zM1126 465h1v1h-1zM1126 453h1v1h-1zM1126 440h1v1h-1zM1126 428h1v1h-1zM1126 416h1v1h-1zM1126 404h1v1h-1zM1126 391h1v1h-1zM1126 379h1v1h-1zM1126 367h1v1h-1zM1126 355h1v1h-1zM1126 342h1v1h-1zM1126 330h1v1h-1zM1126 318h1v1h-1zM1126 306h1v1h-1zM1126 293h1v1h-1zM1126 281h1v1h-1zM1126 269h1v1h-1zM1126 256h1v1h-1zM1126 244h1v1h-1zM1126 232h1v1h-1zM1126 220h1v1h-1zM1126 207h1v1h-1zM1126 195h1v1h-1zM1126 183h1v1h-1zM1126 171h1v1h-1zM1126 158h1v1h-1z" fill="#404040"/>
<path d="M423.0 402.4C428.7 402.5 445.0 405.2 457.0 403.3C469.0 401.4 485.2 396.9 495.0 391.0C504.8 385.1 509.7 376.1 516.0 368.2C522.3 360.3 527.0 350.6 533.0 343.6C539.0 336.7 544.1 330.8 552.0 326.5C559.9 322.2 571.1 319.7 580.6 318.0C590.1 316.3 599.1 315.4 609.0 316.1C618.9 316.8 630.7 318.0 640.0 322.0C649.3 326.0 658.5 332.3 665.0 340.0C671.5 347.7 675.7 358.0 679.0 368.0C682.3 378.0 684.3 390.5 685.0 400.0C685.7 409.5 685.0 416.7 683.0 425.0C681.0 433.3 675.4 442.8 673.0 450.0C670.6 457.2 669.3 462.7 668.5 468.0C667.7 473.3 666.2 475.7 668.4 482.0C670.6 488.3 676.8 498.0 681.6 506.0C686.4 514.0 693.4 523.0 697.0 530.0C700.6 537.0 701.2 542.8 703.0 548.0C704.8 553.2 707.0 559.2 707.8 561.5C711.5 560.6 722.3 557.5 730.0 556.0C737.7 554.5 743.5 553.3 754.0 552.5C764.5 551.7 786.5 551.2 793.0 551.0" stroke="#9a7a44" stroke-width="0.95" fill="none"/>
<path d="M421.4 421.9C427.4 422.0 445.7 423.8 457.4 422.3C469.1 420.8 481.4 417.7 491.5 412.8C501.6 407.9 510.7 399.7 518.0 392.9C525.3 386.1 529.1 379.6 535.1 372.0C541.1 364.4 547.2 353.2 554.1 347.4C561.0 341.6 567.6 339.1 576.8 337.0C585.9 334.9 599.3 334.2 609.0 335.0C618.7 335.8 627.8 337.8 635.0 342.0C642.2 346.2 647.5 353.2 652.0 360.0C656.5 366.8 659.9 375.6 662.0 383.0C664.1 390.4 665.2 397.1 664.7 404.6C664.2 412.1 661.0 420.8 659.0 428.0C657.0 435.2 654.1 439.4 652.4 447.8C650.7 456.2 647.7 467.8 648.7 478.6C649.7 489.4 654.6 503.6 658.5 512.5C662.4 521.4 668.1 525.8 672.0 532.0C675.9 538.2 680.8 544.7 682.0 550.0C683.2 555.3 680.7 559.5 679.0 564.0C677.3 568.5 675.2 573.2 672.0 577.0C668.8 580.8 664.8 584.5 660.0 587.0C655.2 589.5 648.8 592.2 643.0 592.0C637.2 591.8 631.2 589.2 625.0 586.0C618.8 582.8 611.4 576.6 605.6 572.8C599.8 569.0 595.5 565.3 590.0 563.0C584.5 560.7 579.3 559.2 572.6 559.2C565.9 559.2 556.6 560.4 550.0 563.0C543.4 565.6 537.3 570.2 533.0 575.0C528.7 579.8 526.5 585.6 524.0 592.0C521.5 598.4 519.0 609.9 518.0 613.5" stroke="#9a7a44" stroke-width="0.95" fill="none"/>
<path d="M537.4 614.6C538.2 611.8 539.8 602.8 542.0 598.0C544.2 593.2 545.9 589.3 550.6 586.0C555.3 582.7 563.1 577.9 570.4 578.3C577.7 578.7 586.3 584.2 594.6 588.2C602.9 592.2 611.9 598.3 620.0 602.0C628.1 605.7 635.5 609.9 643.0 610.6C650.5 611.3 657.7 608.8 665.0 606.0C672.3 603.2 677.8 598.1 687.0 593.7C696.2 589.3 707.9 583.2 720.0 579.4C732.1 575.6 746.6 570.9 759.6 571.0C772.6 571.1 791.7 578.3 798.1 579.8" stroke="#9a7a44" stroke-width="0.95" fill="none"/>
<path d="M409.3 277.4L715.1 261.3L795.3 551.3L791.8 550.6L713.2 267.3L409.6 283.7" stroke="#c4c4c4" stroke-width="1" fill="none"/>
<path d="M738.3 255.4L812.6 527.9C822 556 826 580 823.4 590C820 610 815 622 811 631" stroke="#c4c4c4" stroke-width="1" fill="none"/>
<path d="M797.2 580.2L780.2 628.9M800.3 581.3L783.5 629.6M797.2 580.2L800.3 581.3" stroke="#c4c4c4" stroke-width="1" fill="none"/>
<g stroke="#a00000" stroke-width="1" fill="none"><circle cx="439.4" cy="538.3" r="5"/><path d="M419 538.3H460M439.4 518V558.5"/></g>
<circle cx="661.3" cy="307" r="3.6" stroke="#e6e6e6" stroke-width="1.5" fill="none"/><path d="M662.8 303l1.5 -1.2" stroke="#e6e6e6" stroke-width="1"/>
<circle cx="602.4" cy="545.5" r="3.6" stroke="#e6e6e6" stroke-width="1.5" fill="none"/><path d="M603.9 541.5l1.5 -1.2" stroke="#e6e6e6" stroke-width="1"/>
<circle cx="779.4" cy="542.7" r="3.6" stroke="#e6e6e6" stroke-width="1.5" fill="none"/><path d="M780.9 538.7l1.5 -1.2" stroke="#e6e6e6" stroke-width="1"/>
<g transform="translate(544 298.5) rotate(-20)"><rect x="-15.0" y="-4.25" width="30" height="8.5" rx="1.5" fill="#6c6c6c" stroke="#c8c8c8" stroke-width="1"/><path d="M-13.5 -2.2H13.5M-13.5 0H13.5M-13.5 2.2H13.5M-13.1 -3.45V3.45M-11.2 -3.45V3.45M-9.4 -3.45V3.45M-7.5 -3.45V3.45M-5.6 -3.45V3.45M-3.8 -3.45V3.45M-1.9 -3.45V3.45M0.0 -3.45V3.45M1.9 -3.45V3.45M3.8 -3.45V3.45M5.6 -3.45V3.45M7.5 -3.45V3.45M9.4 -3.45V3.45M11.2 -3.45V3.45M13.1 -3.45V3.45" stroke="#b4b4b4" stroke-width="0.55"/><path d="M0 -4.25V4.25" stroke="#d0d0d0" stroke-width="0.8"/></g>
<g transform="translate(591 287) rotate(-1)"><rect x="-15.0" y="-4.25" width="30" height="8.5" rx="1.5" fill="#6c6c6c" stroke="#c8c8c8" stroke-width="1"/><path d="M-13.5 -2.2H13.5M-13.5 0H13.5M-13.5 2.2H13.5M-13.1 -3.45V3.45M-11.2 -3.45V3.45M-9.4 -3.45V3.45M-7.5 -3.45V3.45M-5.6 -3.45V3.45M-3.8 -3.45V3.45M-1.9 -3.45V3.45M0.0 -3.45V3.45M1.9 -3.45V3.45M3.8 -3.45V3.45M5.6 -3.45V3.45M7.5 -3.45V3.45M9.4 -3.45V3.45M11.2 -3.45V3.45M13.1 -3.45V3.45" stroke="#b4b4b4" stroke-width="0.55"/><path d="M0 -4.25V4.25" stroke="#d0d0d0" stroke-width="0.8"/></g>
<g transform="translate(639.8 295.7) rotate(18)"><rect x="-15.0" y="-4.25" width="30" height="8.5" rx="1.5" fill="#6c6c6c" stroke="#c8c8c8" stroke-width="1"/><path d="M-13.5 -2.2H13.5M-13.5 0H13.5M-13.5 2.2H13.5M-13.1 -3.45V3.45M-11.2 -3.45V3.45M-9.4 -3.45V3.45M-7.5 -3.45V3.45M-5.6 -3.45V3.45M-3.8 -3.45V3.45M-1.9 -3.45V3.45M0.0 -3.45V3.45M1.9 -3.45V3.45M3.8 -3.45V3.45M5.6 -3.45V3.45M7.5 -3.45V3.45M9.4 -3.45V3.45M11.2 -3.45V3.45M13.1 -3.45V3.45" stroke="#b4b4b4" stroke-width="0.55"/><path d="M0 -4.25V4.25" stroke="#d0d0d0" stroke-width="0.8"/></g>
<g transform="translate(681.3 322.6) rotate(45)"><rect x="-15.0" y="-4.25" width="30" height="8.5" rx="1.5" fill="#6c6c6c" stroke="#c8c8c8" stroke-width="1"/><path d="M-13.5 -2.2H13.5M-13.5 0H13.5M-13.5 2.2H13.5M-13.1 -3.45V3.45M-11.2 -3.45V3.45M-9.4 -3.45V3.45M-7.5 -3.45V3.45M-5.6 -3.45V3.45M-3.8 -3.45V3.45M-1.9 -3.45V3.45M0.0 -3.45V3.45M1.9 -3.45V3.45M3.8 -3.45V3.45M5.6 -3.45V3.45M7.5 -3.45V3.45M9.4 -3.45V3.45M11.2 -3.45V3.45M13.1 -3.45V3.45" stroke="#b4b4b4" stroke-width="0.55"/><path d="M0 -4.25V4.25" stroke="#d0d0d0" stroke-width="0.8"/></g>
<g transform="translate(707.6 365) rotate(68)"><rect x="-15.0" y="-4.25" width="30" height="8.5" rx="1.5" fill="#6c6c6c" stroke="#c8c8c8" stroke-width="1"/><path d="M-13.5 -2.2H13.5M-13.5 0H13.5M-13.5 2.2H13.5M-13.1 -3.45V3.45M-11.2 -3.45V3.45M-9.4 -3.45V3.45M-7.5 -3.45V3.45M-5.6 -3.45V3.45M-3.8 -3.45V3.45M-1.9 -3.45V3.45M0.0 -3.45V3.45M1.9 -3.45V3.45M3.8 -3.45V3.45M5.6 -3.45V3.45M7.5 -3.45V3.45M9.4 -3.45V3.45M11.2 -3.45V3.45M13.1 -3.45V3.45" stroke="#b4b4b4" stroke-width="0.55"/><path d="M0 -4.25V4.25" stroke="#d0d0d0" stroke-width="0.8"/></g>
<g transform="translate(713 413.8) rotate(93)"><rect x="-15.0" y="-4.25" width="30" height="8.5" rx="1.5" fill="#6c6c6c" stroke="#c8c8c8" stroke-width="1"/><path d="M-13.5 -2.2H13.5M-13.5 0H13.5M-13.5 2.2H13.5M-13.1 -3.45V3.45M-11.2 -3.45V3.45M-9.4 -3.45V3.45M-7.5 -3.45V3.45M-5.6 -3.45V3.45M-3.8 -3.45V3.45M-1.9 -3.45V3.45M0.0 -3.45V3.45M1.9 -3.45V3.45M3.8 -3.45V3.45M5.6 -3.45V3.45M7.5 -3.45V3.45M9.4 -3.45V3.45M11.2 -3.45V3.45M13.1 -3.45V3.45" stroke="#b4b4b4" stroke-width="0.55"/><path d="M0 -4.25V4.25" stroke="#d0d0d0" stroke-width="0.8"/></g>
<g transform="translate(574.7 543) rotate(4)"><rect x="-15.0" y="-4.25" width="30" height="8.5" rx="1.5" fill="#6c6c6c" stroke="#c8c8c8" stroke-width="1"/><path d="M-13.5 -2.2H13.5M-13.5 0H13.5M-13.5 2.2H13.5M-13.1 -3.45V3.45M-11.2 -3.45V3.45M-9.4 -3.45V3.45M-7.5 -3.45V3.45M-5.6 -3.45V3.45M-3.8 -3.45V3.45M-1.9 -3.45V3.45M0.0 -3.45V3.45M1.9 -3.45V3.45M3.8 -3.45V3.45M5.6 -3.45V3.45M7.5 -3.45V3.45M9.4 -3.45V3.45M11.2 -3.45V3.45M13.1 -3.45V3.45" stroke="#b4b4b4" stroke-width="0.55"/><path d="M0 -4.25V4.25" stroke="#d0d0d0" stroke-width="0.8"/></g>
<polygon points="519.8,352.3 518.3,355.3 522.1,359.0 519.9,361.9 519.6,365.2 515.4,367.0 515.1,370.2 509.8,370.5 508.8,373.1 505.5,374.0 505.9,378.2 503.0,379.3 503.1,384.5 499.3,384.1 497.9,388.2 494.7,388.7 492.0,390.8 488.1,387.7 485.4,390.4 482.2,388.6 479.2,390.4 476.3,388.8 473.0,389.5 470.6,386.7 467.3,387.2 465.8,383.3 462.9,382.5 461.6,379.4 458.0,379.5 456.4,376.9 452.2,376.6 450.8,373.9 445.6,373.4 446.3,369.3 443.7,366.8 446.7,362.5 444.0,360.1 447.3,356.5 446.3,353.7 448.8,351.0 445.2,347.8 448.0,345.4 444.9,341.6 448.0,339.4 446.2,335.3 449.9,333.8 449.9,330.1 454.2,329.6 453.4,324.7 457.3,324.3 457.8,319.9 461.4,319.5 463.8,317.3 468.0,319.3 470.4,317.1 474.0,319.3 476.5,317.7 479.5,320.2 482.2,316.1 485.1,317.1 488.7,313.7 491.6,315.3 495.7,312.9 497.6,317.1 501.0,317.4 501.8,322.0 504.5,323.5 505.6,326.6 509.0,327.5 508.4,331.7 513.2,332.0 512.9,335.6 515.7,337.5 514.7,341.1 518.2,343.1 515.2,346.7 518.9,349.2" fill="none" stroke="#5a9a2a" stroke-width="0.9"/><path d="M490.8 342.9L493.7 341.6L496.5 339.8L499.8 339.3L503.2 339.0L505.1 335.3L508.9 336.1L511.5 334.1M490.8 342.9L494.1 341.6L497.0 339.9L499.4 337.4L502.3 335.6L505.0 333.4L507.3 330.7L510.8 329.9M503.4 329.0L504.5 332.0L507.2 333.2L508.9 335.6L509.9 338.2L511.0 340.8L512.7 343.2L513.7 345.9M495.1 351.9L497.1 349.6L500.2 349.0L503.1 348.1L505.5 346.3L508.0 344.8L510.6 343.3L512.6 340.9M495.1 351.9L498.5 351.5L501.3 349.1L504.6 348.1L507.8 347.3L511.6 348.4L514.5 346.2L517.9 346.1M506.9 354.8L505.3 356.6L503.7 358.2L503.2 360.2L503.5 362.7L501.1 363.6L500.1 365.4L499.8 368.1M491.1 358.6L493.1 360.4L494.8 362.5L497.0 364.1L498.9 365.9L498.9 369.4L501.5 370.7L503.2 372.7M491.1 358.6L493.5 361.0L497.4 360.7L500.2 362.3L502.8 364.3L504.8 367.3L508.4 367.6L510.7 370.0M500.3 374.4L497.7 375.3L494.7 375.3L493.1 379.0L490.2 378.9L487.3 378.2L484.7 377.1L481.9 378.5M483.3 361.4L484.6 364.4L484.1 367.5L482.3 370.7L482.7 373.8L484.4 376.8L483.0 379.9L484.1 383.0M483.3 361.4L482.7 364.8L483.8 368.1L484.4 371.4L485.3 374.8L483.0 378.3L485.5 381.5L484.3 384.9M476.6 379.8L474.4 377.3L472.6 374.7L468.7 375.6L466.1 374.1L464.7 371.4L463.4 368.7L462.2 366.2M477.5 355.5L474.7 357.2L471.8 358.2L468.4 357.6L465.7 359.4L462.5 359.7L459.7 361.0L456.5 361.4M477.5 355.5L473.9 357.0L470.3 356.7L466.7 356.4L463.0 354.8L459.5 355.5L455.9 356.9L452.3 356.6M464.0 360.1L462.6 358.2L461.7 355.9L463.7 353.3L461.5 351.2L462.4 348.9L463.5 346.8L462.2 344.0M475.2 347.5L472.2 347.0L470.0 349.5L467.0 348.6L464.4 349.6L461.6 349.6L459.2 351.5L456.5 351.7M475.2 347.5L472.6 346.1L469.8 346.5L467.3 345.1L464.6 345.0L461.6 346.7L459.1 345.2L456.4 345.0M467.8 342.7L468.7 340.9L467.3 337.4L469.0 335.8L470.5 334.2L473.4 334.4L474.6 332.3L476.3 330.7M482.7 341.4L480.6 339.7L480.4 336.5L478.1 334.9L477.3 332.2L474.7 330.9L472.7 329.1L471.6 326.6M482.7 341.4L481.7 337.9L483.9 334.9L482.7 331.4L483.2 328.1L485.7 325.1L483.7 321.5L485.4 318.3M481.5 327.1L484.0 329.1L486.2 330.3L488.3 330.3L490.5 330.4L493.2 329.1L494.3 332.3L497.8 330.6" stroke="#5a9a2a" stroke-width="0.85" fill="none"/><path d="M487.9 353.0L490.8 342.9L482.7 349.6ZM485.1 354.4L495.1 351.9L485.5 348.2ZM482.8 353.3L491.1 358.6L487.8 349.3ZM482.2 350.7L483.3 361.4L488.4 351.9ZM483.8 348.5L477.5 355.5L486.8 354.1ZM486.4 348.4L475.2 347.5L484.2 354.2ZM488.3 350.5L482.7 341.4L482.3 352.1Z" fill="#5ea82e" stroke="#5ea82e" stroke-width="0.8"/><circle cx="485.3" cy="351.3" r="5.2" fill="#62ac30"/>
<polygon points="739.2,475.5 737.9,478.5 741.4,482.0 739.4,484.9 741.0,488.8 736.5,490.6 735.8,493.7 731.6,494.7 730.9,497.8 726.8,498.2 727.5,502.9 723.0,502.2 722.8,506.9 719.0,506.5 717.2,509.4 713.8,509.0 711.2,510.6 708.1,509.9 705.6,513.2 702.5,512.6 699.2,516.5 696.2,513.8 692.5,515.7 690.2,511.9 687.4,510.5 686.0,506.4 683.5,505.1 682.6,501.5 678.3,502.5 677.8,498.9 673.1,499.3 672.1,496.3 666.6,496.1 667.7,491.9 663.7,490.1 666.6,485.8 663.4,483.4 665.9,479.9 662.8,477.1 666.5,474.1 664.0,470.9 666.9,468.3 665.0,464.7 669.3,463.1 669.1,459.8 673.0,458.6 671.8,454.5 675.2,453.4 673.9,448.2 676.9,446.8 676.9,441.6 681.4,442.5 683.1,438.8 687.6,440.9 690.0,438.5 694.2,442.6 696.6,440.4 699.7,442.2 702.4,439.8 705.2,441.4 708.5,438.6 711.1,441.0 714.8,439.2 716.6,442.9 720.4,442.1 721.4,446.2 726.0,445.0 726.9,448.7 731.2,448.8 731.4,452.8 735.3,453.9 734.1,458.2 735.6,460.8 733.5,464.7 736.3,466.8 733.5,470.3 736.5,472.7" fill="none" stroke="#5a9a2a" stroke-width="0.9"/><path d="M708.1 468.5L707.2 465.3L709.2 462.4L708.5 459.2L708.7 456.1L710.8 453.2L709.0 449.9L710.4 447.0M708.1 468.5L709.2 465.5L710.7 462.8L713.9 461.2L714.5 457.9L716.8 455.7L716.9 452.1L719.6 450.2M715.5 460.3L718.5 460.2L718.5 463.5L722.7 463.1L721.0 467.2L724.6 467.9L722.8 471.1L724.4 473.0M711.0 477.5L713.8 475.6L716.4 473.1L720.6 473.8L722.5 470.1L725.3 468.2L728.7 467.4L732.0 466.1M711.0 477.5L714.4 476.5L717.8 477.2L721.2 476.5L724.5 477.8L727.9 478.8L731.3 478.8L734.7 478.3M732.0 478.1L732.3 481.1L731.3 484.0L729.7 486.6L727.8 488.9L728.2 492.2L725.5 494.0L723.2 495.7M711.4 485.2L714.4 485.3L717.4 486.0L720.5 485.4L723.1 488.0L726.4 486.5L729.2 487.8L732.3 487.9M711.4 485.2L713.4 486.5L716.0 486.7L718.2 487.7L720.2 488.8L722.1 490.3L724.3 491.3L725.7 493.5M721.7 496.1L721.1 499.4L718.7 501.0L716.5 502.8L712.8 501.3L710.7 503.0L708.0 503.0L705.7 504.8M701.8 489.5L701.2 492.1L700.0 494.5L700.5 497.5L699.5 499.9L697.6 502.1L697.5 504.9L695.6 507.0M701.8 489.5L702.0 492.4L700.8 494.8L699.7 497.2L698.8 499.7L697.1 501.8L696.3 504.4L695.3 506.8M699.0 502.0L697.1 499.8L694.0 501.8L691.6 501.1L689.9 499.1L688.6 496.8L686.6 495.6L684.8 494.1M696.0 485.8L695.0 488.5L691.7 489.2L690.7 492.1L688.5 493.8L685.8 495.1L684.6 497.7L683.0 499.9M696.0 485.8L694.8 489.1L694.2 492.6L691.0 495.0L691.0 498.9L689.0 501.8L686.1 504.3L685.4 507.9M684.5 495.4L681.5 494.6L680.1 492.4L678.6 490.2L678.6 487.4L676.3 485.4L677.8 482.4L676.6 480.0M690.9 476.5L688.3 478.6L685.0 478.9L682.3 480.6L679.3 481.7L676.1 482.2L673.6 484.4L670.6 485.4M690.9 476.5L688.9 478.6L685.7 477.6L683.6 479.1L680.9 479.2L678.8 480.9L677.1 483.6L674.2 483.4M675.7 471.2L676.7 468.7L678.6 466.6L680.4 464.6L681.6 462.2L682.3 459.3L685.7 459.0L687.1 456.6M697.0 468.0L697.8 464.7L696.1 461.6L695.8 458.3L696.3 455.1L695.5 451.9L695.8 448.6L695.9 445.4M697.0 468.0L696.6 464.8L696.5 461.6L693.9 459.0L693.9 455.8L695.0 452.3L691.9 449.7L692.2 446.4M694.2 457.4L696.3 456.7L698.0 453.0L700.5 452.3L703.1 453.6L705.3 455.9L707.7 455.6L709.8 456.5" stroke="#5a9a2a" stroke-width="0.85" fill="none"/><path d="M705.0 480.0L708.1 468.5L699.6 476.8ZM702.6 481.5L711.0 477.5L702.0 475.3ZM700.4 480.9L711.4 485.2L704.2 475.9ZM699.2 478.3L701.8 489.5L705.4 478.5ZM699.9 476.4L696.0 485.8L704.7 480.4ZM702.8 475.3L690.9 476.5L701.8 481.5ZM705.1 477.0L697.0 468.0L699.5 479.8Z" fill="#5ea82e" stroke="#5ea82e" stroke-width="0.8"/><circle cx="702.3" cy="478.4" r="5.2" fill="#62ac30"/>
<polygon points="610.5,447.9 608.0,450.9 608.9,454.2 605.7,456.3 606.1,459.8 601.7,460.4 601.5,463.9 597.2,463.4 597.4,468.3 594.6,469.6 593.0,474.4 589.2,473.2 586.1,474.8 583.1,469.0 580.2,470.0 578.2,466.9 574.3,469.4 572.0,467.5 567.5,468.4 567.0,464.2 564.3,462.5 564.2,459.0 559.7,457.7 561.6,453.8 559.3,451.1 564.4,447.9 561.9,445.1 564.1,442.7 559.9,438.2 561.7,435.4 560.8,430.7 567.0,431.6 569.1,429.4 572.9,429.8 574.6,427.0 577.8,427.6 579.7,423.4 583.0,425.7 585.9,423.7 588.7,425.6 592.6,422.7 595.3,424.6 599.2,424.5 599.0,430.2 601.5,431.8 599.7,436.8 604.8,436.7 604.9,439.8 611.6,440.9 609.3,444.8" fill="none" stroke="#5a9a2a" stroke-width="0.9"/><path d="M585.0 456.9L584.1 458.7L585.1 460.8L583.1 462.4L583.5 464.5L584.0 466.5L584.3 468.5L582.8 470.2M585.0 456.9L586.0 459.1L583.8 461.1L584.7 463.3L585.3 465.5L584.7 467.6L583.3 469.7L583.8 471.9M587.0 465.8L585.8 468.4L583.7 466.4L582.1 469.2L580.3 467.6L578.1 469.5L576.1 469.4L574.9 466.9M578.8 455.0L580.1 457.2L579.6 459.3L579.0 461.5L578.4 463.6L579.6 465.8L579.9 467.9L578.5 470.1M578.8 455.0L576.5 455.0L574.9 456.1L574.0 458.4L572.2 459.2L570.4 460.1L568.6 460.8L567.1 462.2M571.7 463.4L570.2 462.5L568.1 462.1L568.3 459.7L567.7 458.1L565.9 457.1L567.1 454.9L566.4 453.4M575.5 450.8L573.9 451.1L572.2 450.7L570.7 452.4L568.9 450.8L567.3 450.9L565.7 452.6L564.0 451.5M575.5 450.8L573.6 450.2L571.7 451.0L569.8 449.9L567.9 449.8L565.9 451.7L564.0 451.5L562.1 450.2M562.9 450.5L565.8 448.8L565.2 447.0L565.0 445.2L566.6 444.0L567.1 442.4L568.1 441.0L568.9 439.5M577.1 446.4L574.6 446.7L573.3 444.3L571.5 443.0L569.1 443.1L567.0 442.3L565.8 439.9L563.5 439.7M577.1 446.4L575.3 446.1L573.7 444.9L571.4 446.0L569.8 444.9L568.0 444.4L566.6 442.6L564.6 443.0M568.9 438.6L572.0 439.4L572.7 437.9L573.3 436.0L574.3 434.3L576.5 435.3L578.2 435.7L579.7 435.8M581.5 444.2L581.3 441.7L582.2 439.6L584.3 437.9L584.5 435.5L585.6 433.5L585.0 430.9L586.1 428.9M581.5 444.2L581.2 442.1L578.9 441.1L578.0 439.3L577.1 437.6L576.1 435.9L575.0 434.2L574.2 432.4M582.2 432.6L583.9 433.3L586.3 429.9L588.2 430.6L590.3 431.0L591.1 433.8L593.8 433.1L595.4 434.4M586.5 444.4L588.3 443.7L589.9 442.2L591.8 441.5L593.5 440.4L595.2 439.1L597.6 439.6L599.3 438.6M586.5 444.4L586.1 442.0L589.2 441.1L589.4 439.0L590.8 437.3L591.6 435.4L592.4 433.5L592.2 431.2M592.4 439.5L595.7 438.8L594.8 441.4L596.0 442.5L598.1 443.4L598.1 445.2L598.0 446.9L600.4 448.4M588.0 450.9L590.2 450.6L592.5 451.1L594.6 449.6L596.7 448.9L599.1 449.5L601.4 450.0L603.5 448.8M588.0 450.9L590.4 451.6L592.5 450.7L594.7 450.2L596.3 447.5L598.8 448.7L601.2 448.8L603.1 447.3M594.1 453.3L593.7 454.5L594.1 456.1L593.1 457.0L592.5 458.2L592.5 460.1L589.4 458.7L588.6 459.6" stroke="#5a9a2a" stroke-width="0.85" fill="none"/><path d="M580.1 450.7L585.0 456.9L583.9 449.1ZM580.3 448.8L578.8 455.0L583.7 451.0ZM581.7 447.9L575.5 450.8L582.3 451.9ZM583.2 448.2L577.1 446.4L580.8 451.6ZM584.0 449.7L581.5 444.2L580.0 450.1ZM583.6 451.2L586.5 444.4L580.4 448.6ZM581.7 451.9L588.0 450.9L582.3 447.9Z" fill="#5ea82e" stroke="#5ea82e" stroke-width="0.8"/><circle cx="582.0" cy="449.9" r="3.4" fill="#62ac30"/>
<polygon points="613.2,379.6 614.3,380.7 616.0,381.9 615.5,382.9 615.1,384.0 612.9,384.7 613.8,386.0 612.5,386.7 611.9,387.6 611.3,388.5 611.3,389.6 613.3,391.5 612.4,392.4 611.8,393.3 611.2,394.2 608.6,393.9 608.3,394.9 608.6,396.3 608.1,397.3 607.7,398.3 607.1,399.2 604.4,398.1 605.0,400.1 604.4,401.0 603.3,401.4 601.9,401.3 601.8,402.7 600.3,402.4 600.8,405.2 599.8,405.6 598.3,405.2 597.0,404.9 596.7,406.8 595.3,406.1 594.6,407.1 593.5,407.2 592.2,406.5 591.2,406.5 590.3,407.2 589.2,407.0 588.1,406.6 587.2,407.2 586.2,408.6 585.1,407.0 584.1,407.2 583.0,408.5 582.0,407.8 580.9,408.2 579.9,407.9 578.9,407.5 577.6,408.3 576.9,406.8 575.8,406.8 574.9,406.1 573.6,406.4 572.9,405.5 571.9,405.2 570.6,405.2 570.0,404.1 569.0,403.8 567.8,403.5 567.8,401.8 567.1,401.0 566.3,400.4 565.0,400.2 564.5,399.2 564.4,397.9 563.6,397.2 563.2,396.2 562.2,395.7 562.1,394.5 560.6,394.2 559.7,393.5 559.0,392.7 558.8,391.6 558.0,390.7 559.0,389.2 558.3,388.3 557.1,387.6 557.3,386.4 557.8,385.3 557.0,384.3 557.5,383.2 557.2,382.2 558.0,381.1 558.2,380.1 557.8,379.1 558.3,378.1 557.9,377.1 557.0,375.9 558.1,375.0 558.7,374.1 558.8,373.1 558.8,372.1 558.2,370.8 559.1,370.0 559.5,369.1 560.2,368.3 559.3,366.7 560.5,366.1 561.2,365.3 561.8,364.5 562.3,363.6 562.6,362.6 562.6,361.2 563.9,360.8 564.7,360.2 564.9,359.0 566.0,358.5 566.1,357.1 567.9,357.5 568.4,356.5 569.1,355.7 570.4,355.6 570.8,354.3 572.1,354.5 573.2,354.3 573.9,353.5 575.1,353.5 575.8,352.4 576.8,352.2 577.6,350.8 578.6,350.6 579.8,350.9 581.0,351.5 582.0,351.1 583.0,351.1 584.1,351.3 585.1,351.4 586.2,350.5 587.2,351.9 588.2,352.2 589.4,351.0 590.3,351.8 591.5,351.4 592.3,352.5 593.5,352.1 594.3,352.8 595.4,352.9 596.3,353.4 597.1,354.3 597.6,355.4 598.6,355.8 600.1,355.1 601.1,355.6 602.0,356.1 602.1,357.7 603.5,357.6 604.6,357.9 605.3,358.8 606.4,359.1 606.7,360.3 607.7,360.9 608.5,361.6 608.2,363.2 610.2,363.0 610.9,364.0 609.0,366.2 611.8,365.9 612.2,367.0 611.8,368.3 610.3,370.0 613.3,370.0 611.3,371.8 614.4,372.0 613.9,373.2 612.2,374.6 612.9,375.5 614.8,376.3 614.8,377.4 615.5,378.5" fill="none" stroke="#5a9a2a" stroke-width="0.85"/><polygon points="613.7,379.6 611.8,380.8 612.0,382.0 612.3,383.2 611.6,384.3 613.2,385.8 612.9,387.1 612.1,388.1 609.6,388.5 612.1,390.8 610.1,391.3 609.7,392.4 608.8,393.4 608.0,394.3 608.4,396.0 606.0,395.7 605.0,396.4 606.4,399.2 604.0,398.6 603.3,399.6 602.8,400.9 602.7,402.8 600.8,402.3 599.2,402.0 598.5,403.1 597.3,403.4 595.9,403.1 595.6,405.5 594.3,405.3 592.6,404.1 591.6,404.6 590.8,406.6 589.5,406.1 588.3,405.8 587.2,406.2 586.0,407.1 584.8,405.6 583.6,406.3 582.6,405.0 581.3,405.7 580.3,405.1 579.1,405.0 577.9,404.9 576.8,404.7 575.4,405.0 574.5,403.9 573.6,403.1 572.0,403.6 570.9,403.0 570.0,402.2 569.6,400.8 568.7,400.0 567.5,399.6 567.3,398.1 566.5,397.3 565.2,396.9 564.6,395.9 563.4,395.3 562.9,394.2 561.1,393.9 560.9,392.6 560.4,391.4 560.0,390.3 559.6,389.1 558.7,388.2 558.4,386.9 558.3,385.7 558.0,384.5 558.4,383.2 558.6,382.0 558.5,380.8 558.9,379.6 558.6,378.4 558.6,377.2 558.2,376.0 558.9,374.9 559.9,373.9 559.7,372.6 560.3,371.6 560.1,370.3 560.5,369.1 561.3,368.2 561.6,367.0 562.4,366.1 563.1,365.2 563.1,363.7 563.9,362.8 565.0,362.1 565.5,361.0 566.6,360.4 567.7,359.8 569.2,359.8 569.4,358.2 571.1,358.6 571.9,357.8 572.9,357.1 573.7,356.3 574.4,354.9 575.5,354.4 576.7,354.4 577.8,353.8 578.7,352.6 580.0,353.0 581.2,352.9 582.3,352.0 583.6,352.7 584.8,352.9 586.0,352.3 587.2,352.0 588.3,353.1 589.7,352.4 590.7,353.2 592.1,352.5 593.1,353.5 594.2,354.1 595.2,354.7 596.1,355.6 597.1,356.3 598.5,356.1 599.5,356.7 600.2,357.9 601.1,358.5 602.6,358.6 604.2,358.6 603.8,360.8 605.6,360.7 606.8,361.2 606.2,363.3 606.9,364.3 607.7,365.1 607.4,366.7 607.3,368.0 607.9,368.9 610.4,369.1 609.6,370.7 611.4,371.3 609.8,373.0 612.0,373.6 610.7,375.1 611.4,376.1 612.9,377.2 613.8,378.3" fill="none" stroke="#5a9a2a" stroke-width="0.6" opacity="0.8"/><path d="M605.9 374.5l-0.5 -1.7l-2.2 -0.5l1.7 1.2M588.1 401.2l0.2 -1.1l-1.6 -2.0l-1.1 1.7M583.3 404.6l1.5 -1.5l-1.0 0.6l0.9 1.4M580.3 400.0l0.5 0.9l0.0 -1.6l-0.1 -1.6M575.0 402.8l0.2 -1.0l2.0 0.4l1.5 1.4M603.9 393.0l0.5 -0.3l-1.7 -1.0l1.3 -1.8M601.3 361.5l-1.1 0.2l-0.1 -0.8l2.0 -1.2M606.0 386.4l0.7 -1.1l-0.7 1.2l-0.7 0.2M578.7 399.6l-2.2 -1.4l1.3 0.6l-1.1 -0.7M606.4 369.9l-2.3 1.0l2.0 2.3l0.9 1.8M598.4 361.7l2.3 1.4l-0.4 2.2l0.5 1.3M607.0 378.3l-0.3 -1.8l-0.6 2.3l-0.7 -2.0M599.5 363.4l1.4 -0.7l-1.0 -2.0l1.9 -0.3M605.1 372.7l-2.2 -1.7l0.9 -1.8l-1.8 -0.0M611.1 374.3l-1.9 0.1l1.4 -0.5l2.0 -0.1M607.7 374.5l-2.3 -0.4l-1.3 1.9l1.3 -0.0M599.1 362.4l-1.3 -1.5l-1.3 1.8l-1.4 -1.8M576.2 401.5l2.5 -0.5l2.0 0.8l1.2 1.0M603.0 391.2l-1.4 1.9l2.0 2.1l-0.7 0.6M585.7 403.8l1.6 0.1l0.8 0.9l-0.9 1.7M575.6 398.1l2.4 2.3l0.8 -2.3l1.6 -1.5M573.1 400.6l-2.2 -1.7l0.7 0.3l1.0 1.7M605.0 373.5l2.1 -2.4l1.9 -1.9l1.2 1.1M579.8 402.6l1.9 -1.5l0.9 -0.8l1.6 1.1M605.9 391.1l-2.4 -2.3l0.5 -0.1l1.5 0.4M604.6 367.7l1.3 0.1l-2.4 1.7l1.3 -1.7M602.2 394.9l1.4 -0.9l-1.3 -0.1l1.9 -1.6M604.8 365.4l1.9 0.1l-0.3 1.8l1.1 -1.7M580.1 400.6l-1.0 1.7l-0.4 1.5l-1.3 1.5M604.8 370.6l-0.0 -0.8l0.2 2.0l0.8 -2.0M609.0 379.5l-0.1 1.1l-0.1 -2.1l-1.0 1.4M610.0 383.1l2.4 0.6l0.9 0.5l-0.7 1.7M608.0 391.8l-1.0 1.8l1.4 0.6l-0.2 -1.4M587.7 402.1l0.8 -1.8l-2.1 -1.8l1.2 -1.3M578.4 401.1l0.4 -0.7l0.6 -2.0l-0.4 1.7M607.5 369.6l-0.9 -1.0l-2.4 -2.4l1.8 1.3M585.6 404.7l2.3 -1.7l0.4 -0.0l0.3 1.8M589.0 405.4l-1.9 0.8l0.9 1.2l0.5 1.3M611.2 378.8l-0.5 0.5l2.0 1.0l-0.8 -1.1M580.0 392.3l5.0 4.7l0.8 1.8M591.2 386.9l3.2 2.0l0.4 2.1M588.4 392.1l3.1 4.9l1.2 1.3M574.1 397.7l5.0 4.8l1.2 1.6M574.7 386.5l2.7 4.8l1.8 2.6" stroke="#5a9a2a" stroke-width="0.8" fill="none"/>
<polygon points="555.8,489.3 556.4,490.4 553.2,491.2 554.8,492.3 556.5,493.6 555.4,494.5 556.3,495.8 553.3,496.1 554.4,497.5 553.3,498.2 553.9,499.6 553.6,500.6 551.3,500.6 551.5,501.8 551.2,502.8 552.6,504.8 551.6,505.5 549.2,505.1 550.4,507.3 548.1,506.7 548.7,508.6 546.8,508.3 545.8,508.7 547.1,511.6 544.8,510.6 544.0,511.2 544.6,513.8 543.5,514.1 541.6,513.1 541.8,515.5 540.3,514.9 539.5,515.8 538.1,515.1 537.9,517.6 536.7,517.5 535.9,518.7 534.8,518.9 533.4,517.6 532.4,518.0 531.2,517.7 530.2,517.6 529.1,517.4 528.1,517.8 527.0,518.3 526.0,516.8 524.9,517.9 524.0,517.0 523.0,516.8 521.8,517.5 520.9,516.7 520.0,516.2 518.9,516.3 517.7,516.3 517.1,515.1 515.6,516.0 515.2,514.2 513.8,514.8 512.8,514.3 512.7,512.6 511.2,513.0 510.7,511.8 509.7,511.4 509.5,510.1 508.7,509.5 507.8,508.9 506.2,509.1 506.4,507.5 505.0,507.3 504.2,506.6 503.6,505.8 503.8,504.3 503.3,503.4 502.6,502.6 501.9,501.9 502.4,500.5 501.1,499.9 500.7,499.0 500.1,498.1 500.9,496.8 499.1,496.2 500.0,494.9 499.2,494.0 498.4,493.0 497.6,492.0 498.3,490.9 497.3,489.9 497.9,488.8 498.3,487.7 498.5,486.6 498.9,485.6 499.4,484.6 499.6,483.6 499.1,482.4 499.0,481.3 500.6,480.7 501.1,479.8 500.1,478.2 501.1,477.5 501.7,476.6 502.4,475.8 502.4,474.6 502.6,473.5 503.7,472.9 504.4,472.1 505.5,471.7 505.2,470.1 507.0,470.3 507.2,469.1 507.7,468.0 509.2,468.1 509.4,466.7 510.0,465.8 511.1,465.5 511.9,464.7 513.4,465.1 514.0,464.2 515.2,464.3 515.7,463.0 517.1,463.5 518.0,463.1 518.8,462.1 519.9,462.1 520.9,461.8 522.0,462.4 523.0,462.1 524.0,461.5 525.0,461.7 526.0,461.7 527.0,461.3 528.1,461.5 529.1,461.0 530.3,460.0 531.4,460.1 532.3,460.7 533.4,461.1 534.3,461.6 535.2,462.3 536.2,462.4 537.5,462.1 538.5,462.3 539.1,463.6 540.4,463.3 541.4,463.8 542.3,464.4 543.2,465.0 544.3,465.3 544.6,466.6 546.0,466.6 546.1,468.1 547.2,468.4 548.5,468.7 549.0,469.6 548.9,471.2 551.0,470.9 551.0,472.2 551.5,473.2 550.7,474.9 552.6,475.0 552.4,476.3 554.1,476.7 554.0,477.9 555.4,478.5 555.2,479.7 555.9,480.6 554.7,482.1 555.7,482.9 556.0,484.0 556.3,485.0 554.5,486.3 556.2,487.2 556.2,488.2" fill="none" stroke="#5a9a2a" stroke-width="0.85"/><polygon points="555.7,489.3 555.5,490.6 554.1,491.7 554.2,492.9 555.2,494.3 555.8,495.7 554.4,496.7 553.6,497.7 552.7,498.7 552.2,499.8 552.7,501.3 551.3,502.0 551.0,503.2 550.6,504.4 549.8,505.3 547.5,505.1 547.1,506.3 547.3,508.0 546.1,508.5 545.7,509.9 543.2,508.8 542.7,509.9 542.3,511.3 541.7,512.7 540.0,512.0 539.7,514.1 538.2,513.8 537.0,514.0 536.4,515.6 534.6,514.1 534.0,516.1 532.4,514.7 531.3,514.9 530.1,514.5 529.0,515.2 527.9,516.0 526.7,514.9 525.6,515.6 524.4,515.5 523.2,515.3 522.1,515.0 520.7,515.7 519.7,515.1 518.5,514.8 517.3,514.6 516.5,513.5 514.9,514.0 513.8,513.6 513.1,512.2 511.6,512.3 510.7,511.5 510.0,510.4 509.2,509.6 508.5,508.5 507.4,507.9 506.7,507.0 506.0,506.0 505.4,504.9 504.7,503.9 504.6,502.6 503.9,501.7 502.8,500.9 502.3,499.8 502.1,498.6 501.5,497.6 500.1,496.7 500.1,495.4 500.0,494.2 500.5,492.9 500.5,491.7 500.3,490.5 500.7,489.3 500.8,488.1 501.8,487.0 501.1,485.8 502.0,484.8 502.0,483.6 501.9,482.4 501.6,481.1 502.7,480.2 502.7,479.0 503.8,478.2 503.4,476.6 504.8,476.1 505.0,474.8 505.4,473.7 506.0,472.7 507.0,471.9 507.4,470.7 508.8,470.4 508.7,468.5 510.0,468.1 510.9,467.3 512.2,467.1 513.1,466.3 514.1,465.6 515.3,465.4 516.6,465.4 517.6,464.8 518.4,463.4 519.8,463.8 520.7,462.9 521.8,462.1 523.1,462.4 524.2,461.3 525.5,461.6 526.7,460.9 527.9,462.0 529.1,461.9 530.3,462.3 531.4,462.8 532.6,462.9 533.8,463.3 534.9,463.8 536.2,463.5 537.0,464.7 537.9,465.6 539.4,465.1 540.2,466.2 540.7,467.5 542.4,467.0 543.3,467.8 544.1,468.7 545.3,469.2 545.3,470.9 547.2,470.7 547.2,472.2 549.1,472.3 550.2,473.0 550.0,474.6 550.4,475.7 551.7,476.4 552.1,477.5 551.9,478.9 551.0,480.5 552.0,481.4 553.2,482.3 551.5,483.9 553.0,484.7 554.9,485.6 554.7,486.9 553.5,488.1" fill="none" stroke="#5a9a2a" stroke-width="0.6" opacity="0.8"/><path d="M540.8 510.0l1.5 2.2l1.2 2.1l-1.9 -0.1M516.8 511.1l2.0 -1.9l-0.2 -1.3l0.2 0.3M539.8 471.5l-1.1 2.1l1.3 -1.7l1.2 -1.4M539.2 506.9l-2.5 1.9l-1.5 -1.4l1.9 1.5M553.2 487.4l0.2 0.9l-1.5 2.2l0.8 1.9M521.0 510.6l-0.7 -1.7l-1.8 -2.2l-0.8 0.4M540.7 468.9l-0.8 -1.0l1.6 -0.1l-0.7 -0.1M533.8 509.1l2.4 -2.4l1.2 1.7l-1.9 1.2M550.8 493.4l-2.5 -2.3l-1.6 2.3l-1.2 1.0M517.1 513.1l-0.8 -0.7l0.1 1.4l-1.6 1.0M527.8 514.7l-2.3 2.2l-2.0 -0.8l0.4 1.7M553.0 491.6l0.2 -0.9l-0.9 -1.6l-1.7 -1.4M536.7 513.8l-1.7 -2.3l2.4 0.2l-0.4 -1.1M543.0 509.1l-0.2 -0.4l-2.2 2.1l-1.9 -0.0M524.9 510.4l1.2 2.2l0.7 1.4l-1.6 -0.3M549.3 476.7l-1.0 -0.2l2.5 1.8l1.9 -0.2M548.2 502.5l-0.1 -1.0l-0.5 -1.8l-0.5 2.0M515.7 510.4l-0.0 -0.8l-2.1 -1.1l1.1 1.5M552.0 493.2l1.4 1.0l0.8 1.3l-0.5 0.8M550.5 486.9l1.3 1.0l-1.0 2.2l0.6 0.3M540.8 469.9l-1.2 0.9l-0.2 1.6l0.6 1.2M551.3 492.0l1.2 1.6l-0.7 1.7l1.5 0.8M513.7 511.4l0.1 0.1l-1.7 1.7l1.7 -0.1M535.9 512.4l1.2 -1.6l1.4 0.4l0.7 -0.3M540.9 510.2l0.7 1.1l-2.4 -1.7l-0.2 0.6M550.6 482.1l0.7 -2.3l-0.1 -1.4l-1.8 -1.5M548.9 489.6l-1.5 -2.3l-0.2 -0.6l0.4 0.4M552.2 483.2l-2.5 -0.5l-1.1 -0.4l-1.5 1.3M547.6 493.3l0.6 -2.0l0.2 -0.8l0.3 1.8M526.2 512.2l1.6 0.7l-0.7 -1.8l0.4 0.3M515.0 512.2l0.5 -0.7l2.0 -2.5l-1.6 0.3M539.4 506.9l0.6 2.0l-0.6 -0.3l-1.1 -0.8M515.6 508.7l2.3 2.1l0.5 -1.2l1.9 -0.0M548.4 496.5l2.4 -0.0l-1.1 -0.1l-1.5 0.5M547.6 498.3l1.4 1.6l-2.4 0.2l-0.9 1.7M528.8 511.2l-1.2 -1.7l2.4 -1.0l0.4 -0.1M538.9 510.2l1.2 -1.9l1.3 -1.0l0.1 -0.7M550.8 488.1l-0.2 -0.7l1.2 0.5l-1.9 -1.0M550.4 500.7l1.9 0.2l-2.4 1.4l-0.3 0.3M530.6 502.1l3.4 4.7l0.8 1.8M533.9 495.2l2.9 4.5l0.1 2.7M530.3 498.9l2.9 4.3l1.8 1.3M525.4 500.8l3.5 3.0l0.3 2.2M533.0 493.2l2.7 4.5l1.6 2.3" stroke="#5a9a2a" stroke-width="0.8" fill="none"/>
<polygon points="663.1,552.6 665.4,553.6 664.7,554.6 665.7,555.8 664.4,556.6 665.8,558.1 664.0,558.6 665.6,560.4 665.0,561.4 663.5,561.8 663.2,562.9 662.9,564.0 660.8,563.7 661.0,565.2 660.9,566.6 658.9,566.1 659.4,568.3 658.4,568.8 657.9,570.0 656.2,569.3 654.9,569.2 654.8,571.5 653.8,571.9 652.3,571.2 651.1,570.5 650.1,571.0 649.3,572.2 648.1,571.5 647.1,573.0 646.0,572.0 645.0,571.0 644.0,571.5 643.1,570.6 641.9,571.3 640.9,570.9 640.1,570.1 639.0,570.1 637.9,570.0 636.8,569.8 635.6,569.7 635.5,567.9 634.4,567.6 633.5,567.1 633.1,565.9 632.2,565.4 632.2,564.1 630.5,564.1 630.3,563.0 630.1,561.8 628.7,561.4 628.6,560.3 628.3,559.3 627.5,558.4 627.7,557.3 627.3,556.3 626.1,555.4 626.2,554.3 627.1,553.1 625.8,552.0 627.1,551.0 626.8,549.9 626.3,548.7 627.2,547.8 628.2,547.0 628.7,546.1 629.2,545.2 630.1,544.5 629.3,542.9 630.9,542.7 630.9,541.4 631.0,540.1 632.1,539.7 632.2,538.3 633.8,538.5 634.0,537.1 635.1,536.7 636.2,536.5 637.0,535.8 638.2,535.9 638.9,534.8 639.8,534.4 640.9,534.4 641.9,534.1 642.9,533.5 644.0,533.8 645.0,534.1 646.0,532.9 647.1,533.5 648.2,533.0 649.3,532.5 650.3,533.4 651.3,533.8 652.3,534.0 653.6,533.8 654.3,534.8 655.0,535.7 656.0,536.1 657.4,535.9 657.5,537.7 658.6,538.0 660.2,537.7 660.7,538.8 660.8,540.1 661.9,540.6 662.4,541.5 662.0,543.0 663.0,543.7 663.1,544.8 664.8,545.2 663.6,546.7 665.0,547.4 666.2,548.2 666.3,549.3 664.5,550.6 665.3,551.6" fill="none" stroke="#5a9a2a" stroke-width="0.85"/><polygon points="664.7,552.6 665.2,553.8 663.1,554.8 662.4,555.8 662.9,557.0 661.9,557.9 663.6,559.8 664.4,561.5 661.5,561.4 662.4,563.3 660.1,563.2 661.0,565.5 659.2,565.5 657.9,565.8 656.4,565.7 655.7,566.6 655.7,568.9 653.7,567.5 653.0,568.9 651.9,569.1 650.7,569.1 649.8,570.1 648.5,569.2 647.5,570.7 646.3,569.5 645.2,569.7 644.0,570.1 643.1,568.9 642.1,568.4 640.9,568.5 639.7,568.5 639.0,567.4 637.4,568.0 636.3,567.6 635.8,566.3 634.3,566.3 634.0,564.9 632.6,564.6 631.8,563.8 631.3,562.6 630.6,561.6 629.5,560.9 629.9,559.4 629.3,558.4 629.1,557.2 629.7,555.9 628.3,555.0 629.1,553.7 628.0,552.6 628.3,551.4 629.0,550.3 628.9,549.1 629.0,548.0 629.8,547.0 629.9,545.8 631.8,545.4 631.3,543.9 631.8,542.9 633.1,542.5 633.3,541.2 634.5,540.8 634.7,539.4 635.5,538.5 636.7,538.3 637.2,536.9 638.6,536.9 639.6,536.5 640.5,535.4 641.5,534.7 642.8,535.2 644.0,535.3 645.1,534.7 646.3,534.7 647.4,535.4 648.6,535.2 649.9,534.5 651.2,534.3 652.1,535.5 653.4,535.4 654.4,536.1 654.8,537.9 656.2,537.7 656.9,538.8 657.1,540.3 657.9,541.0 658.8,541.6 660.4,541.8 659.8,543.6 661.3,543.9 662.6,544.6 662.4,545.9 663.3,546.8 662.2,548.3 665.2,548.8 665.4,550.1 665.1,551.4" fill="none" stroke="#5a9a2a" stroke-width="0.6" opacity="0.8"/><path d="M646.8 569.7l-0.1 -1.2l-2.5 0.8l-0.1 1.0M662.9 555.9l-1.1 1.5l1.1 -0.4l0.2 0.7M661.2 546.6l1.5 -1.2l1.5 0.9l1.4 -0.7M659.3 541.6l1.5 -0.3l-2.0 -1.5l0.5 -0.8M638.9 567.0l-1.5 0.8l-0.7 2.2l1.6 0.1M654.4 567.1l1.5 2.4l-2.4 -0.7l0.4 -0.8M655.3 563.6l1.9 0.1l-1.9 0.8l-0.8 -1.2M658.6 560.1l-1.5 1.8l1.0 -2.4l1.1 -1.9M663.7 553.7l0.6 -1.0l-0.6 -0.6l-1.5 2.0M656.8 541.2l1.2 -0.5l2.4 -1.3l1.9 1.6M653.5 568.4l-0.3 1.7l1.5 0.1l-0.1 0.8M659.9 556.9l1.2 -1.2l-0.1 1.4l-1.3 -1.9M659.6 543.4l-0.7 -1.2l-0.2 2.1l-1.0 -0.4M642.4 568.4l-1.2 -0.1l-0.1 -1.8l-0.5 -0.8M646.2 567.7l0.8 2.4l2.1 -0.6l0.4 -0.7M661.5 556.9l1.5 2.2l-1.0 -2.5l-0.2 -1.8M656.7 539.3l-1.9 1.1l-0.7 2.2l1.4 -1.8M662.6 546.0l0.6 -0.4l1.4 1.6l-0.0 -0.1M658.2 543.0l-1.8 0.6l0.5 -1.8l0.5 -1.6M659.2 542.5l-0.2 2.0l0.6 1.0l-1.5 1.3M658.4 541.7l2.1 2.0l2.0 -0.2l0.8 1.2M661.1 543.3l2.0 -0.3l1.4 -0.3l-0.9 0.8M658.2 540.5l2.4 -1.1l2.2 -2.1l1.4 -0.9M638.6 566.1l2.1 -2.3l-2.1 1.6l0.6 0.1M655.4 541.2l-0.6 -2.2l2.5 1.3l1.8 0.8M660.4 554.0l1.2 -1.9l0.2 -0.2l-0.0 -1.7M657.8 541.6l-2.3 0.1l-1.7 -1.1l-1.4 0.3M643.6 556.9l2.7 3.7l1.8 1.8M640.1 557.9l2.7 3.7l1.6 2.1M640.5 558.0l3.1 3.3l0.8 3.0M646.1 561.6l4.1 3.9l1.6 1.7M647.9 564.9l2.5 3.9l0.8 1.1" stroke="#5a9a2a" stroke-width="0.8" fill="none"/>
<polygon points="462.9,449.8 462.3,451.6 461.9,453.3 460.7,454.8 460.1,456.5 458.8,457.8 457.1,458.5 455.6,459.8 453.7,460.7 451.8,459.8 449.9,459.7 448.3,458.7 446.9,457.5 445.7,456.2 444.1,455.1 443.5,453.3 443.1,451.6 442.4,449.8 442.7,447.9 442.9,446.0 443.6,444.2 445.0,442.7 446.7,441.9 448.4,441.2 450.1,440.6 451.9,440.7 453.6,439.9 455.4,440.3 457.2,440.8 459.1,441.3 460.2,443.0 461.2,444.5 462.1,446.2 462.5,448.0" fill="none" stroke="#5ea62e" stroke-width="1.1"/><path d="M452.7 449.8Q449.7 444.6 444.6 446.1Q446.8 451.0 452.7 449.8M448.3 447.8L444.4 446.7M452.7 449.8Q455.3 444.2 451.2 440.7Q448.4 445.4 452.7 449.8M451.9 444.8L450.5 440.8M452.7 449.8Q458.7 450.5 460.6 445.5Q455.3 444.3 452.7 449.8M457.0 447.4L460.2 444.9M452.7 449.8Q456.1 454.7 461.0 452.8Q458.4 448.1 452.7 449.8M457.2 451.4L461.2 452.1M452.7 449.8Q449.8 454.8 453.8 458.1Q456.8 453.9 452.7 449.8M453.3 454.4L454.4 458.0M452.7 449.8Q446.5 449.0 444.2 454.1Q449.6 455.3 452.7 449.8M448.0 452.1L444.5 454.6" stroke="#62ab30" stroke-width="1" fill="none"/>
<polygon points="492.0,447.0 491.8,448.8 490.8,450.4 490.3,452.2 489.5,453.8 488.0,454.9 486.1,455.3 484.8,456.7 482.9,457.0 481.0,457.5 479.1,457.0 477.7,455.6 475.8,455.2 474.2,454.1 473.5,452.3 473.1,450.4 472.8,448.7 472.4,447.0 472.0,445.1 472.7,443.4 473.6,441.8 474.8,440.4 476.0,439.1 477.4,437.8 479.4,437.7 481.1,437.2 482.9,437.3 484.7,437.5 486.5,438.0 488.2,438.8 489.3,440.4 490.5,441.8 492.3,443.0 492.6,445.0" fill="none" stroke="#5ea62e" stroke-width="1.1"/><path d="M482.0 447.0Q476.1 445.1 473.0 449.6Q478.0 451.8 482.0 447.0M477.0 448.4L473.2 450.3M482.0 447.0Q480.8 441.2 475.5 441.1Q476.1 446.4 482.0 447.0M478.4 443.8L475.1 441.6M482.0 447.0Q486.5 443.5 484.0 439.0Q479.7 441.7 482.0 447.0M483.1 442.6L483.4 438.8M482.0 447.0Q487.7 448.9 490.6 444.4Q485.7 442.2 482.0 447.0M486.7 445.6L490.4 443.8M482.0 447.0Q482.4 452.7 487.5 453.0Q487.6 448.0 482.0 447.0M485.0 450.3L488.0 452.6M482.0 447.0Q477.8 450.8 480.7 455.0Q484.7 452.0 482.0 447.0M481.3 451.4L481.3 455.1" stroke="#62ab30" stroke-width="1" fill="none"/>
<polygon points="518.8,436.5 518.9,438.3 518.6,440.0 518.1,441.8 516.8,443.2 515.5,444.4 513.9,445.3 512.3,446.5 510.4,446.7 508.6,446.6 506.9,445.8 504.8,445.9 503.7,444.2 502.0,443.3 501.5,441.5 500.5,440.0 500.2,438.2 499.3,436.5 499.1,434.6 500.6,433.0 501.2,431.3 501.6,429.3 503.4,428.4 505.1,427.7 506.7,426.7 508.6,426.7 510.4,427.1 512.2,426.9 513.7,428.0 515.4,428.7 517.1,429.6 517.9,431.3 519.5,432.6 519.3,434.7" fill="none" stroke="#5ea62e" stroke-width="1.1"/><path d="M509.5 436.5Q504.2 433.6 500.6 437.5Q505.0 440.6 509.5 436.5M504.6 437.1L500.6 438.2M509.5 436.5Q508.8 430.9 503.8 430.9Q503.9 435.9 509.5 436.5M506.4 433.4L503.3 431.3M509.5 436.5Q514.3 433.2 512.2 428.5Q507.6 431.0 509.5 436.5M511.0 432.1L511.6 428.3M509.5 436.5Q514.7 439.7 518.5 435.9Q514.2 432.6 509.5 436.5M514.5 436.2L518.5 435.2M509.5 436.5Q509.7 442.5 514.9 443.5Q515.3 438.2 509.5 436.5M512.5 440.4L515.4 443.1M509.5 436.5Q504.5 439.2 506.2 444.0Q510.9 442.0 509.5 436.5M507.7 440.6L506.8 444.3" stroke="#62ab30" stroke-width="1" fill="none"/>
<polygon points="538.2,543.1 538.2,544.9 537.9,546.7 536.8,548.2 535.9,549.8 534.1,550.5 532.7,551.6 531.1,552.4 529.4,553.1 527.6,553.0 525.7,553.0 523.8,552.5 522.5,551.0 521.1,549.9 520.2,548.2 519.2,546.7 518.8,544.9 518.2,543.1 518.5,541.2 519.3,539.5 519.7,537.6 520.7,536.0 522.4,535.0 523.7,533.4 525.7,533.4 527.6,533.2 529.4,533.1 531.2,533.5 532.7,534.6 534.3,535.5 535.6,536.6 536.6,538.1 538.4,539.2 539.0,541.1" fill="none" stroke="#5ea62e" stroke-width="1.1"/><path d="M528.5 543.1Q524.5 547.6 527.5 552.1Q531.4 548.4 528.5 543.1M527.9 548.0L528.2 552.1M528.5 543.1Q523.0 541.4 520.8 546.0Q525.5 548.0 528.5 543.1M524.2 544.7L521.0 546.7M528.5 543.1Q526.2 537.8 521.3 539.2Q522.8 544.0 528.5 543.1M524.5 540.9L521.0 539.7M528.5 543.1Q531.9 538.0 528.3 534.0Q524.8 538.2 528.5 543.1M528.4 538.1L527.6 534.0M528.5 543.1Q534.5 543.4 535.9 538.3Q530.6 537.5 528.5 543.1M532.6 540.5L535.5 537.7M528.5 543.1Q530.9 548.4 535.9 547.1Q534.3 542.2 528.5 543.1M532.6 545.3L536.2 546.5" stroke="#62ab30" stroke-width="1" fill="none"/>
<polygon points="516.4,563.2 516.5,565.0 516.8,567.1 515.6,568.7 514.0,569.8 512.7,571.2 510.9,571.7 509.4,572.9 507.6,572.9 505.8,572.6 504.0,572.9 502.2,572.3 500.6,571.3 498.9,570.3 497.9,568.7 497.7,566.7 497.0,565.0 496.4,563.2 497.3,561.4 497.8,559.7 498.7,558.3 499.4,556.6 500.8,555.4 502.2,554.1 503.8,553.0 505.8,553.4 507.7,552.5 509.5,553.3 511.1,554.4 512.7,555.3 514.0,556.6 514.7,558.3 516.2,559.5 516.8,561.3" fill="none" stroke="#5ea62e" stroke-width="1.1"/><path d="M506.7 563.2Q508.0 569.1 513.4 569.2Q512.7 563.9 506.7 563.2M510.4 566.5L513.8 568.7M506.7 563.2Q502.0 566.7 504.4 571.3Q508.8 568.6 506.7 563.2M505.4 567.6L505.0 571.5M506.7 563.2Q500.7 562.2 498.5 567.2Q503.7 568.5 506.7 563.2M502.2 565.4L498.8 567.7M506.7 563.2Q505.5 557.5 500.3 557.6Q500.9 562.8 506.7 563.2M503.2 560.1L499.9 558.1M506.7 563.2Q511.1 559.3 508.4 554.8Q504.2 557.9 506.7 563.2M507.7 558.6L507.8 554.6M506.7 563.2Q512.0 565.3 514.5 560.8Q510.0 558.5 506.7 563.2M511.0 561.9L514.3 560.2" stroke="#62ab30" stroke-width="1" fill="none"/>
<polygon points="503.2,589.3 502.7,591.1 503.0,593.2 501.6,594.7 500.7,596.3 499.5,597.9 497.4,598.1 495.7,598.7 493.9,599.1 492.1,598.5 490.4,598.5 488.6,598.2 486.8,597.5 485.4,596.2 484.0,594.9 483.6,592.9 482.5,591.3 482.8,589.3 483.8,587.6 484.1,585.9 484.6,584.1 486.0,582.9 487.1,581.5 488.6,580.5 490.2,579.5 492.0,578.7 494.0,578.6 495.8,579.6 497.5,580.3 499.3,580.9 500.4,582.5 501.6,584.0 501.6,586.0 502.2,587.6" fill="none" stroke="#5ea62e" stroke-width="1.1"/><path d="M493.0 589.3Q498.9 590.8 501.5 586.0Q496.4 584.2 493.0 589.3M497.7 587.5L501.3 585.4M493.0 589.3Q494.6 595.4 500.1 595.6Q499.2 590.1 493.0 589.3M496.9 592.8L500.5 595.1M493.0 589.3Q488.7 593.8 491.5 598.5Q495.7 594.9 493.0 589.3M492.2 594.4L492.2 598.6M493.0 589.3Q487.4 586.7 483.8 590.8Q488.5 593.6 493.0 589.3M488.0 590.1L484.0 591.5M493.0 589.3Q493.3 583.5 488.3 582.4Q487.5 587.5 493.0 589.3M490.4 585.5L487.8 582.7M493.0 589.3Q497.7 585.4 495.3 580.5Q490.8 583.6 493.0 589.3M494.3 584.5L494.6 580.4" stroke="#62ab30" stroke-width="1" fill="none"/>
<polygon points="650.9,415.4 650.4,417.2 649.7,418.9 649.3,420.7 647.6,421.7 646.5,423.0 645.0,424.0 643.3,424.4 641.7,425.8 639.7,425.7 637.9,425.4 636.0,424.8 634.7,423.4 633.0,422.4 632.0,420.8 631.4,419.0 631.9,417.1 631.1,415.4 630.5,413.5 631.4,411.8 632.4,410.3 633.3,408.6 634.6,407.4 636.0,406.0 637.9,405.7 639.8,405.8 641.6,405.9 643.5,405.5 645.1,406.6 646.3,407.9 648.4,408.4 649.5,409.9 650.5,411.6 651.1,413.5" fill="none" stroke="#5ea62e" stroke-width="1.1"/><path d="M640.7 415.4Q635.0 416.8 635.2 422.0Q640.4 421.3 640.7 415.4M637.7 419.0L635.7 422.5M640.7 415.4Q636.6 411.2 632.2 414.0Q635.5 418.1 640.7 415.4M636.0 414.6L632.1 414.7M640.7 415.4Q642.7 410.0 638.2 407.4Q636.0 412.0 640.7 415.4M639.3 411.0L637.6 407.6M640.7 415.4Q646.3 414.5 646.1 409.5Q641.1 409.8 640.7 415.4M643.7 412.1L645.6 409.0M640.7 415.4Q644.9 419.4 649.1 416.4Q645.8 412.4 640.7 415.4M645.3 415.9L649.2 415.7M640.7 415.4Q639.7 421.5 644.7 423.6Q646.1 418.4 640.7 415.4M642.9 419.9L645.3 423.3" stroke="#62ab30" stroke-width="1" fill="none"/>
<polygon points="643.0,443.2 643.0,445.1 642.3,446.8 641.0,448.1 639.9,449.5 638.8,450.8 637.6,452.4 635.8,453.2 634.0,453.5 632.1,453.0 630.1,453.3 628.3,452.6 627.1,451.1 625.4,450.2 625.2,448.0 623.9,446.7 622.7,445.1 623.0,443.2 623.0,441.3 623.5,439.5 623.9,437.6 625.6,436.5 626.8,434.9 628.4,434.0 630.4,434.0 632.1,433.7 633.9,433.6 635.8,433.4 637.4,434.3 639.3,434.8 640.2,436.6 642.1,437.5 643.1,439.3 643.1,441.3" fill="none" stroke="#5ea62e" stroke-width="1.1"/><path d="M633.0 443.2Q628.7 438.6 623.8 441.1Q627.1 445.5 633.0 443.2M627.9 442.0L623.7 441.7M633.0 443.2Q634.0 437.1 629.0 435.0Q627.6 440.2 633.0 443.2M630.8 438.7L628.4 435.2M633.0 443.2Q638.9 441.8 638.9 436.4Q633.6 437.2 633.0 443.2M636.3 439.5L638.4 436.0M633.0 443.2Q637.4 446.8 641.0 443.4Q637.5 439.8 633.0 443.2M637.4 443.3L641.1 442.7M633.0 443.2Q631.8 449.2 636.7 451.5Q638.3 446.3 633.0 443.2M635.1 447.8L637.3 451.2M633.0 443.2Q627.4 445.3 628.2 450.5Q633.3 449.2 633.0 443.2M630.3 447.2L628.7 450.9" stroke="#62ab30" stroke-width="1" fill="none"/>
<polygon points="636.4,474.0 636.0,475.8 635.8,477.7 635.0,479.5 633.3,480.5 631.8,481.5 630.6,482.9 628.8,483.2 627.1,484.0 625.2,484.3 623.4,483.8 621.5,483.4 620.0,482.3 618.7,480.8 617.5,479.4 616.9,477.6 616.9,475.7 616.3,474.0 616.1,472.1 616.9,470.4 618.3,469.1 618.8,467.3 620.2,466.0 621.4,464.4 623.5,464.4 625.3,463.8 627.1,464.1 629.0,464.2 630.6,465.1 632.0,466.3 633.4,467.5 634.6,468.8 635.3,470.5 636.2,472.1" fill="none" stroke="#5ea62e" stroke-width="1.1"/><path d="M626.2 474.0Q624.7 479.7 629.4 481.9Q631.2 477.0 626.2 474.0M628.0 478.3L630.0 481.6M626.2 474.0Q620.7 476.4 621.8 481.6Q626.8 479.9 626.2 474.0M623.8 478.2L622.4 481.9M626.2 474.0Q621.7 470.1 617.5 473.2Q621.1 477.1 626.2 474.0M621.4 473.6L617.5 473.9M626.2 474.0Q627.4 468.3 622.6 466.4Q621.0 471.3 626.2 474.0M624.2 469.8L622.0 466.7M626.2 474.0Q631.8 471.6 630.9 466.3Q625.7 467.9 626.2 474.0M628.8 469.7L630.3 465.9M626.2 474.0Q631.0 477.7 635.2 474.3Q631.3 470.7 626.2 474.0M631.2 474.2L635.2 473.7" stroke="#62ab30" stroke-width="1" fill="none"/>
<polygon points="642.4,506.3 642.8,508.1 642.2,509.9 641.2,511.4 640.1,512.8 639.0,514.2 637.5,515.4 635.8,516.0 633.9,516.3 632.1,516.1 630.4,515.3 628.6,515.2 627.1,514.1 626.2,512.5 625.0,511.3 623.7,509.9 623.2,508.1 622.3,506.3 622.5,504.3 623.8,502.7 624.8,501.2 625.3,499.3 626.9,498.2 628.7,497.7 630.3,496.9 632.1,496.9 634.0,495.9 635.9,496.0 637.6,497.0 639.3,498.0 640.5,499.5 641.8,500.9 642.6,502.6 643.0,504.4" fill="none" stroke="#5ea62e" stroke-width="1.1"/><path d="M633.0 506.3Q634.5 500.5 629.8 498.1Q628.0 503.1 633.0 506.3M631.2 501.8L629.2 498.4M633.0 506.3Q638.6 504.3 637.8 499.2Q632.7 500.4 633.0 506.3M635.6 502.4L637.2 498.8M633.0 506.3Q636.8 510.7 641.2 508.1Q638.3 503.8 633.0 506.3M637.5 507.3L641.4 507.4M633.0 506.3Q632.5 512.1 637.5 513.4Q638.4 508.3 633.0 506.3M635.5 510.2L638.1 513.0M633.0 506.3Q627.6 508.6 628.8 513.7Q633.8 512.1 633.0 506.3M630.7 510.4L629.4 514.0M633.0 506.3Q628.5 502.8 624.8 506.3Q628.5 509.8 633.0 506.3M628.5 506.3L624.8 507.0" stroke="#62ab30" stroke-width="1" fill="none"/>
</g>
</svg></body></html>
